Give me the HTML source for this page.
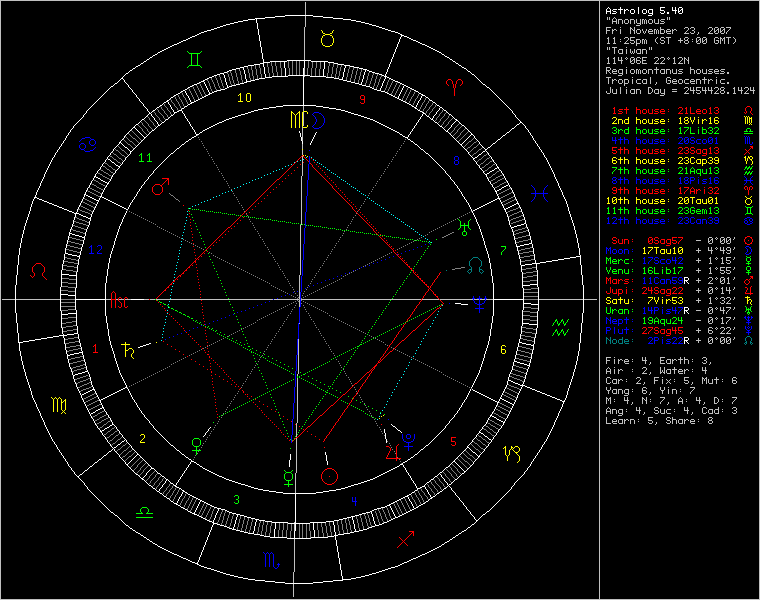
<!DOCTYPE html>
<html lang="en"><head><meta charset="utf-8"><title>Astrolog 5.40 wheel chart</title>
<style>html,body{margin:0;padding:0;background:#000;overflow:hidden}body{width:760px;height:600px;font-family:"Liberation Sans",sans-serif}svg{display:block}</style></head>
<body>
<svg width="760" height="600" viewBox="0 0 760 600" shape-rendering="crispEdges" role="img">
<title>Astrolog 5.40 chart wheel</title>
<desc>Astrolog 5.40 | &quot;Anonymous&quot; | Fri November 23, 2007 | 11:25pm (ST +8:00 GMT) | &quot;Taiwan&quot; | 114&#176;06E 22&#176;12N | Regiomontanus houses. | Tropical, Geocentric. | Julian Day = 2454428.1424 | 1st house: 21Leo13 | 2nd house: 18Vir16 | 3rd house: 17Lib32 | 4th house: 20Sco01 | 5th house: 23Sag13 | 6th house: 23Cap39 | 7th house: 21Aqu13 | 8th house: 18Pis16 | 9th house: 17Ari32 | 10th house: 20Tau01 | 11th house: 23Gem13 | 12th house: 23Can39 | Sun: 0Sag57 - 0&#176;00' | Moon: 17Tau10 + 4&#176;49' | Merc: 17Sco42 + 1&#176;15' | Venu: 16Lib17 + 1&#176;55' | Mars: 11Can59R + 2&#176;01' | Jupi: 24Sag22 + 0&#176;14' | Satu: 7Vir53 + 1&#176;32' | Uran: 14Pis47R - 0&#176;47' | Nept: 19Aqu24 - 0&#176;17' | Plut: 27Sag45 + 6&#176;22' | Node: 2Pis22R + 0&#176;00' | Fire: 4, Earth: 3, | Air : 2, Water: 4 | Car: 2, Fix: 5, Mut: 6 | Yang: 6, Yin: 7 | M: 4, N: 7, A: 4, D: 7 | Ang: 4, Suc: 4, Cad: 3 | Learn: 5, Share: 8</desc>
<rect width="760" height="600" fill="#000"/>
<path fill="#008080" d="M0 0m469 261h1v5h-1zm2 6h1v2h-1zm0 3h1v2h-1zm8 -3h1v2h-1zm0 3h1v2h-1zm2 -9h1v5h-1zm125 78h1v5h-1zm4 -2h1v3h-1zm0 4h1v3h-1zm2 -1h1v3h-1zm4 0h1v3h-1zm2 0h1v3h-1zm4 -3h1v2h-1zm0 3h1v3h-1zm123 -2h1v3h-1zm6 0h1v3h-1zm-278 -81h5v1h-5zm-1 1h1v1h-1zm6 0h1v1h-1zm-7 1h1v1h-1zm8 0h1v1h-1zm-9 1h1v1h-1zm10 0h1v1h-1zm-10 6h1v1h-1zm10 0h1v1h-1zm-11 3h3v1h-3zm10 0h3v1h-3zm-33 1h1v1h-1zm22 0h1v1h-1zm14 0h1v1h-1zm-15 1h1v1h-1zm16 0h1v1h-1zm-15 1h1v1h-1zm2 0h1v1h-1zm10 0h1v1h-1zm2 0h1v1h-1zm-13 1h1v1h-1zm12 0h1v1h-1zm266 63h3v1h-3zm-141 1h1v1h-1zm140 0h1v1h-1zm4 0h1v1h-1zm-144 1h2v1h-2zm2 1h1v1h-1zm5 0h3v1h-3zm6 0h4v1h-4zm6 0h3v1h-3zm7 0h1v1h-1zm-23 1h2v1h-2zm15 0h1v1h-1zm4 0h1v1h-1zm-4 1h5v1h-5zm8 0h1v1h-1zm114 0h1v1h-1zm4 0h1v1h-1zm-126 1h1v1h-1zm121 0h2v1h-2zm5 0h2v1h-2zm-137 1h3v1h-3zm6 0h4v1h-4zm6 0h4v1h-4zm119 0h1v1h-1zm2 0h1v1h-1zm4 0h1v1h-1zm2 0h1v1h-1zm-7 1h1v1h-1zm6 0h1v1h-1z"/>
<path fill="#c0c0c0" d="M0 0m0 1h1v598h-1zm293 571h1v11h-1zm0 12h1v13h-1zm1 -60h1v7h-1zm0 15h1v33h-1zm1 -66h1v20h-1zm1 -50h1v14h-1zm0 15h1v35h-1zm1 -64h1v2h-1zm0 4h1v45h-1zm1 -39h1v35h-1zm1 -64h1v24h-1zm0 25h1v7h-1zm1 -75h1v50h-1zm1 -49h1v49h-1zm1 -49h1v14h-1zm0 17h1v5h-1zm0 6h1v5h-1zm0 6h1v20h-1zm1 -50h1v5h-1zm0 6h1v14h-1zm1 -85h1v33h-1zm0 41h1v7h-1zm1 -66h1v13h-1zm0 14h1v11h-1zm294 -15h1v598h-1zm7 27h1v2h-1zm0 3h1v3h-1zm0 37h1v2h-1zm0 3h1v3h-1zm0 20h1v2h-1zm0 267h1v2h-1zm0 3h1v3h-1zm0 8h1v2h-1zm0 3h1v2h-1zm0 6h1v5h-1zm0 9h1v3h-1zm0 12h1v5h-1zm0 10h1v2h-1zm0 3h1v2h-1zm0 5h1v6h-1zm1 -400h1v3h-1zm0 30h1v3h-1zm1 -8h1v4h-1zm0 20h1v4h-1zm0 19h1v6h-1zm0 313h1v3h-1zm0 8h1v2h-1zm1 -382h1v3h-1zm0 30h1v3h-1zm1 21h1v2h-1zm0 19h1v6h-1zm0 282h1v2h-1zm0 3h1v2h-1zm0 15h1v3h-1zm0 12h1v5h-1zm0 10h1v2h-1zm0 3h1v2h-1zm2 -393h1v2h-1zm0 3h1v2h-1zm0 9h1v3h-1zm0 50h1v3h-1zm0 8h1v4h-1zm0 291h1v3h-1zm0 10h1v3h-1zm0 20h1v4h-1zm2 -371h1v4h-1zm0 9h1v6h-1zm0 11h1v4h-1zm0 300h1v5h-1zm0 10h1v5h-1zm2 -350h1v2h-1zm0 3h1v2h-1zm0 67h1v4h-1zm0 291h1v3h-1zm0 10h1v3h-1zm0 20h1v4h-1zm2 -390h1v4h-1zm0 30h1v3h-1zm0 7h1v3h-1zm0 13h1v3h-1zm0 10h1v3h-1zm0 281h1v3h-1zm0 10h1v3h-1zm0 10h1v3h-1zm0 9h1v4h-1zm0 20h1v3h-1zm0 10h1v3h-1zm2 -391h1v5h-1zm0 58h1v7h-1zm1 -30h1v3h-1zm0 4h1v3h-1zm1 -41h1v4h-1zm0 30h1v3h-1zm0 20h1v3h-1zm0 10h1v3h-1zm0 310h1v4h-1zm0 20h1v3h-1zm0 10h1v3h-1zm2 -400h1v3h-1zm0 60h1v3h-1zm0 4h1v2h-1zm0 306h1v3h-1zm0 7h1v3h-1zm0 24h1v3h-1zm2 -372h1v5h-1zm0 20h1v5h-1zm0 20h1v5h-1zm1 308h1v3h-1zm0 4h1v3h-1zm1 -381h1v3h-1zm0 18h1v2h-1zm0 42h1v3h-1zm0 310h1v3h-1zm2 -370h1v4h-1zm0 9h1v5h-1zm0 9h1v2h-1zm0 11h1v4h-1zm0 9h1v3h-1zm0 12h1v3h-1zm0 20h1v3h-1zm0 330h1v4h-1zm2 -369h1v2h-1zm0 28h1v5h-1zm0 323h1v2h-1zm2 -382h1v4h-1zm0 7h1v3h-1zm0 4h1v3h-1zm0 10h1v2h-1zm0 8h1v4h-1zm0 11h1v3h-1zm0 10h1v3h-1zm0 20h1v3h-1zm0 330h1v4h-1zm2 -401h1v4h-1zm0 11h1v3h-1zm0 10h1v3h-1zm0 4h1v2h-1zm0 6h1v3h-1zm0 8h1v2h-1zm0 3h1v2h-1zm0 9h1v4h-1zm0 10h1v3h-1zm0 10h1v4h-1zm0 317h1v3h-1zm2 -337h1v4h-1zm1 337h1v3h-1zm0 4h1v3h-1zm1 -392h1v4h-1zm0 11h1v3h-1zm0 10h1v3h-1zm0 10h1v3h-1zm0 11h1v2h-1zm0 9h1v4h-1zm0 20h1v4h-1zm0 288h1v2h-1zm2 -358h1v4h-1zm0 9h1v2h-1zm0 11h1v4h-1zm0 10h1v4h-1zm0 8h1v2h-1zm0 3h1v2h-1zm0 9h1v3h-1zm0 10h1v3h-1zm0 277h1v3h-1zm0 31h1v2h-1zm0 3h1v2h-1zm0 8h1v5h-1zm1 -368h1v2h-1zm1 -11h1v4h-1zm0 20h1v4h-1zm0 342h1v2h-1zm0 30h1v2h-1zm1 -381h1v2h-1zm0 326h1v3h-1zm0 4h1v3h-1zm1 -341h1v4h-1zm0 9h1v2h-1zm0 11h1v4h-1zm0 10h1v4h-1zm0 20h1v3h-1zm0 10h1v3h-1zm0 288h1v2h-1zm0 23h1v2h-1zm0 6h1v3h-1zm0 4h1v3h-1zm2 -381h1v3h-1zm0 50h1v4h-1zm0 18h1v5h-1zm0 330h1v2h-1zm1 -371h1v3h-1zm1 30h1v7h-1zm0 285h1v2h-1zm0 10h1v2h-1zm0 20h1v2h-1zm1 -345h1v3h-1zm1 -27h1v3h-1zm0 50h1v4h-1zm0 19h1v3h-1zm0 332h1v2h-1zm2 -402h1v4h-1zm0 11h1v4h-1zm0 60h1v3h-1zm0 288h1v2h-1zm0 3h1v3h-1zm0 27h1v2h-1zm1 -369h1v3h-1zm1 -9h1v4h-1zm0 37h1v2h-1zm0 3h1v4h-1zm0 12h1v2h-1zm0 340h1v2h-1zm2 -403h1v4h-1zm0 11h1v4h-1zm0 28h1v2h-1zm0 32h1v3h-1zm0 321h1v2h-1zm2 -384h1v2h-1zm0 3h1v3h-1zm0 8h1v2h-1zm0 32h1v3h-1zm0 19h1v4h-1zm0 269h1v2h-1zm0 3h1v2h-1zm0 6h1v5h-1zm0 20h1v3h-1zm0 15h1v2h-1zm0 7h1v4h-1zm2 -39h1v2h-1zm0 9h1v5h-1zm0 12h1v3h-1zm2 -361h1v3h-1zm0 11h1v2h-1zm0 17h1v2h-1zm0 12h1v3h-1zm0 19h1v4h-1zm0 278h1v5h-1zm0 20h1v3h-1zm0 22h1v4h-1zm2 -339h1v4h-1zm0 8h1v5h-1zm0 282h1v3h-1zm0 10h1v3h-1zm0 40h1v3h-1zm0 8h1v2h-1zm1 -401h1v3h-1zm1 21h1v6h-1zm0 351h1v5h-1zm0 13h1v2h-1zm1 -385h1v3h-1zm1 53h1v4h-1zm0 11h1v2h-1zm0 279h1v3h-1zm0 10h1v3h-1zm0 51h1v2h-1zm2 -390h1v3h-1zm0 38h1v4h-1zm0 292h1v3h-1zm0 29h1v4h-1zm0 27h1v2h-1zm0 3h1v4h-1zm2 -361h1v4h-1zm0 308h1v2h-1zm0 3h1v4h-1zm2 -301h1v4h-1zm0 321h1v4h-1zm0 30h1v4h-1zm2 -340h1v3h-1zm0 319h1v2h-1zm0 3h1v2h-1zm0 18h1v3h-1zm2 -382h1v2h-1zm0 3h1v2h-1zm0 316h1v2h-1zm0 3h1v4h-1zm2 -302h1v2h-1zm0 22h1v3h-1zm0 319h1v2h-1zm0 3h1v2h-1zm0 18h1v3h-1zm2 -382h1v2h-1zm0 3h1v2h-1zm0 18h1v5h-1zm0 21h1v3h-1zm0 277h1v2h-1zm0 3h1v4h-1zm0 11h1v3h-1zm0 7h1v2h-1zm0 29h1v3h-1zm0 14h1v3h-1zm3 -14h1v3h-1zm0 4h1v3h-1zm1 -383h1v2h-1zm0 13h1v2h-1zm0 16h1v3h-1zm0 4h1v3h-1zm0 27h1v2h-1zm0 272h1v4h-1zm0 21h1v2h-1zm2 -314h1v2h-1zm0 3h1v4h-1zm0 17h1v3h-1zm0 305h1v2h-1zm2 -10h1v2h-1zm0 30h1v2h-1zm1 -325h1v3h-1zm0 4h1v3h-1zm1 -63h1v2h-1zm0 3h1v2h-1zm0 39h1v4h-1zm2 -32h1v3h-1zm0 32h1v3h-1zm0 10h1v4h-1zm0 8h1v2h-1zm0 309h1v3h-1zm2 -365h1v2h-1zm0 216h1v2h-1zm0 3h1v2h-1zm0 7h1v2h-1zm0 3h1v2h-1zm0 7h1v2h-1zm0 3h1v2h-1zm0 7h1v2h-1zm0 3h1v2h-1zm0 7h1v2h-1zm0 3h1v2h-1zm0 7h1v2h-1zm0 3h1v2h-1zm0 27h1v2h-1zm0 3h1v2h-1zm0 7h1v2h-1zm0 3h1v2h-1zm1 56h1v3h-1zm0 4h1v3h-1zm1 -361h1v3h-1zm0 30h1v3h-1zm0 10h1v4h-1zm0 11h1v2h-1zm2 -53h1v3h-1zm0 31h1v4h-1zm0 18h1v3h-1zm0 280h1v3h-1zm0 12h1v5h-1zm0 29h1v5h-1zm2 -331h1v2h-1zm0 3h1v4h-1zm0 299h1v2h-1zm0 23h1v2h-1zm1 -315h1v3h-1zm0 4h1v3h-1zm0 276h1v3h-1zm0 4h1v3h-1zm1 -331h1v3h-1zm0 29h1v4h-1zm0 289h1v2h-1zm0 3h1v2h-1zm0 18h1v5h-1zm2 -298h1v3h-1zm0 6h1v3h-1zm0 151h1v3h-1zm0 9h1v3h-1zm0 41h1v3h-1zm0 20h1v3h-1zm0 10h1v3h-1zm0 10h1v2h-1zm0 3h1v2h-1zm0 7h1v3h-1zm0 41h1v4h-1zm0 31h1v3h-1zm0 8h1v2h-1zm0 3h1v2h-1zm2 -162h1v4h-1zm0 10h1v4h-1zm0 30h1v4h-1zm0 63h1v2h-1zm1 -275h1v3h-1zm0 4h1v3h-1zm0 156h1v3h-1zm0 4h1v3h-1zm1 -223h1v2h-1zm0 212h1v3h-1zm0 38h1v2h-1zm0 12h1v3h-1zm0 20h1v3h-1zm0 10h1v3h-1zm0 11h1v2h-1zm0 9h1v3h-1zm0 39h1v4h-1zm0 31h1v3h-1zm0 11h1v2h-1zm2 -393h1v3h-1zm0 10h1v5h-1zm0 360h1v5h-1zm0 12h1v3h-1zm2 -331h1v5h-1zm0 298h1v2h-1zm0 3h1v4h-1zm2 -350h1v3h-1zm0 11h1v2h-1zm0 47h1v2h-1zm0 311h1v3h-1zm0 8h1v2h-1zm0 3h1v3h-1zm2 -382h1v3h-1zm0 11h1v5h-1zm0 41h1v3h-1zm0 8h1v2h-1zm0 3h1v2h-1zm0 147h1v3h-1zm0 9h1v3h-1zm0 21h1v2h-1zm0 10h1v3h-1zm0 29h1v3h-1zm0 31h1v3h-1zm2 -299h1v2h-1zm0 220h1v4h-1zm0 30h1v4h-1zm0 30h1v4h-1zm1 -72h1v3h-1zm0 4h1v3h-1zm0 56h1v3h-1zm0 4h1v3h-1zm1 -281h1v3h-1zm0 9h1v5h-1zm0 52h1v2h-1zm0 149h1v3h-1zm0 31h1v2h-1zm0 9h1v3h-1zm0 18h1v2h-1zm0 3h1v2h-1zm0 27h1v2h-1zm0 12h1v3h-1zm2 -308h1v2h-1zm0 206h1v3h-1zm0 10h1v2h-1zm0 10h1v2h-1zm0 10h1v2h-1zm0 19h1v3h-1zm0 25h1v2h-1zm0 10h1v2h-1zm0 16h1v3h-1zm2 -300h1v6h-1zm0 241h1v4h-1zm1 8h1v3h-1zm0 4h1v3h-1zm1 -51h1v3h-1zm0 8h1v2h-1zm0 3h1v2h-1zm0 10h1v2h-1zm0 10h1v2h-1zm0 27h1v2h-1zm0 30h1v2h-1zm0 12h1v3h-1zm2 38h1v2h-1zm0 3h1v2h-1zm0 21h1v2h-1zm2 -313h1v4h-1zm0 148h1v2h-1zm0 10h1v2h-1zm0 10h1v2h-1zm0 10h1v2h-1zm0 10h1v2h-1zm0 10h1v2h-1zm0 10h1v2h-1zm0 10h1v2h-1zm0 10h1v2h-1zm0 10h1v2h-1zm0 10h1v2h-1zm1 -298h1v3h-1zm1 342h1v2h-1zm0 27h1v2h-1zm0 3h1v2h-1zm2 -324h1v3h-1zm3 0h1v3h-1zm0 4h1v3h-1zm7 -3h1v2h-1zm2 -1h1v3h-1zm3 0h1v3h-1zm0 4h1v3h-1zm6 -90h1v598h-1zm-759 -1h760v1h-760zm614 17h1v1h-1zm-1 1h1v1h-1zm2 0h1v1h-1zm3 1h4v1h-4zm7 0h3v1h-3zm5 0h4v1h-4zm12 0h2v1h-2zm3 0h1v1h-1zm4 0h3v1h-3zm12 0h4v1h-4zm-1 1h1v1h-1zm-48 1h5v1h-5zm49 0h3v1h-3zm3 1h1v1h-1zm-39 1h3v1h-3zm12 0h4v1h-4zm12 0h3v1h-3zm6 0h4v1h-4zm5 0h4v1h-4zm-20 1h1v1h-1zm-4 1h4v1h-4zm-30 2h5v1h-5zm14 0h1v1h-1zm10 0h1v1h-1zm55 0h3v1h-3zm6 0h3v1h-3zm18 0h3v1h-3zm6 0h3v1h-3zm6 0h3v1h-3zm5 0h5v1h-5zm-96 1h2v1h-2zm54 0h1v1h-1zm6 0h1v1h-1zm18 0h1v1h-1zm10 0h1v1h-1zm6 0h1v1h-1zm6 0h1v1h-1zm-118 1h1v1h-1zm2 0h2v1h-2zm18 0h1v1h-1zm5 0h3v1h-3zm12 0h3v1h-3zm5 0h2v1h-2zm3 0h1v1h-1zm3 0h4v1h-4zm7 0h3v1h-3zm5 0h1v1h-1zm2 0h2v1h-2zm43 0h2v1h-2zm6 0h2v1h-2zm6 0h1v1h-1zm-123 1h4v1h-4zm6 0h2v1h-2zm4 0h1v1h-1zm17 0h2v1h-2zm15 0h1v1h-1zm4 0h1v1h-1zm14 0h1v1h-1zm4 0h1v1h-1zm2 0h2v1h-2zm4 0h1v1h-1zm11 0h1v1h-1zm5 0h2v1h-2zm19 0h1v1h-1zm5 0h1v1h-1zm6 0h1v1h-1zm6 0h1v1h-1zm-80 1h5v1h-5zm18 0h5v1h-5zm20 0h1v1h-1zm24 0h1v1h-1zm4 0h2v1h-2zm6 0h2v1h-2zm7 0h1v1h-1zm-79 1h1v1h-1zm18 0h1v1h-1zm19 0h1v1h-1zm5 0h1v1h-1zm19 0h1v1h-1zm5 0h1v1h-1zm6 0h1v1h-1zm-83 1h3v1h-3zm7 0h1v1h-1zm5 0h4v1h-4zm11 0h4v1h-4zm7 0h4v1h-4zm17 0h5v1h-5zm7 0h3v1h-3zm17 0h5v1h-5zm7 0h3v1h-3zm6 0h3v1h-3zm-24 1h1v1h-1zm-89 3h1v1h-1zm6 0h1v1h-1zm11 0h3v1h-3zm5 0h5v1h-5zm27 0h1v1h-1zm4 0h3v1h-3zm5 0h5v1h-5zm19 0h3v1h-3zm12 0h3v1h-3zm6 0h3v1h-3zm12 0h3v1h-3zm5 0h1v1h-1zm4 0h1v1h-1zm2 0h5v1h-5zm7 0h1v1h-1zm-126 1h2v1h-2zm6 0h2v1h-2zm11 0h1v1h-1zm32 0h1v1h-1zm8 0h1v1h-1zm24 0h1v1h-1zm12 0h1v1h-1zm6 0h1v1h-1zm12 0h1v1h-1zm2 0h2v1h-2zm3 0h2v1h-2zm11 0h1v1h-1zm-114 1h1v1h-1zm16 0h4v1h-4zm6 0h2v1h-2zm3 0h1v1h-1zm42 0h1v1h-1zm5 0h1v1h-1zm7 0h2v1h-2zm6 0h2v1h-2zm-78 1h1v1h-1zm3 0h4v1h-4zm31 0h3v1h-3zm17 0h5v1h-5zm7 0h3v1h-3zm13 0h1v1h-1zm6 0h1v1h-1zm12 0h3v1h-3zm-96 1h1v1h-1zm6 0h1v1h-1zm66 0h1v1h-1zm4 0h2v1h-2zm6 0h2v1h-2zm-77 1h1v1h-1zm5 0h1v1h-1zm26 0h1v1h-1zm4 0h1v1h-1zm36 0h1v1h-1zm6 0h1v1h-1zm32 0h1v1h-1zm-127 1h3v1h-3zm6 0h3v1h-3zm11 0h5v1h-5zm7 0h3v1h-3zm5 0h4v1h-4zm21 0h1v1h-1zm4 0h3v1h-3zm24 0h3v1h-3zm12 0h3v1h-3zm6 0h3v1h-3zm12 0h3v1h-3zm18 0h1v1h-1zm-121 4h5v1h-5zm14 0h1v1h-1zm-7 2h4v1h-4zm18 0h4v1h-4zm5 0h4v1h-4zm-23 4h4v1h-4zm12 0h1v1h-1zm2 0h1v1h-1zm4 0h4v1h-4zm-29 4h1v1h-1zm6 0h1v1h-1zm12 0h1v1h-1zm5 0h3v1h-3zm6 0h3v1h-3zm5 0h5v1h-5zm13 0h3v1h-3zm6 0h3v1h-3zm7 0h1v1h-1zm6 0h1v1h-1zm5 0h3v1h-3zm5 0h1v1h-1zm-77 1h2v1h-2zm6 0h2v1h-2zm12 0h1v1h-1zm2 0h1v1h-1zm7 0h1v1h-1zm6 0h1v1h-1zm14 0h1v1h-1zm6 0h1v1h-1zm7 0h1v1h-1zm2 0h1v1h-1zm4 0h2v1h-2zm5 0h1v1h-1zm6 0h2v1h-2zm-58 1h1v1h-1zm7 0h2v1h-2zm35 0h1v1h-1zm18 0h1v1h-1zm-68 1h5v1h-5zm14 0h1v1h-1zm4 0h4v1h-4zm6 0h4v1h-4zm15 0h1v1h-1zm6 0h1v1h-1zm18 0h1v1h-1zm6 0h2v1h-2zm-57 1h2v1h-2zm26 0h1v1h-1zm6 0h1v1h-1zm18 0h1v1h-1zm-50 1h1v1h-1zm25 0h1v1h-1zm6 0h1v1h-1zm18 0h1v1h-1zm-72 1h3v1h-3zm6 0h3v1h-3zm18 0h3v1h-3zm6 0h3v1h-3zm5 0h5v1h-5zm12 0h5v1h-5zm6 0h5v1h-5zm13 0h3v1h-3zm5 0h5v1h-5zm-72 4h4v1h-4zm20 0h1v1h-1zm-13 2h3v1h-3zm6 0h4v1h-4zm12 0h3v1h-3zm5 0h2v1h-2zm3 0h1v1h-1zm4 0h3v1h-3zm5 0h4v1h-4zm6 0h5v1h-5zm7 0h4v1h-4zm5 0h4v1h-4zm13 0h4v1h-4zm11 0h4v1h-4zm7 0h3v1h-3zm12 0h4v1h-4zm6 0h3v1h-3zm6 0h4v1h-4zm-115 1h4v1h-4zm6 0h1v1h-1zm4 0h1v1h-1zm62 0h1v1h-1zm30 0h1v1h-1zm6 0h1v1h-1zm4 0h1v1h-1zm2 0h1v1h-1zm-112 1h1v1h-1zm4 0h5v1h-5zm67 0h3v1h-3zm30 0h3v1h-3zm5 0h5v1h-5zm7 0h3v1h-3zm-112 1h1v1h-1zm3 0h1v1h-1zm70 0h1v1h-1zm30 0h1v1h-1zm2 0h1v1h-1zm10 0h1v1h-1zm3 0h2v1h-2zm-117 1h1v1h-1zm3 0h4v1h-4zm6 0h4v1h-4zm12 0h3v1h-3zm12 0h3v1h-3zm18 0h4v1h-4zm12 0h4v1h-4zm5 0h4v1h-4zm19 0h3v1h-3zm6 0h4v1h-4zm5 0h4v1h-4zm7 0h4v1h-4zm5 0h4v1h-4zm7 0h2v1h-2zm-105 1h1v1h-1zm-4 1h4v1h-4zm-314 1h1v1h-1zm302 1h5v1h-5zm26 0h1v1h-1zm35 0h3v1h-3zm49 0h1v1h-1zm-46 1h1v1h-1zm-58 1h1v1h-1zm2 0h2v1h-2zm5 0h3v1h-3zm5 0h4v1h-4zm13 0h4v1h-4zm6 0h4v1h-4zm30 0h3v1h-3zm6 0h3v1h-3zm6 0h4v1h-4zm6 0h3v1h-3zm5 0h4v1h-4zm6 0h5v1h-5zm6 0h1v1h-1zm2 0h2v1h-2zm11 0h4v1h-4zm-109 1h2v1h-2zm4 0h1v1h-1zm52 0h3v1h-3zm4 0h1v1h-1zm4 0h1v1h-1zm14 0h1v1h-1zm4 0h1v1h-1zm14 0h2v1h-2zm4 0h1v1h-1zm-40 1h5v1h-5zm18 0h5v1h-5zm-18 1h1v1h-1zm18 0h1v1h-1zm37 0h2v1h-2zm-108 1h3v1h-3zm5 0h4v1h-4zm13 0h4v1h-4zm6 0h4v1h-4zm24 0h3v1h-3zm6 0h4v1h-4zm6 0h3v1h-3zm6 0h4v1h-4zm6 0h4v1h-4zm30 0h4v1h-4zm6 0h2v1h-2zm-72 1h1v1h-1zm-29 3h1v1h-1zm22 0h3v1h-3zm37 0h3v1h-3zm11 0h5v1h-5zm19 0h3v1h-3zm6 0h3v1h-3zm13 0h1v1h-1zm11 0h3v1h-3zm-94 1h1v1h-1zm33 0h1v1h-1zm30 0h1v1h-1zm10 0h1v1h-1zm9 0h2v1h-2zm11 0h1v1h-1zm-113 1h4v1h-4zm5 0h4v1h-4zm19 0h4v1h-4zm17 0h5v1h-5zm51 0h1v1h-1zm-36 1h1v1h-1zm3 0h5v1h-5zm6 0h4v1h-4zm6 0h5v1h-5zm6 0h5v1h-5zm9 0h1v1h-1zm4 0h3v1h-3zm17 0h5v1h-5zm9 0h1v1h-1zm3 0h5v1h-5zm-78 1h5v1h-5zm14 0h1v1h-1zm30 0h1v1h-1zm30 0h1v1h-1zm-95 1h1v1h-1zm34 0h1v1h-1zm11 0h1v1h-1zm19 0h1v1h-1zm12 0h2v1h-2zm18 0h1v1h-1zm-138 1h3v1h-3zm6 0h4v1h-4zm18 0h4v1h-4zm17 0h3v1h-3zm7 0h4v1h-4zm6 0h4v1h-4zm23 0h5v1h-5zm13 0h3v1h-3zm17 0h5v1h-5zm7 0h3v1h-3zm6 0h2v1h-2zm6 0h3v1h-3zm11 0h5v1h-5zm-80 1h1v1h-1zm-4 1h4v1h-4zm49 142h3v1h-3zm7 0h1v1h-1zm5 0h3v1h-3zm6 0h3v1h-3zm-15 1h1v1h-1zm3 0h1v1h-1zm2 0h1v1h-1zm7 0h1v1h-1zm6 0h1v1h-1zm-19 1h2v1h-2zm5 0h1v1h-1zm7 0h2v1h-2zm6 0h2v1h-2zm4 0h1v1h-1zm-37 1h5v1h-5zm14 0h1v1h-1zm12 0h1v1h-1zm6 0h1v1h-1zm-20 1h2v1h-2zm12 0h2v1h-2zm6 0h2v1h-2zm-18 1h1v1h-1zm12 0h1v1h-1zm6 0h1v1h-1zm-17 1h3v1h-3zm12 0h3v1h-3zm6 0h3v1h-3zm-11 4h1v1h-1zm11 0h3v1h-3zm-12 1h1v1h-1zm2 0h1v1h-1zm-1 1h1v1h-1zm17 0h1v1h-1zm-37 1h5v1h-5zm12 0h5v1h-5zm12 0h5v1h-5zm7 0h4v1h-4zm-1 2h1v1h-1zm1 1h3v1h-3zm-17 4h1v1h-1zm6 0h1v1h-1zm6 0h1v1h-1zm4 0h5v1h-5zm-17 1h2v1h-2zm6 0h1v1h-1zm2 0h1v1h-1zm4 0h2v1h-2zm-5 1h1v1h-1zm17 0h1v1h-1zm-37 1h5v1h-5zm30 0h4v1h-4zm0 2h1v1h-1zm-17 1h3v1h-3zm12 0h3v1h-3zm6 0h3v1h-3zm-17 4h1v1h-1zm6 0h1v1h-1zm4 0h5v1h-5zm6 0h5v1h-5zm-17 1h2v1h-2zm6 0h1v1h-1zm2 0h1v1h-1zm-1 1h1v1h-1zm17 0h1v1h-1zm-37 1h5v1h-5zm24 0h4v1h-4zm6 0h4v1h-4zm-6 2h1v1h-1zm6 0h1v1h-1zm-17 1h3v1h-3zm12 0h3v1h-3zm6 0h3v1h-3zm-18 4h3v1h-3zm7 0h1v1h-1zm5 0h3v1h-3zm7 0h1v1h-1zm-20 1h1v1h-1zm7 0h1v1h-1zm2 0h1v1h-1zm7 0h1v1h-1zm3 0h2v1h-2zm-11 1h1v1h-1zm7 0h2v1h-2zm10 0h1v1h-1zm-37 1h5v1h-5zm15 0h1v1h-1zm11 0h1v1h-1zm-12 1h1v1h-1zm10 0h2v1h-2zm-11 1h1v1h-1zm11 0h1v1h-1zm-12 1h5v1h-5zm13 0h3v1h-3zm6 0h3v1h-3zm-18 4h3v1h-3zm7 0h1v1h-1zm6 0h1v1h-1zm-10 1h1v1h-1zm3 0h1v1h-1zm2 0h1v1h-1zm4 0h2v1h-2zm-10 1h2v1h-2zm5 0h1v1h-1zm17 0h1v1h-1zm-37 1h5v1h-5zm14 0h1v1h-1zm16 0h5v1h-5zm-18 1h2v1h-2zm0 1h1v1h-1zm1 1h3v1h-3zm12 0h3v1h-3zm-11 4h1v1h-1zm6 0h1v1h-1zm5 0h3v1h-3zm6 0h3v1h-3zm-18 1h2v1h-2zm6 0h1v1h-1zm2 0h1v1h-1zm3 0h1v1h-1zm6 0h1v1h-1zm-724 1h13v1h-13zm14 0h44v1h-44zm90 0h5v1h-5zm10 0h2v1h-2zm3 0h5v1h-5zm6 0h6v1h-6zm19 0h5v1h-5zm6 0h5v1h-5zm6 0h117v1h-117zm118 0h25v1h-25zm27 0h120v1h-120zm121 0h17v1h-17zm18 0h33v1h-33zm34 0h5v1h-5zm6 0h5v1h-5zm6 0h7v1h-7zm53 0h44v1h-44zm45 0h13v1h-13zm132 0h1v1h-1zm17 0h1v1h-1zm-37 1h5v1h-5zm26 0h2v1h-2zm7 0h1v1h-1zm-1 1h1v1h-1zm-8 1h1v1h-1zm7 0h1v1h-1zm-18 1h3v1h-3zm12 0h3v1h-3zm5 0h5v1h-5zm-17 4h3v1h-3zm7 0h1v1h-1zm10 0h5v1h-5zm-14 1h1v1h-1zm3 0h1v1h-1zm2 0h1v1h-1zm13 0h1v1h-1zm-19 1h2v1h-2zm5 0h1v1h-1zm13 0h1v1h-1zm4 0h1v1h-1zm-37 1h5v1h-5zm14 0h1v1h-1zm10 0h5v1h-5zm8 0h1v1h-1zm-20 1h2v1h-2zm19 0h1v1h-1zm-19 1h1v1h-1zm1 1h3v1h-3zm0 4h3v1h-3zm7 0h1v1h-1zm6 0h1v1h-1zm4 0h5v1h-5zm-14 1h1v1h-1zm3 0h1v1h-1zm2 0h1v1h-1zm4 0h2v1h-2zm9 0h1v1h-1zm-19 1h2v1h-2zm5 0h1v1h-1zm13 0h1v1h-1zm4 0h1v1h-1zm-37 1h5v1h-5zm14 0h1v1h-1zm18 0h1v1h-1zm-20 1h2v1h-2zm19 0h1v1h-1zm-19 1h1v1h-1zm-409 1h1v1h-1zm410 0h3v1h-3zm12 0h3v1h-3zm-12 4h3v1h-3zm7 0h1v1h-1zm5 0h3v1h-3zm6 0h3v1h-3zm-15 1h1v1h-1zm3 0h1v1h-1zm2 0h1v1h-1zm3 0h1v1h-1zm6 0h1v1h-1zm-10 1h1v1h-1zm17 0h1v1h-1zm-37 1h5v1h-5zm12 0h4v1h-4zm15 0h1v1h-1zm6 0h1v1h-1zm-7 1h1v1h-1zm6 0h1v1h-1zm-7 1h1v1h-1zm6 0h1v1h-1zm-18 1h3v1h-3zm11 0h5v1h-5zm6 0h5v1h-5zm-17 4h3v1h-3zm7 0h1v1h-1zm5 0h3v1h-3zm6 0h3v1h-3zm-15 1h1v1h-1zm3 0h1v1h-1zm2 0h1v1h-1zm7 0h1v1h-1zm6 0h1v1h-1zm-19 1h2v1h-2zm5 0h1v1h-1zm7 0h2v1h-2zm6 0h2v1h-2zm4 0h1v1h-1zm-37 1h5v1h-5zm14 0h1v1h-1zm12 0h1v1h-1zm6 0h1v1h-1zm-20 1h2v1h-2zm12 0h2v1h-2zm6 0h2v1h-2zm-18 1h1v1h-1zm12 0h1v1h-1zm6 0h1v1h-1zm-17 1h3v1h-3zm12 0h3v1h-3zm6 0h3v1h-3zm-121 14h5v1h-5zm8 0h1v1h-1zm46 0h5v1h-5zm43 0h3v1h-3zm-1 1h1v1h-1zm-84 1h1v1h-1zm2 0h2v1h-2zm5 0h3v1h-3zm7 0h1v1h-1zm35 0h4v1h-4zm5 0h1v1h-1zm2 0h2v1h-2zm4 0h5v1h-5zm6 0h4v1h-4zm8 0h1v1h-1zm-86 1h4v1h-4zm12 0h2v1h-2zm4 0h1v1h-1zm2 0h1v1h-1zm4 0h1v1h-1zm14 0h5v1h-5zm18 0h4v1h-4zm12 0h2v1h-2zm4 0h1v1h-1zm28 0h2v1h-2zm-80 1h5v1h-5zm8 0h1v1h-1zm60 0h1v1h-1zm-68 1h1v1h-1zm78 0h1v1h-1zm-77 1h4v1h-4zm35 0h5v1h-5zm7 0h4v1h-4zm36 0h3v1h-3zm-54 1h1v1h-1zm60 0h1v1h-1zm-101 3h1v1h-1zm6 0h1v1h-1zm29 0h3v1h-3zm-36 1h1v1h-1zm2 0h1v1h-1zm33 0h1v1h-1zm-24 1h1v1h-1zm2 0h2v1h-2zm12 0h1v1h-1zm35 0h4v1h-4zm5 0h5v1h-5zm7 0h3v1h-3zm5 0h1v1h-1zm2 0h2v1h-2zm6 0h1v1h-1zm-74 1h2v1h-2zm4 0h1v1h-1zm23 0h1v1h-1zm33 0h1v1h-1zm4 0h1v1h-1zm2 0h2v1h-2zm4 0h1v1h-1zm14 0h5v1h-5zm-96 1h5v1h-5zm26 0h1v1h-1zm12 0h1v1h-1zm34 0h5v1h-5zm14 0h1v1h-1zm-49 1h1v1h-1zm17 0h2v1h-2zm3 0h2v1h-2zm15 0h1v1h-1zm-36 1h5v1h-5zm18 0h1v1h-1zm4 0h1v1h-1zm3 0h4v1h-4zm12 0h4v1h-4zm-30 1h1v1h-1zm-42 3h3v1h-3zm30 0h3v1h-3zm17 0h5v1h-5zm8 0h1v1h-1zm22 0h5v1h-5zm18 0h1v1h-1zm4 0h1v1h-1zm27 0h3v1h-3zm-123 1h1v1h-1zm26 0h1v1h-1zm66 0h2v1h-2zm3 0h2v1h-2zm31 0h1v1h-1zm-123 1h4v1h-4zm5 0h1v1h-1zm2 0h2v1h-2zm6 0h1v1h-1zm40 0h1v1h-1zm4 0h1v1h-1zm4 0h1v1h-1zm40 0h5v1h-5zm8 0h1v1h-1zm-104 1h2v1h-2zm4 0h1v1h-1zm17 0h1v1h-1zm15 0h4v1h-4zm13 0h1v1h-1zm2 0h1v1h-1zm15 0h4v1h-4zm48 0h4v1h-4zm-106 1h1v1h-1zm12 0h1v1h-1zm30 0h1v1h-1zm6 0h1v1h-1zm48 0h1v1h-1zm-112 1h1v1h-1zm27 0h1v1h-1zm30 0h1v1h-1zm2 0h1v1h-1zm15 0h1v1h-1zm-77 1h3v1h-3zm6 0h4v1h-4zm23 0h5v1h-5zm30 0h1v1h-1zm4 0h1v1h-1zm15 0h3v1h-3zm24 0h4v1h-4zm24 0h3v1h-3zm-90 1h1v1h-1zm48 0h1v1h-1zm-48 3h3v1h-3zm25 0h1v1h-1zm22 0h5v1h-5zm-44 1h1v1h-1zm48 0h1v1h-1zm-81 1h4v1h-4zm5 0h4v1h-4zm7 0h4v1h-4zm7 0h1v1h-1zm40 0h4v1h-4zm8 0h1v1h-1zm13 0h1v1h-1zm-86 1h3v1h-3zm35 0h4v1h-4zm19 0h3v1h-3zm31 0h1v1h-1zm-60 1h1v1h-1zm48 0h1v1h-1zm11 0h1v1h-1zm-78 2h4v1h-4zm12 0h4v1h-4zm18 0h3v1h-3zm-15 1h1v1h-1zm21 0h1v1h-1zm-25 1h4v1h-4zm-18 2h1v1h-1zm4 0h1v1h-1zm32 0h1v1h-1zm18 0h5v1h-5zm20 0h1v1h-1zm34 0h3v1h-3zm18 0h5v1h-5zm-126 1h2v1h-2zm3 0h2v1h-2zm33 0h2v1h-2zm22 0h1v1h-1zm15 0h1v1h-1zm2 0h1v1h-1zm36 0h1v1h-1zm19 0h1v1h-1zm-122 1h1v1h-1zm30 0h1v1h-1zm6 0h1v1h-1zm13 0h1v1h-1zm23 0h1v1h-1zm36 0h1v1h-1zm13 0h1v1h-1zm-111 1h5v1h-5zm21 0h2v1h-2zm17 0h1v1h-1zm34 0h5v1h-5zm38 0h1v1h-1zm-120 1h1v1h-1zm36 0h1v1h-1zm11 0h1v1h-1zm17 0h5v1h-5zm8 0h1v1h-1zm36 0h1v1h-1zm11 0h1v1h-1zm-16 1h1v1h-1zm-3 1h3v1h-3zm-83 1h1v1h-1zm36 0h1v1h-1zm36 0h1v1h-1zm-95 3h1v1h-1zm47 0h3v1h-3zm48 0h3v1h-3zm30 0h3v1h-3zm-126 1h1v1h-1zm2 0h1v1h-1zm49 0h1v1h-1zm48 0h1v1h-1zm26 0h1v1h-1zm-120 1h4v1h-4zm7 0h4v1h-4zm7 0h1v1h-1zm41 0h4v1h-4zm7 0h1v1h-1zm35 0h4v1h-4zm6 0h4v1h-4zm7 0h1v1h-1zm-86 1h5v1h-5zm19 0h3v1h-3zm29 0h5v1h-5zm50 0h2v1h-2zm-128 1h5v1h-5zm20 0h1v1h-1zm48 0h1v1h-1zm48 0h1v1h-1zm-68 1h1v1h-1zm52 0h1v1h-1zm26 0h1v1h-1zm-113 1h4v1h-4zm36 0h3v1h-3zm6 0h4v1h-4zm6 0h4v1h-4zm36 0h3v1h-3zm6 0h4v1h-4zm6 0h4v1h-4zm18 0h3v1h-3zm-111 1h1v1h-1zm21 0h1v1h-1zm48 0h1v1h-1zm-73 1h4v1h-4zm30 2h5v1h-5zm19 0h3v1h-3zm42 0h3v1h-3zm-39 1h1v1h-1zm42 0h1v1h-1zm-99 1h3v1h-3zm6 0h4v1h-4zm5 0h1v1h-1zm2 0h2v1h-2zm4 0h4v1h-4zm8 0h1v1h-1zm34 0h4v1h-4zm7 0h4v1h-4zm5 0h1v1h-1zm2 0h2v1h-2zm5 0h3v1h-3zm7 0h1v1h-1zm13 0h1v1h-1zm-99 1h1v1h-1zm4 0h1v1h-1zm8 0h2v1h-2zm4 0h1v1h-1zm20 0h4v1h-4zm19 0h3v1h-3zm17 0h2v1h-2zm4 0h1v1h-1zm2 0h1v1h-1zm4 0h1v1h-1zm15 0h3v1h-3zm-97 1h5v1h-5zm26 0h1v1h-1zm52 0h5v1h-5zm8 0h1v1h-1zm-86 1h1v1h-1zm36 0h1v1h-1zm18 0h1v1h-1zm24 0h1v1h-1zm-84 1h5v1h-5zm7 0h4v1h-4zm6 0h4v1h-4zm30 0h3v1h-3zm18 0h3v1h-3zm12 0h4v1h-4zm12 0h4v1h-4zm18 0h3v1h-3zm-54 1h1v1h-1zm-361 98h1v1h-1zm-294 77h760v1h-760z"/>
<path fill="#808080" d="M0 0m137 465h1v2h-1zm3 3h1v2h-1zm2 -345h1v2h-1zm0 6h1v2h-1zm1 341h1v2h-1zm4 -341h1v2h-1zm1 -5h1v2h-1zm1 -6h1v2h-1zm0 358h1v2h-1zm1 5h1v2h-1zm3 -358h1v2h-1zm1 360h1v2h-1zm1 -370h1v2h-1zm0 362h1v2h-1zm1 12h1v2h-1zm2 -377h1v2h-1zm0 368h1v2h-1zm1 -360h1v2h-1zm0 365h1v2h-1zm2 -376h1v2h-1zm1 372h1v2h-1zm1 -363h1v2h-1zm0 376h1v2h-1zm1 -388h1v2h-1zm0 7h1v2h-1zm2 377h1v2h-1zm0 6h1v2h-1zm1 -386h1v2h-1zm0 7h1v2h-1zm2 369h1v2h-1zm0 6h1v2h-1zm1 -378h1v2h-1zm0 384h1v2h-1zm1 -396h1v2h-1zm1 386h1v2h-1zm0 7h1v2h-1zm1 -2h1v2h-1zm0 8h1v2h-1zm1 -395h1v2h-1zm0 393h1v2h-1zm1 -400h1v2h-1zm0 391h1v2h-1zm0 7h1v2h-1zm1 -396h1v2h-1zm1 9h1v2h-1zm0 384h1v2h-1zm1 -397h1v2h-1zm0 7h1v2h-1zm0 388h1v2h-1zm1 -393h1v2h-1zm0 7h1v2h-1zm1 2h1v2h-1zm0 397h1v2h-1zm1 -403h1v2h-1zm0 401h1v2h-1zm1 -408h1v2h-1zm0 9h1v2h-1zm0 397h1v2h-1zm1 -404h1v2h-1zm0 9h1v2h-1zm1 392h1v2h-1zm0 9h1v2h-1zm1 -407h1v2h-1zm0 396h1v2h-1zm0 9h1v2h-1zm1 -403h1v2h-1zm0 401h1v2h-1zm1 -399h1v2h-1zm0 406h1v2h-1zm1 -10h1v2h-1zm0 8h1v2h-1zm1 -417h1v2h-1zm0 407h1v2h-1zm0 8h1v2h-1zm1 -413h1v2h-1zm0 411h1v2h-1zm0 8h1v2h-1zm1 -417h1v2h-1zm0 407h1v2h-1zm0 8h1v2h-1zm1 -413h1v2h-1zm0 403h1v2h-1zm0 8h1v2h-1zm1 -419h1v2h-1zm0 10h1v2h-1zm0 407h1v2h-1zm1 -415h1v2h-1zm0 10h1v2h-1zm0 403h1v2h-1zm1 -411h1v2h-1zm0 409h1v2h-1zm1 -407h1v2h-1zm1 -7h1v2h-1zm0 9h1v2h-1zm1 -7h1v2h-1zm0 9h1v2h-1zm1 -7h1v2h-1zm0 422h1v2h-1zm1 -428h1v2h-1zm0 8h1v2h-1zm0 418h1v2h-1zm1 -424h1v2h-1zm0 8h1v2h-1zm0 414h1v2h-1zm0 7h1v2h-1zm1 -427h1v2h-1zm0 418h1v2h-1zm0 7h1v2h-1zm1 -423h1v2h-1zm0 414h1v2h-1zm0 7h1v2h-1zm1 -419h1v2h-1zm0 417h1v2h-1zm1 -415h1v2h-1zm0 413h1v2h-1zm0 10h1v2h-1zm1 -12h1v2h-1zm0 10h1v2h-1zm1 -436h1v2h-1zm0 434h1v2h-1zm1 -432h1v2h-1zm0 430h1v2h-1zm1 -428h1v3h-1zm0 426h1v2h-1zm0 10h1v2h-1zm1 -433h1v3h-1zm0 421h1v2h-1zm0 10h1v2h-1zm1 -439h1v2h-1zm0 11h1v2h-1zm0 425h1v3h-1zm1 -434h1v2h-1zm0 431h1v3h-1zm1 -429h1v2h-1zm0 427h1v2h-1zm1 -425h1v3h-1zm1 -8h1v2h-1zm0 11h1v2h-1zm1 -9h1v2h-1zm0 11h1v2h-1zm1 -9h1v3h-1zm0 442h1v2h-1zm1 -439h1v3h-1zm0 437h1v2h-1zm1 -445h1v2h-1zm0 11h1v2h-1zm0 431h1v3h-1zm1 -440h1v3h-1zm0 11h1v2h-1zm0 426h1v3h-1zm1 -434h1v3h-1zm0 432h1v2h-1zm0 11h1v2h-1zm1 -440h1v3h-1zm0 427h1v2h-1zm0 10h1v3h-1zm1 -434h1v2h-1zm0 430h1v4h-1zm1 -3h1v3h-1zm1 -2h1v2h-1zm0 13h1v2h-1zm1 -3h1v3h-1zm1 -449h1v2h-1zm0 446h1v3h-1zm1 -444h1v3h-1zm0 441h1v3h-1zm1 -438h1v4h-1zm0 436h1v2h-1zm0 13h1v2h-1zm1 -455h1v2h-1zm0 10h1v3h-1zm0 442h1v3h-1zm1 -450h1v3h-1zm0 11h1v2h-1zm0 435h1v4h-1zm1 -443h1v4h-1zm0 440h1v3h-1zm1 -436h1v3h-1zm0 434h1v2h-1zm1 -431h1v2h-1zm1 -13h1v3h-1zm1 3h1v4h-1zm1 4h1v4h-1zm0 450h1v3h-1zm1 -446h1v3h-1zm0 442h1v4h-1zm1 -454h1v2h-1zm0 450h1v4h-1zm1 -448h1v4h-1zm0 445h1v3h-1zm1 -441h1v5h-1zm0 453h1v3h-1zm1 -448h1v3h-1zm0 444h1v4h-1zm1 -4h1v4h-1zm1 -3h1v3h-1zm1 12h1v3h-1zm1 -4h1v4h-1zm1 -458h1v2h-1zm0 454h1v4h-1zm1 -452h1v4h-1zm0 449h1v3h-1zm1 -445h1v5h-1zm0 457h1v3h-1zm1 -452h1v3h-1zm0 448h1v4h-1zm1 -460h1v4h-1zm0 456h1v4h-1zm1 -452h1v6h-1zm0 449h1v3h-1zm1 -443h1v4h-1zm2 -11h1v4h-1zm1 4h1v6h-1zm1 6h1v4h-1zm0 457h1v2h-1zm1 -5h1v5h-1zm1 -462h1v3h-1zm0 458h1v4h-1zm1 -455h1v6h-1zm0 453h1v2h-1zm1 -447h1v4h-1zm0 457h1v4h-1zm1 -6h1v6h-1zm1 -4h1v4h-1zm2 11h1v4h-1zm1 -7h1v7h-1zm1 -462h1v4h-1zm0 459h1v3h-1zm1 -455h1v6h-1zm1 6h1v4h-1zm0 460h1v3h-1zm1 -7h1v7h-1zm1 -464h1v4h-1zm0 460h1v4h-1zm1 -456h1v7h-1zm1 7h1v3h-1zm2 -11h1v4h-1zm1 4h1v6h-1zm1 6h1v4h-1zm1 458h1v7h-1zm1 -7h1v7h-1zm1 -461h1v6h-1zm1 6h1v8h-1zm1 462h1v7h-1zm1 -7h1v7h-1zm3 7h1v7h-1zm1 -7h1v7h-1zm1 -462h1v7h-1zm1 7h1v7h-1zm1 463h1v7h-1zm1 -7h1v7h-1zm1 -463h1v14h-1zm4 0h1v14h-1zm3 0h1v14h-1zm0 463h1v14h-1zm3 0h1v14h-1zm4 0h1v14h-1zm1 -456h1v7h-1zm1 -7h1v7h-1zm1 463h1v7h-1zm1 7h1v7h-1zm1 -463h1v8h-1zm1 -6h1v6h-1zm3 6h1v8h-1zm1 -6h1v6h-1zm1 461h1v7h-1zm1 7h1v7h-1zm1 -461h1v7h-1zm1 -7h1v7h-1zm1 461h1v4h-1zm1 4h1v6h-1zm1 6h1v4h-1zm2 -10h1v3h-1zm1 3h1v7h-1zm1 -453h1v4h-1zm0 460h1v4h-1zm1 -467h1v7h-1zm1 -3h1v3h-1zm0 459h1v4h-1zm1 4h1v6h-1zm1 -452h1v3h-1zm0 458h1v4h-1zm1 -465h1v7h-1zm1 -4h1v4h-1zm2 11h1v4h-1zm1 -6h1v6h-1zm1 -4h1v4h-1zm0 457h1v4h-1zm1 -445h1v2h-1zm0 449h1v6h-1zm1 -454h1v5h-1zm0 460h1v3h-1zm1 -464h1v4h-1zm1 -2h1v2h-1zm0 455h1v4h-1zm1 4h1v6h-1zm1 6h1v4h-1zm2 -11h1v4h-1zm1 -442h1v3h-1zm0 446h1v6h-1zm1 -450h1v4h-1zm0 456h1v4h-1zm1 -460h1v4h-1zm0 449h1v3h-1zm1 -452h1v3h-1zm0 455h1v4h-1zm1 -443h1v3h-1zm0 447h1v5h-1zm1 -451h1v4h-1zm0 456h1v2h-1zm1 -460h1v4h-1zm1 -3h1v3h-1zm1 12h1v3h-1zm1 -4h1v4h-1zm1 -4h1v4h-1zm0 445h1v3h-1zm1 -448h1v3h-1zm0 451h1v4h-1zm1 -439h1v3h-1zm0 443h1v5h-1zm1 -447h1v4h-1zm0 452h1v2h-1zm1 -456h1v4h-1zm0 443h1v3h-1zm1 -446h1v3h-1zm0 449h1v4h-1zm1 4h1v4h-1zm1 4h1v3h-1zm1 -12h1v2h-1zm1 -431h1v2h-1zm0 433h1v3h-1zm1 -436h1v3h-1zm0 439h1v4h-1zm1 -443h1v4h-1zm0 437h1v2h-1zm0 10h1v3h-1zm1 -450h1v3h-1zm0 442h1v3h-1zm0 11h1v2h-1zm1 -442h1v2h-1zm0 434h1v4h-1zm1 -437h1v3h-1zm0 441h1v3h-1zm1 -444h1v3h-1zm0 447h1v2h-1zm1 -450h1v3h-1zm1 -2h1v2h-1zm0 13h1v2h-1zm1 -3h1v3h-1zm1 -4h1v4h-1zm0 432h1v2h-1zm1 -435h1v3h-1zm0 11h1v2h-1zm0 426h1v3h-1zm1 -439h1v2h-1zm0 11h1v2h-1zm0 431h1v3h-1zm1 -434h1v3h-1zm0 427h1v2h-1zm0 10h1v3h-1zm1 -440h1v3h-1zm0 432h1v2h-1zm0 11h1v2h-1zm1 -445h1v2h-1zm0 436h1v3h-1zm1 -438h1v2h-1zm0 441h1v3h-1zm1 -8h1v2h-1zm0 11h1v2h-1zm1 -9h1v2h-1zm0 11h1v2h-1zm1 -9h1v2h-1zm1 -424h1v2h-1zm0 426h1v3h-1zm1 -429h1v3h-1zm0 432h1v2h-1zm1 -435h1v3h-1zm0 9h1v2h-1zm0 417h1v2h-1zm0 11h1v2h-1zm1 -439h1v2h-1zm0 9h1v2h-1zm0 421h1v3h-1zm1 -423h1v2h-1zm0 426h1v3h-1zm1 -428h1v2h-1zm0 431h1v2h-1zm1 -433h1v2h-1zm0 10h1v2h-1zm1 -12h1v2h-1zm0 10h1v2h-1zm1 -2h1v2h-1zm1 -2h1v2h-1zm0 417h1v2h-1zm1 -419h1v2h-1zm0 8h1v2h-1zm0 413h1v2h-1zm1 -423h1v2h-1zm0 8h1v2h-1zm0 417h1v2h-1zm1 -419h1v2h-1zm0 414h1v2h-1zm0 7h1v2h-1zm1 -423h1v2h-1zm0 418h1v2h-1zm0 7h1v2h-1zm1 -427h1v2h-1zm0 422h1v2h-1zm0 7h1v2h-1zm1 -5h1v2h-1zm1 -8h1v2h-1zm0 10h1v2h-1zm1 -413h1v2h-1zm0 405h1v2h-1zm1 -407h1v2h-1zm0 409h1v2h-1zm1 -411h1v2h-1zm0 413h1v2h-1zm1 -415h1v2h-1zm0 8h1v2h-1zm0 399h1v2h-1zm0 10h1v2h-1zm1 -419h1v2h-1zm0 8h1v2h-1zm0 403h1v2h-1zm1 -413h1v2h-1zm0 8h1v2h-1zm0 407h1v2h-1zm1 -409h1v2h-1zm0 411h1v2h-1zm1 -413h1v2h-1zm0 9h1v2h-1zm0 406h1v2h-1zm1 -417h1v2h-1zm0 9h1v2h-1zm1 -2h1v2h-1zm0 398h1v2h-1zm1 2h1v2h-1zm1 -403h1v2h-1zm0 9h1v2h-1zm1 -11h1v2h-1zm0 9h1v2h-1zm0 399h1v2h-1zm1 -401h1v2h-1zm0 394h1v2h-1zm0 9h1v2h-1zm1 -7h1v2h-1zm0 9h1v2h-1zm1 -408h1v2h-1zm1 -2h1v2h-1zm0 397h1v2h-1zm0 7h1v2h-1zm1 -5h1v2h-1zm0 7h1v2h-1zm1 -393h1v2h-1zm0 395h1v2h-1zm1 -397h1v2h-1zm0 384h1v2h-1zm0 7h1v2h-1zm1 -393h1v2h-1zm0 395h1v2h-1zm1 -389h1v2h-1zm0 391h1v2h-1zm1 -400h1v2h-1zm0 393h1v2h-1zm1 -395h1v2h-1zm0 8h1v2h-1zm1 -2h1v2h-1zm0 7h1v2h-1zm1 386h1v2h-1zm1 -396h1v2h-1zm0 384h1v2h-1zm1 -378h1v2h-1zm0 6h1v2h-1zm2 369h1v2h-1zm0 7h1v2h-1zm1 -386h1v2h-1zm0 6h1v2h-1zm2 377h1v2h-1zm0 7h1v2h-1zm1 -388h1v2h-1zm0 376h1v2h-1zm1 -363h1v2h-1zm1 372h1v2h-1zm2 -376h1v2h-1zm0 365h1v2h-1zm1 -360h1v2h-1zm0 368h1v2h-1zm2 -377h1v2h-1zm1 12h1v2h-1zm0 362h1v2h-1zm1 -370h1v2h-1zm1 360h1v2h-1zm3 -358h1v2h-1zm0 6h1v2h-1zm1 357h1v2h-1zm2 -11h1v2h-1zm0 6h1v2h-1zm3 -346h1v2h-1zm2 346h1v2h-1zm1 -344h1v2h-1zm0 339h1v2h-1zm3 -336h1v2h-1zm-91 -61h1v1h-1zm20 7h1v1h-1zm8 3h1v1h-1zm-198 1h1v1h-1zm201 1h1v1h-1zm-204 1h1v1h-1zm-4 1h1v1h-1zm-4 2h1v1h-1zm223 1h1v1h-1zm-27 1h1v1h-1zm-172 1h1v1h-1zm203 0h1v1h-1zm-234 1h1v1h-1zm213 3h1v1h-1zm-220 1h1v1h-1zm28 0h1v1h-1zm210 0h1v1h-1zm-228 1h1v1h-1zm232 1h1v1h-1zm-246 1h1v1h-1zm10 0h1v1h-1zm249 1h1v1h-1zm-252 1h1v1h-1zm-5 1h1v1h-1zm251 0h1v1h-1zm-250 1h1v1h-1zm254 0h1v1h-1zm-15 2h1v1h-1zm19 0h1v1h-1zm-271 1h1v1h-1zm5 0h1v1h-1zm10 0h1v1h-1zm9 0h1v1h-1zm246 0h1v1h-1zm-264 1h1v1h-1zm10 0h1v1h-1zm258 0h1v1h-1zm-253 1h1v1h-1zm243 0h1v1h-1zm9 0h1v1h-1zm-276 1h1v1h-1zm5 0h1v1h-1zm257 0h1v1h-1zm9 0h1v1h-1zm-265 1h1v1h-1zm5 0h1v1h-1zm10 0h1v1h-1zm249 0h1v1h-1zm-274 1h1v1h-1zm16 0h1v1h-1zm253 0h1v1h-1zm9 0h1v1h-1zm-277 1h1v1h-1zm5 0h1v1h-1zm271 0h1v1h-1zm11 0h1v1h-1zm5 0h1v1h-1zm-286 1h1v1h-1zm5 0h1v1h-1zm260 0h1v1h-1zm15 0h1v1h-1zm5 0h1v1h-1zm-284 1h1v1h-1zm5 0h1v1h-1zm5 0h1v1h-1zm-15 1h1v1h-1zm6 0h1v1h-1zm266 0h1v1h-1zm21 0h1v1h-1zm-302 1h1v1h-1zm10 0h1v1h-1zm281 0h1v1h-1zm5 0h1v1h-1zm-295 1h1v1h-1zm10 0h1v1h-1zm10 0h1v1h-1zm269 0h1v1h-1zm5 0h1v1h-1zm-278 1h1v1h-1zm277 0h1v1h-1zm6 0h1v1h-1zm5 0h1v1h-1zm-287 1h1v1h-1zm281 0h1v1h-1zm5 0h1v1h-1zm-307 1h1v1h-1zm6 0h1v1h-1zm10 0h1v1h-1zm275 0h1v1h-1zm10 0h1v1h-1zm5 0h1v1h-1zm-305 1h1v1h-1zm6 0h1v1h-1zm10 0h1v1h-1zm278 0h1v1h-1zm5 0h1v1h-1zm5 0h1v1h-1zm-308 1h1v1h-1zm5 0h1v1h-1zm6 0h1v1h-1zm286 0h1v1h-1zm-291 1h1v1h-1zm312 0h1v1h-1zm-17 1h1v1h-1zm5 0h1v1h-1zm11 0h1v1h-1zm-320 1h1v1h-1zm5 0h1v1h-1zm11 0h1v1h-1zm287 0h1v1h-1zm5 0h1v1h-1zm11 0h1v1h-1zm-318 1h1v1h-1zm5 0h1v1h-1zm5 0h1v1h-1zm6 0h1v1h-1zm290 0h1v1h-1zm11 0h1v1h-1zm5 0h1v1h-1zm-321 1h1v1h-1zm5 0h1v1h-1zm5 0h1v1h-1zm294 0h1v1h-1zm11 0h1v1h-1zm5 0h1v1h-1zm-319 1h1v1h-1zm5 0h1v1h-1zm5 0h1v1h-1zm308 0h1v1h-1zm6 0h1v1h-1zm-313 1h1v1h-1zm306 0h1v1h-1zm6 0h1v1h-1zm-333 1h1v1h-1zm322 0h1v1h-1zm10 0h1v1h-1zm-331 1h1v1h-1zm11 0h1v1h-1zm5 0h1v1h-1zm304 0h1v1h-1zm10 0h1v1h-1zm6 0h1v1h-1zm-335 1h1v1h-1zm11 0h1v1h-1zm5 0h1v1h-1zm302 0h1v1h-1zm5 0h1v1h-1zm5 0h1v1h-1zm6 0h1v1h-1zm-339 1h1v1h-1zm6 0h1v1h-1zm11 0h1v1h-1zm305 0h1v1h-1zm5 0h1v1h-1zm11 0h1v1h-1zm-337 1h1v1h-1zm6 0h1v1h-1zm11 0h1v1h-1zm308 0h1v1h-1zm11 0h1v1h-1zm-335 1h1v1h-1zm6 0h1v1h-1zm61 0h1v1h-1zm256 0h1v1h-1zm6 0h1v1h-1zm5 0h1v1h-1zm-339 1h1v1h-1zm6 0h1v1h-1zm6 0h1v1h-1zm321 0h1v1h-1zm5 0h1v1h-1zm-337 1h1v1h-1zm6 0h1v1h-1zm6 0h1v1h-1zm60 0h1v1h-1zm259 0h1v1h-1zm5 0h1v1h-1zm-335 1h1v1h-1zm6 0h2v1h-2zm6 0h1v1h-1zm317 0h1v1h-1zm5 0h1v1h-1zm12 0h1v1h-1zm-350 1h1v1h-1zm5 0h1v1h-1zm7 0h1v1h-1zm5 0h1v1h-1zm59 0h1v1h-1zm206 0h1v1h-1zm55 0h1v1h-1zm12 0h1v1h-1zm-348 1h1v1h-1zm5 0h1v1h-1zm7 0h1v1h-1zm5 0h1v1h-1zm318 0h1v1h-1zm12 0h1v1h-1zm-346 1h1v1h-1zm5 0h2v1h-2zm7 0h1v1h-1zm64 0h1v1h-1zm203 0h1v1h-1zm54 0h1v1h-1zm11 0h2v1h-2zm7 0h1v1h-1zm-350 1h1v1h-1zm6 0h1v1h-1zm6 0h1v1h-1zm330 0h1v1h-1zm6 0h2v1h-2zm-347 1h1v1h-1zm6 0h1v1h-1zm69 0h1v1h-1zm201 0h1v1h-1zm64 0h1v1h-1zm6 0h1v1h-1zm-345 1h2v1h-2zm6 0h1v1h-1zm332 0h1v1h-1zm6 0h1v1h-1zm6 0h1v1h-1zm-348 1h1v1h-1zm5 0h1v1h-1zm68 0h1v1h-1zm198 0h1v1h-1zm64 0h1v1h-1zm6 0h1v1h-1zm6 0h1v1h-1zm-359 1h1v1h-1zm13 0h1v1h-1zm333 0h1v1h-1zm6 0h1v1h-1zm6 0h1v1h-1zm-357 1h1v1h-1zm13 0h1v1h-1zm72 0h1v1h-1zm196 0h1v1h-1zm68 0h2v1h-2zm6 0h2v1h-2zm8 0h1v1h-1zm-362 1h1v1h-1zm13 0h1v1h-1zm334 0h1v1h-1zm6 0h1v1h-1zm8 0h1v1h-1zm-366 1h1v1h-1zm6 0h1v1h-1zm85 0h1v1h-1zm193 0h1v1h-1zm67 0h1v1h-1zm6 0h1v1h-1zm7 0h2v1h-2zm-363 1h2v1h-2zm6 0h2v1h-2zm349 0h1v1h-1zm7 0h1v1h-1zm-360 1h1v1h-1zm6 0h1v1h-1zm83 0h1v1h-1zm190 0h1v1h-1zm73 0h1v1h-1zm7 0h1v1h-1zm-365 1h1v1h-1zm7 0h1v1h-1zm6 0h1v1h-1zm344 0h1v1h-1zm7 0h1v1h-1zm-363 1h1v1h-1zm7 0h1v1h-1zm6 0h1v1h-1zm82 0h1v1h-1zm188 0h1v1h-1zm78 0h2v1h-2zm13 0h1v1h-1zm-373 1h2v1h-2zm7 0h1v1h-1zm6 0h1v1h-1zm346 0h1v1h-1zm13 0h1v1h-1zm-370 1h1v1h-1zm6 0h2v1h-2zm87 0h1v1h-1zm186 0h1v1h-1zm77 0h1v1h-1zm12 0h2v1h-2zm-374 1h2v1h-2zm7 0h1v1h-1zm7 0h1v1h-1zm359 0h1v1h-1zm-371 1h1v1h-1zm6 0h1v1h-1zm7 0h1v1h-1zm86 0h1v1h-1zm182 0h1v1h-1zm89 0h1v1h-1zm7 0h1v1h-1zm-376 1h1v1h-1zm6 0h2v1h-2zm362 0h1v1h-1zm6 0h2v1h-2zm-373 1h2v1h-2zm7 0h1v1h-1zm91 0h1v1h-1zm180 0h1v1h-1zm87 0h2v1h-2zm7 0h1v1h-1zm-370 1h1v1h-1zm6 0h1v1h-1zm356 0h1v1h-1zm7 0h1v1h-1zm7 0h1v1h-1zm-375 1h1v1h-1zm96 0h1v1h-1zm178 0h1v1h-1zm86 0h1v1h-1zm7 0h1v1h-1zm6 0h2v1h-2zm-372 1h2v1h-2zm365 0h1v1h-1zm6 0h1v1h-1zm-384 1h2v1h-2zm15 0h1v1h-1zm94 0h1v1h-1zm175 0h1v1h-1zm92 0h2v1h-2zm7 0h1v1h-1zm-381 1h1v1h-1zm373 0h1v1h-1zm6 0h2v1h-2zm7 0h2v1h-2zm-385 1h1v1h-1zm108 0h1v1h-1zm172 0h1v1h-1zm91 0h1v1h-1zm6 0h1v1h-1zm7 0h1v1h-1zm-389 1h2v1h-2zm6 0h2v1h-2zm375 0h1v1h-1zm7 0h1v1h-1zm-386 1h1v1h-1zm6 0h1v1h-1zm106 0h1v1h-1zm170 0h1v1h-1zm95 0h2v1h-2zm7 0h2v1h-2zm-383 1h1v1h-1zm6 0h1v1h-1zm369 0h1v1h-1zm7 0h1v1h-1zm-388 1h1v1h-1zm7 0h2v1h-2zm6 0h2v1h-2zm105 0h1v1h-1zm167 0h1v1h-1zm102 0h1v1h-1zm-386 1h2v1h-2zm8 0h1v1h-1zm6 0h1v1h-1zm370 0h2v1h-2zm14 0h1v1h-1zm-396 1h1v1h-1zm7 0h1v1h-1zm109 0h1v1h-1zm165 0h1v1h-1zm100 0h1v1h-1zm13 0h2v1h-2zm-393 1h2v1h-2zm7 0h2v1h-2zm385 0h1v1h-1zm-398 1h2v1h-2zm8 0h2v1h-2zm7 0h1v1h-1zm108 0h1v1h-1zm162 0h1v1h-1zm112 0h1v1h-1zm-395 1h2v1h-2zm8 0h1v1h-1zm385 0h2v1h-2zm9 0h1v1h-1zm-400 1h1v1h-1zm7 0h2v1h-2zm113 0h1v1h-1zm159 0h1v1h-1zm111 0h1v1h-1zm8 0h2v1h-2zm-397 1h2v1h-2zm8 0h1v1h-1zm380 0h1v1h-1zm7 0h2v1h-2zm-393 1h2v1h-2zm118 0h1v1h-1zm157 0h1v1h-1zm109 0h2v1h-2zm7 0h2v1h-2zm-389 1h2v1h-2zm381 0h1v1h-1zm7 0h1v1h-1zm7 0h2v1h-2zm-393 1h1v1h-1zm115 0h1v1h-1zm155 0h1v1h-1zm114 0h2v1h-2zm7 0h2v1h-2zm-406 1h2v1h-2zm397 0h2v1h-2zm7 0h2v1h-2zm-402 1h2v1h-2zm130 0h1v1h-1zm151 0h1v1h-1zm113 0h1v1h-1zm7 0h1v1h-1zm9 0h1v1h-1zm-408 1h1v1h-1zm397 0h2v1h-2zm9 0h2v1h-2zm-413 1h1v1h-1zm8 0h2v1h-2zm128 0h1v1h-1zm149 0h1v1h-1zm117 0h2v1h-2zm9 0h2v1h-2zm-410 1h2v1h-2zm9 0h2v1h-2zm391 0h1v1h-1zm8 0h2v1h-2zm-406 1h2v1h-2zm9 0h2v1h-2zm125 0h1v1h-1zm147 0h1v1h-1zm124 0h1v1h-1zm-403 1h1v1h-1zm9 0h1v1h-1zm392 0h2v1h-2zm-408 1h1v1h-1zm8 0h2v1h-2zm132 0h1v1h-1zm144 0h1v1h-1zm122 0h2v1h-2zm-405 1h2v1h-2zm9 0h2v1h-2zm410 0h2v1h-2zm-417 1h2v1h-2zm9 0h2v1h-2zm130 0h1v1h-1zm141 0h1v1h-1zm135 0h2v1h-2zm-420 1h1v1h-1zm7 0h2v1h-2zm411 0h2v1h-2zm-417 1h2v1h-2zm8 0h2v1h-2zm136 0h1v1h-1zm139 0h1v1h-1zm132 0h2v1h-2zm-413 1h2v1h-2zm8 0h2v1h-2zm403 0h2v1h-2zm10 0h2v1h-2zm-419 1h2v1h-2zm8 0h2v1h-2zm69 0h1v1h-1zm64 0h1v1h-1zm136 0h1v1h-1zm130 0h2v1h-2zm10 0h2v1h-2zm-415 1h2v1h-2zm76 0h1v1h-1zm328 0h1v1h-1zm9 0h2v1h-2zm-411 1h2v1h-2zm75 0h2v1h-2zm63 0h1v1h-1zm134 0h1v1h-1zm137 0h2v1h-2zm-407 1h2v1h-2zm75 0h1v1h-1zm330 0h2v1h-2zm10 0h1v1h-1zm-339 1h1v1h-1zm62 0h1v1h-1zm265 0h2v1h-2zm10 0h2v1h-2zm-427 1h1v1h-1zm91 0h1v1h-1zm325 0h1v1h-1zm9 0h2v1h-2zm-424 1h2v1h-2zm91 0h2v1h-2zm61 0h1v1h-1zm128 0h1v1h-1zm142 0h2v1h-2zm7 0h2v1h-2zm-427 1h2v1h-2zm91 0h1v1h-1zm327 0h2v1h-2zm7 0h2v1h-2zm-430 1h1v1h-1zm7 0h2v1h-2zm90 0h1v1h-1zm59 0h1v1h-1zm126 0h1v1h-1zm139 0h2v1h-2zm7 0h2v1h-2zm-427 1h2v1h-2zm8 0h2v1h-2zm411 0h1v1h-1zm6 0h2v1h-2zm-423 1h2v1h-2zm8 0h2v1h-2zm146 0h1v1h-1zm124 0h1v1h-1zm143 0h2v1h-2zm-419 1h2v1h-2zm8 0h1v1h-1zm409 0h2v1h-2zm-424 1h1v1h-1zm9 0h2v1h-2zm152 0h1v1h-1zm120 0h1v1h-1zm142 0h1v1h-1zm-422 1h2v1h-2zm10 0h2v1h-2zm-8 1h2v1h-2zm10 0h2v1h-2zm149 0h1v1h-1zm118 0h1v1h-1zm158 0h2v1h-2zm-433 1h2v1h-2zm431 0h2v1h-2zm-438 1h2v1h-2zm9 0h2v1h-2zm156 0h1v1h-1zm116 0h1v1h-1zm154 0h3v1h-3zm-433 1h2v1h-2zm9 0h2v1h-2zm38 0h1v1h-1zm383 0h3v1h-3zm-428 1h3v1h-3zm9 0h2v1h-2zm38 0h1v1h-1zm115 0h1v1h-1zm113 0h1v1h-1zm114 0h1v1h-1zm37 0h2v1h-2zm11 0h2v1h-2zm-434 1h3v1h-3zm46 0h1v1h-1zm338 0h1v1h-1zm38 0h1v1h-1zm10 0h2v1h-2zm-429 1h2v1h-2zm45 0h1v1h-1zm113 0h1v1h-1zm110 0h1v1h-1zm111 0h1v1h-1zm47 0h3v1h-3zm-424 1h1v1h-1zm45 0h1v1h-1zm330 0h1v1h-1zm47 0h2v1h-2zm-375 1h1v1h-1zm110 0h1v1h-1zm108 0h1v1h-1zm108 0h1v1h-1zm47 0h2v1h-2zm11 0h2v1h-2zm-382 1h1v1h-1zm322 0h1v1h-1zm47 0h2v1h-2zm11 0h2v1h-2zm-444 1h2v1h-2zm66 0h1v1h-1zm107 0h1v1h-1zm105 0h1v1h-1zm106 0h1v1h-1zm57 0h3v1h-3zm-439 1h2v1h-2zm66 0h1v1h-1zm314 0h1v1h-1zm56 0h3v1h-3zm-434 1h3v1h-3zm66 0h1v1h-1zm104 0h1v1h-1zm103 0h1v1h-1zm103 0h1v1h-1zm56 0h2v1h-2zm11 0h2v1h-2zm-440 1h3v1h-3zm65 0h1v1h-1zm306 0h1v1h-1zm56 0h2v1h-2zm10 0h3v1h-3zm-445 1h2v1h-2zm11 0h2v1h-2zm64 0h1v1h-1zm101 0h1v1h-1zm101 0h1v1h-1zm100 0h1v1h-1zm65 0h3v1h-3zm-440 1h3v1h-3zm11 0h2v1h-2zm64 0h1v1h-1zm298 0h1v1h-1zm64 0h3v1h-3zm-434 1h4v1h-4zm74 0h1v1h-1zm99 0h1v1h-1zm98 0h1v1h-1zm97 0h1v1h-1zm64 0h2v1h-2zm-428 1h3v1h-3zm72 0h1v1h-1zm290 0h1v1h-1zm-372 1h2v1h-2zm13 0h2v1h-2zm167 0h1v1h-1zm95 0h1v1h-1zm95 0h1v1h-1zm-368 1h3v1h-3zm82 0h1v1h-1zm284 0h1v1h-1zm-363 1h3v1h-3zm81 0h1v1h-1zm95 0h1v1h-1zm93 0h1v1h-1zm92 0h1v1h-1zm86 0h2v1h-2zm-444 1h3v1h-3zm80 0h1v1h-1zm276 0h1v1h-1zm85 0h3v1h-3zm-451 1h2v1h-2zm13 0h2v1h-2zm79 0h1v1h-1zm92 0h1v1h-1zm91 0h1v1h-1zm89 0h1v1h-1zm83 0h4v1h-4zm-445 1h3v1h-3zm92 0h1v1h-1zm268 0h1v1h-1zm82 0h3v1h-3zm11 0h2v1h-2zm-450 1h4v1h-4zm91 0h1v1h-1zm90 0h1v1h-1zm87 0h1v1h-1zm87 0h1v1h-1zm82 0h2v1h-2zm10 0h3v1h-3zm-443 1h3v1h-3zm89 0h1v1h-1zm260 0h1v1h-1zm23 0h2v1h-2zm67 0h4v1h-4zm-436 1h2v1h-2zm88 0h1v1h-1zm87 0h1v1h-1zm85 0h1v1h-1zm107 0h2v1h-2zm66 0h3v1h-3zm-343 1h1v1h-1zm254 0h1v1h-1zm21 0h2v1h-2zm66 0h2v1h-2zm-339 1h1v1h-1zm84 0h1v1h-1zm83 0h1v1h-1zm83 0h1v1h-1zm21 0h2v1h-2zm80 0h3v1h-3zm-349 1h1v1h-1zm267 0h2v1h-2zm78 0h4v1h-4zm-453 1h3v1h-3zm110 0h1v1h-1zm81 0h1v1h-1zm80 0h1v1h-1zm81 0h1v1h-1zm21 0h2v1h-2zm76 0h4v1h-4zm-446 1h4v1h-4zm109 0h1v1h-1zm238 0h1v1h-1zm96 0h3v1h-3zm-439 1h4v1h-4zm107 0h1v1h-1zm79 0h1v1h-1zm77 0h1v1h-1zm78 0h1v1h-1zm111 0h2v1h-2zm-448 1h3v1h-3zm105 0h1v1h-1zm230 0h1v1h-1zm108 0h5v1h-5zm-455 1h3v1h-3zm119 0h1v1h-1zm76 0h1v1h-1zm75 0h1v1h-1zm75 0h1v1h-1zm106 0h4v1h-4zm-448 1h4v1h-4zm118 0h1v1h-1zm222 0h1v1h-1zm105 0h3v1h-3zm-441 1h4v1h-4zm116 0h1v1h-1zm73 0h1v1h-1zm72 0h1v1h-1zm73 0h1v1h-1zm-330 1h3v1h-3zm114 0h1v1h-1zm214 0h1v1h-1zm-340 1h3v1h-3zm128 0h1v1h-1zm70 0h1v1h-1zm70 0h1v1h-1zm70 0h1v1h-1zm-335 1h4v1h-4zm127 0h1v1h-1zm206 0h1v1h-1zm-329 1h4v1h-4zm125 0h1v1h-1zm68 0h1v1h-1zm67 0h1v1h-1zm67 0h1v1h-1zm129 0h2v1h-2zm-452 1h3v1h-3zm123 0h1v1h-1zm198 0h1v1h-1zm126 0h5v1h-5zm-459 1h3v1h-3zm137 0h1v1h-1zm65 0h1v1h-1zm64 0h1v1h-1zm65 0h1v1h-1zm124 0h4v1h-4zm-452 1h4v1h-4zm449 0h3v1h-3zm-445 1h4v1h-4zm196 0h1v1h-1zm62 0h1v1h-1zm198 0h4v1h-4zm-452 1h3v1h-3zm132 0h1v1h-1zm182 0h1v1h-1zm132 0h6v1h-6zm-312 1h1v1h-1zm59 0h1v1h-1zm60 0h1v1h-1zm59 0h1v1h-1zm130 0h4v1h-4zm-132 1h1v1h-1zm-174 1h1v1h-1zm59 0h1v1h-1zm56 0h1v1h-1zm57 0h1v1h-1zm145 0h4v1h-4zm-315 1h1v1h-1zm168 0h1v1h-1zm141 0h6v1h-6zm-459 1h2v1h-2zm152 0h1v1h-1zm56 0h1v1h-1zm54 0h1v1h-1zm54 0h1v1h-1zm139 0h4v1h-4zm-453 1h4v1h-4zm152 0h1v1h-1zm160 0h1v1h-1zm-308 1h5v1h-5zm150 0h1v1h-1zm53 0h1v1h-1zm52 0h1v1h-1zm51 0h1v1h-1zm154 0h3v1h-3zm-455 1h2v1h-2zm147 0h1v1h-1zm152 0h1v1h-1zm150 0h6v1h-6zm-461 1h4v1h-4zm161 0h1v1h-1zm50 0h1v1h-1zm49 0h1v1h-1zm49 0h1v1h-1zm148 0h4v1h-4zm-453 1h6v1h-6zm159 0h1v1h-1zm144 0h1v1h-1zm-297 1h4v1h-4zm155 0h1v1h-1zm48 0h1v1h-1zm46 0h1v1h-1zm46 0h1v1h-1zm-138 1h1v1h-1zm136 0h1v1h-1zm-304 1h4v1h-4zm170 0h1v1h-1zm45 0h1v1h-1zm44 0h1v1h-1zm43 0h1v1h-1zm-298 1h7v1h-7zm168 0h1v1h-1zm128 0h1v1h-1zm-289 1h3v1h-3zm163 0h1v1h-1zm42 0h1v1h-1zm41 0h1v1h-1zm141 0h4v1h-4zm71 0h4v1h-4zm-293 1h1v1h-1zm120 0h1v1h-1zm96 0h6v1h-6zm71 0h6v1h-6zm-463 1h3v1h-3zm178 0h1v1h-1zm39 0h1v1h-1zm39 0h1v1h-1zm133 0h3v1h-3zm70 0h4v1h-4zm-456 1h7v1h-7zm177 0h1v1h-1zm112 0h1v1h-1zm-282 1h4v1h-4zm172 0h1v1h-1zm37 0h1v1h-1zm36 0h1v1h-1zm35 0h1v1h-1zm180 0h4v1h-4zm-286 1h1v1h-1zm104 0h1v1h-1zm175 0h7v1h-7zm-277 1h1v1h-1zm34 0h1v1h-1zm33 0h1v1h-1zm33 0h1v1h-1zm174 0h3v1h-3zm-272 1h1v1h-1zm96 0h1v1h-1zm-94 1h1v1h-1zm31 0h1v1h-1zm31 0h1v1h-1zm30 0h1v1h-1zm188 0h4v1h-4zm-278 1h1v1h-1zm88 0h1v1h-1zm184 0h6v1h-6zm-270 1h1v1h-1zm28 0h1v1h-1zm29 0h1v1h-1zm209 0h4v1h-4zm-461 1h7v1h-7zm197 0h1v1h-1zm82 0h1v1h-1zm-272 1h7v1h-7zm192 0h1v1h-1zm26 0h1v1h-1zm25 0h1v1h-1zm27 0h1v1h-1zm-76 1h1v1h-1zm74 0h1v1h-1zm193 0h7v1h-7zm-265 1h1v1h-1zm23 0h1v1h-1zm23 0h1v1h-1zm24 0h1v1h-1zm188 0h7v1h-7zm-461 1h6v1h-6zm205 0h1v1h-1zm66 0h1v1h-1zm-265 1h8v1h-8zm201 0h1v1h-1zm20 0h1v1h-1zm21 0h1v1h-1zm21 0h1v1h-1zm-2 1h1v1h-1zm-58 1h1v1h-1zm19 0h1v1h-1zm18 0h1v1h-1zm19 0h1v1h-1zm-265 1h6v1h-6zm211 0h1v1h-1zm52 0h1v1h-1zm-257 1h8v1h-8zm207 0h1v1h-1zm17 0h1v1h-1zm15 0h1v1h-1zm16 0h1v1h-1zm-46 1h1v1h-1zm44 0h1v1h-1zm210 0h7v1h-7zm-252 1h1v1h-1zm14 0h1v1h-1zm13 0h1v1h-1zm13 0h1v1h-1zm205 0h7v1h-7zm-463 1h7v1h-7zm220 0h1v1h-1zm36 0h1v1h-1zm-249 1h7v1h-7zm215 0h1v1h-1zm11 0h1v1h-1zm10 0h1v1h-1zm11 0h1v1h-1zm-30 1h1v1h-1zm28 0h1v1h-1zm211 0h14v1h-14zm-237 1h1v1h-1zm8 0h1v1h-1zm8 0h1v1h-1zm8 0h1v1h-1zm-2 1h1v1h-1zm-18 1h1v1h-1zm6 0h1v1h-1zm5 0h1v1h-1zm5 0h1v1h-1zm-14 1h1v1h-1zm12 0h1v1h-1zm219 0h14v1h-14zm-229 1h1v1h-1zm3 0h1v1h-1zm5 0h1v1h-1zm-6 1h1v1h-1zm4 0h1v1h-1zm-240 1h14v1h-14zm238 0h1v1h-1zm225 0h14v1h-14zm-227 1h1v1h-1zm4 0h1v1h-1zm-6 1h1v1h-1zm3 0h1v1h-1zm5 0h1v1h-1zm-242 1h14v1h-14zm232 0h1v1h-1zm12 0h1v1h-1zm-14 1h1v1h-1zm5 0h1v1h-1zm5 0h1v1h-1zm6 0h1v1h-1zm-18 1h1v1h-1zm20 0h1v1h-1zm-22 1h1v1h-1zm8 0h1v1h-1zm8 0h1v1h-1zm8 0h1v1h-1zm-250 1h14v1h-14zm224 0h1v1h-1zm28 0h1v1h-1zm-30 1h1v1h-1zm11 0h1v1h-1zm10 0h1v1h-1zm11 0h1v1h-1zm209 0h7v1h-7zm-243 1h1v1h-1zm36 0h1v1h-1zm214 0h7v1h-7zm-463 1h7v1h-7zm211 0h1v1h-1zm13 0h1v1h-1zm13 0h1v1h-1zm14 0h1v1h-1zm-258 1h7v1h-7zm216 0h1v1h-1zm44 0h1v1h-1zm-46 1h1v1h-1zm16 0h1v1h-1zm15 0h1v1h-1zm17 0h1v1h-1zm200 0h7v1h-7zm-250 1h1v1h-1zm52 0h1v1h-1zm205 0h7v1h-7zm-259 1h1v1h-1zm19 0h1v1h-1zm18 0h1v1h-1zm19 0h1v1h-1zm-58 1h1v1h-1zm-2 1h1v1h-1zm21 0h1v1h-1zm21 0h1v1h-1zm20 0h1v1h-1zm194 0h7v1h-7zm-258 1h1v1h-1zm66 0h1v1h-1zm199 0h7v1h-7zm-462 1h8v1h-8zm195 0h1v1h-1zm24 0h1v1h-1zm23 0h1v1h-1zm23 0h1v1h-1zm-271 1h6v1h-6zm199 0h1v1h-1zm74 0h1v1h-1zm-76 1h1v1h-1zm27 0h1v1h-1zm25 0h1v1h-1zm26 0h1v1h-1zm186 0h7v1h-7zm-266 1h1v1h-1zm82 0h1v1h-1zm191 0h7v1h-7zm-458 1h4v1h-4zm212 0h1v1h-1zm29 0h1v1h-1zm28 0h1v1h-1zm-275 1h6v1h-6zm189 0h1v1h-1zm88 0h1v1h-1zm-281 1h4v1h-4zm191 0h1v1h-1zm30 0h1v1h-1zm31 0h1v1h-1zm31 0h1v1h-1zm-94 1h1v1h-1zm96 0h1v1h-1zm-274 1h3v1h-3zm176 0h1v1h-1zm33 0h1v1h-1zm33 0h1v1h-1zm34 0h1v1h-1zm-283 1h7v1h-7zm181 0h1v1h-1zm104 0h1v1h-1zm-289 1h4v1h-4zm183 0h1v1h-1zm35 0h1v1h-1zm36 0h1v1h-1zm37 0h1v1h-1zm169 0h4v1h-4zm-279 1h1v1h-1zm112 0h1v1h-1zm171 0h7v1h-7zm-453 1h4v1h-4zm168 0h1v1h-1zm38 0h1v1h-1zm39 0h1v1h-1zm39 0h1v1h-1zm176 0h3v1h-3zm-466 1h6v1h-6zm172 0h1v1h-1zm120 0h1v1h-1zm-296 1h4v1h-4zm174 0h1v1h-1zm41 0h1v1h-1zm41 0h1v1h-1zm42 0h1v1h-1zm161 0h3v1h-3zm-287 1h1v1h-1zm128 0h1v1h-1zm162 0h7v1h-7zm-292 1h1v1h-1zm43 0h1v1h-1zm44 0h1v1h-1zm45 0h1v1h-1zm167 0h4v1h-4zm-301 1h1v1h-1zm-2 1h1v1h-1zm46 0h1v1h-1zm46 0h1v1h-1zm48 0h1v1h-1zm152 0h4v1h-4zm-294 1h1v1h-1zm144 0h1v1h-1zm154 0h6v1h-6zm-451 1h4v1h-4zm200 0h1v1h-1zm49 0h1v1h-1zm50 0h1v1h-1zm158 0h4v1h-4zm-463 1h6v1h-6zm155 0h1v1h-1zm152 0h1v1h-1zm146 0h2v1h-2zm-456 1h3v1h-3zm156 0h1v1h-1zm51 0h1v1h-1zm52 0h1v1h-1zm53 0h1v1h-1zm146 0h4v1h-4zm-304 1h1v1h-1zm160 0h1v1h-1zm148 0h5v1h-5zm-452 1h4v1h-4zm142 0h1v1h-1zm54 0h1v1h-1zm54 0h1v1h-1zm56 0h1v1h-1zm151 0h2v1h-2zm-463 1h6v1h-6zm146 0h1v1h-1zm168 0h1v1h-1zm-318 1h4v1h-4zm148 0h1v1h-1zm57 0h1v1h-1zm56 0h1v1h-1zm-115 1h1v1h-1zm174 0h1v1h-1zm-309 1h4v1h-4zm133 0h1v1h-1zm59 0h1v1h-1zm60 0h1v1h-1zm59 0h1v1h-1zm-317 1h6v1h-6zm137 0h1v1h-1zm312 0h3v1h-3zm-453 1h4v1h-4zm139 0h1v1h-1zm62 0h1v1h-1zm62 0h1v1h-1zm62 0h1v1h-1zm131 0h4v1h-4zm-444 1h3v1h-3zm125 0h1v1h-1zm190 0h1v1h-1zm133 0h4v1h-4zm-453 1h5v1h-5zm128 0h1v1h-1zm65 0h1v1h-1zm64 0h1v1h-1zm65 0h1v1h-1zm135 0h3v1h-3zm-461 1h4v1h-4zm130 0h1v1h-1zm198 0h1v1h-1zm121 0h3v1h-3zm-451 1h2v1h-2zm130 0h1v1h-1zm67 0h1v1h-1zm67 0h1v1h-1zm68 0h1v1h-1zm122 0h4v1h-4zm-326 1h1v1h-1zm206 0h1v1h-1zm124 0h4v1h-4zm-332 1h1v1h-1zm70 0h1v1h-1zm70 0h1v1h-1zm70 0h1v1h-1zm126 0h3v1h-3zm-338 1h1v1h-1zm214 0h1v1h-1zm112 0h3v1h-3zm-328 1h1v1h-1zm73 0h1v1h-1zm72 0h1v1h-1zm73 0h1v1h-1zm113 0h4v1h-4zm-440 1h3v1h-3zm329 0h1v1h-1zm115 0h4v1h-4zm-449 1h5v1h-5zm110 0h1v1h-1zm75 0h1v1h-1zm151 0h1v1h-1zm117 0h3v1h-3zm-457 1h4v1h-4zm112 0h1v1h-1zm230 0h1v1h-1zm103 0h3v1h-3zm-447 1h2v1h-2zm112 0h1v1h-1zm78 0h1v1h-1zm77 0h1v1h-1zm79 0h1v1h-1zm104 0h4v1h-4zm-438 1h3v1h-3zm98 0h1v1h-1zm238 0h1v1h-1zm106 0h4v1h-4zm-446 1h4v1h-4zm100 0h1v1h-1zm81 0h1v1h-1zm80 0h1v1h-1zm81 0h1v1h-1zm108 0h3v1h-3zm-454 1h4v1h-4zm102 0h1v1h-1zm246 0h1v1h-1zm-351 1h3v1h-3zm103 0h1v1h-1zm83 0h1v1h-1zm83 0h1v1h-1zm84 0h1v1h-1zm-340 1h2v1h-2zm88 0h1v1h-1zm254 0h1v1h-1zm-345 1h3v1h-3zm175 0h1v1h-1zm85 0h1v1h-1zm87 0h1v1h-1zm87 0h2v1h-2zm-438 1h4v1h-4zm93 0h1v1h-1zm260 0h1v1h-1zm87 0h3v1h-3zm-443 1h3v1h-3zm11 0h2v1h-2zm83 0h1v1h-1zm87 0h1v1h-1zm87 0h1v1h-1zm90 0h1v1h-1zm88 0h4v1h-4zm-448 1h2v1h-2zm10 0h3v1h-3zm84 0h1v1h-1zm268 0h1v1h-1zm90 0h3v1h-3zm-446 1h4v1h-4zm86 0h1v1h-1zm89 0h1v1h-1zm91 0h1v1h-1zm92 0h1v1h-1zm78 0h2v1h-2zm13 0h1v1h-1zm-452 1h3v1h-3zm87 0h1v1h-1zm276 0h1v1h-1zm78 0h3v1h-3zm-443 1h2v1h-2zm87 0h1v1h-1zm92 0h1v1h-1zm93 0h1v1h-1zm95 0h1v1h-1zm79 0h3v1h-3zm-361 1h1v1h-1zm284 0h1v1h-1zm80 0h3v1h-3zm-366 1h1v1h-1zm95 0h1v1h-1zm95 0h1v1h-1zm166 0h2v1h-2zm13 0h2v1h-2zm-371 1h1v1h-1zm290 0h1v1h-1zm70 0h3v1h-3zm-427 1h2v1h-2zm65 0h1v1h-1zm97 0h1v1h-1zm98 0h1v1h-1zm99 0h1v1h-1zm71 0h4v1h-4zm-433 1h3v1h-3zm66 0h1v1h-1zm298 0h1v1h-1zm63 0h2v1h-2zm10 0h3v1h-3zm-440 1h3v1h-3zm67 0h1v1h-1zm100 0h1v1h-1zm101 0h1v1h-1zm101 0h1v1h-1zm63 0h2v1h-2zm11 0h2v1h-2zm-446 1h3v1h-3zm11 0h2v1h-2zm57 0h1v1h-1zm306 0h1v1h-1zm63 0h3v1h-3zm-439 1h2v1h-2zm11 0h2v1h-2zm57 0h1v1h-1zm103 0h1v1h-1zm103 0h1v1h-1zm104 0h1v1h-1zm64 0h3v1h-3zm-434 1h3v1h-3zm58 0h1v1h-1zm314 0h1v1h-1zm65 0h2v1h-2zm-440 1h3v1h-3zm59 0h1v1h-1zm106 0h1v1h-1zm105 0h1v1h-1zm107 0h1v1h-1zm65 0h2v1h-2zm-444 1h2v1h-2zm11 0h2v1h-2zm48 0h1v1h-1zm322 0h1v1h-1zm-383 1h2v1h-2zm11 0h2v1h-2zm48 0h1v1h-1zm108 0h1v1h-1zm108 0h1v1h-1zm110 0h1v1h-1zm-377 1h3v1h-3zm49 0h1v1h-1zm330 0h1v1h-1zm45 0h1v1h-1zm-426 1h2v1h-2zm49 0h1v1h-1zm111 0h1v1h-1zm110 0h1v1h-1zm113 0h1v1h-1zm44 0h2v1h-2zm-429 1h2v1h-2zm11 0h1v1h-1zm38 0h1v1h-1zm338 0h1v1h-1zm44 0h3v1h-3zm-433 1h2v1h-2zm11 0h2v1h-2zm38 0h1v1h-1zm114 0h1v1h-1zm113 0h1v1h-1zm115 0h1v1h-1zm37 0h1v1h-1zm8 0h3v1h-3zm-428 1h3v1h-3zm385 0h1v1h-1zm36 0h2v1h-2zm10 0h2v1h-2zm-434 1h3v1h-3zm272 0h1v1h-1zm154 0h2v1h-2zm10 0h1v1h-1zm-438 1h2v1h-2zm430 0h2v1h-2zm-431 1h1v1h-1zm158 0h1v1h-1zm118 0h1v1h-1zm148 0h1v1h-1zm9 0h2v1h-2zm-8 1h2v1h-2zm10 0h2v1h-2zm-421 1h2v1h-2zm143 0h1v1h-1zm120 0h1v1h-1zm150 0h2v1h-2zm10 0h1v1h-1zm-425 1h2v1h-2zm411 0h1v1h-1zm6 0h2v1h-2zm-419 1h2v1h-2zm145 0h1v1h-1zm124 0h1v1h-1zm145 0h2v1h-2zm7 0h2v1h-2zm-423 1h2v1h-2zm8 0h1v1h-1zm410 0h2v1h-2zm7 0h2v1h-2zm-427 1h2v1h-2zm8 0h2v1h-2zm140 0h1v1h-1zm126 0h1v1h-1zm148 0h2v1h-2zm7 0h2v1h-2zm-431 1h2v1h-2zm8 0h2v1h-2zm418 0h2v1h-2zm-427 1h1v1h-1zm7 0h2v1h-2zm143 0h1v1h-1zm128 0h1v1h-1zm151 0h2v1h-2zm-424 1h2v1h-2zm9 0h2v1h-2zm417 0h1v1h-1zm-428 1h2v1h-2zm9 0h2v1h-2zm136 0h1v1h-1zm131 0h1v1h-1zm-277 1h1v1h-1zm8 0h2v1h-2zm406 0h1v1h-1zm-408 1h2v1h-2zm139 0h1v1h-1zm134 0h1v1h-1zm136 0h2v1h-2zm-411 1h2v1h-2zm10 0h2v1h-2zm403 0h2v1h-2zm-415 1h2v1h-2zm10 0h2v1h-2zm132 0h1v1h-1zm136 0h1v1h-1zm132 0h1v1h-1zm7 0h2v1h-2zm-409 1h2v1h-2zm403 0h2v1h-2zm8 0h2v1h-2zm-413 1h2v1h-2zm134 0h1v1h-1zm139 0h1v1h-1zm134 0h2v1h-2zm8 0h2v1h-2zm-417 1h2v1h-2zm411 0h2v1h-2zm8 0h1v1h-1zm-421 1h2v1h-2zm137 0h1v1h-1zm141 0h1v1h-1zm129 0h2v1h-2zm8 0h2v1h-2zm-6 1h2v1h-2zm8 0h2v1h-2zm-404 1h2v1h-2zm123 0h1v1h-1zm144 0h1v1h-1zm131 0h1v1h-1zm8 0h2v1h-2zm-408 1h2v1h-2zm393 0h1v1h-1zm8 0h2v1h-2zm-403 1h2v1h-2zm125 0h1v1h-1zm147 0h1v1h-1zm124 0h2v1h-2zm9 0h2v1h-2zm-406 1h1v1h-1zm9 0h1v1h-1zm390 0h2v1h-2zm9 0h2v1h-2zm-410 1h2v1h-2zm9 0h2v1h-2zm118 0h1v1h-1zm149 0h1v1h-1zm127 0h1v1h-1zm9 0h1v1h-1zm-414 1h2v1h-2zm9 0h2v1h-2zm397 0h2v1h-2zm-407 1h1v1h-1zm8 0h2v1h-2zm8 0h1v1h-1zm113 0h1v1h-1zm151 0h1v1h-1zm129 0h2v1h-2zm-402 1h1v1h-1zm7 0h2v1h-2zm397 0h2v1h-2zm-406 1h2v1h-2zm7 0h2v1h-2zm115 0h1v1h-1zm155 0h1v1h-1zm115 0h1v1h-1zm-394 1h2v1h-2zm7 0h2v1h-2zm8 0h1v1h-1zm380 0h2v1h-2zm-389 1h1v1h-1zm7 0h2v1h-2zm110 0h1v1h-1zm157 0h1v1h-1zm117 0h2v1h-2zm-393 1h2v1h-2zm8 0h1v1h-1zm380 0h1v1h-1zm7 0h1v1h-1zm-397 1h2v1h-2zm9 0h1v1h-1zm111 0h1v1h-1zm159 0h1v1h-1zm112 0h2v1h-2zm7 0h2v1h-2zm-399 1h1v1h-1zm8 0h2v1h-2zm386 0h1v1h-1zm7 0h2v1h-2zm-394 1h1v1h-1zm112 0h1v1h-1zm162 0h1v1h-1zm108 0h1v1h-1zm6 0h2v1h-2zm8 0h2v1h-2zm-397 1h1v1h-1zm384 0h2v1h-2zm7 0h2v1h-2zm-393 1h2v1h-2zm14 0h1v1h-1zm100 0h1v1h-1zm165 0h1v1h-1zm109 0h1v1h-1zm7 0h1v1h-1zm-396 1h1v1h-1zm13 0h2v1h-2zm371 0h1v1h-1zm6 0h1v1h-1zm7 0h2v1h-2zm-385 1h1v1h-1zm102 0h1v1h-1zm167 0h1v1h-1zm104 0h2v1h-2zm6 0h2v1h-2zm8 0h1v1h-1zm-388 1h1v1h-1zm7 0h1v1h-1zm369 0h1v1h-1zm6 0h1v1h-1zm-384 1h2v1h-2zm7 0h2v1h-2zm96 0h1v1h-1zm170 0h1v1h-1zm106 0h1v1h-1zm6 0h1v1h-1zm-386 1h1v1h-1zm7 0h1v1h-1zm374 0h2v1h-2zm6 0h2v1h-2zm-388 1h1v1h-1zm7 0h1v1h-1zm6 0h1v1h-1zm91 0h1v1h-1zm172 0h1v1h-1zm108 0h1v1h-1zm-386 1h2v1h-2zm7 0h2v1h-2zm7 0h1v1h-1zm373 0h1v1h-1zm-381 1h1v1h-1zm6 0h2v1h-2zm93 0h1v1h-1zm175 0h1v1h-1zm94 0h1v1h-1zm14 0h2v1h-2zm-383 1h1v1h-1zm6 0h1v1h-1zm364 0h2v1h-2zm-372 1h2v1h-2zm7 0h1v1h-1zm7 0h1v1h-1zm86 0h1v1h-1zm274 0h1v1h-1zm-375 1h1v1h-1zm7 0h1v1h-1zm7 0h1v1h-1zm356 0h1v1h-1zm6 0h1v1h-1zm-370 1h1v1h-1zm6 0h2v1h-2zm88 0h1v1h-1zm271 0h1v1h-1zm6 0h2v1h-2zm-373 1h2v1h-2zm7 0h1v1h-1zm361 0h2v1h-2zm7 0h1v1h-1zm-376 1h1v1h-1zm7 0h1v1h-1zm89 0h1v1h-1zm182 0h1v1h-1zm86 0h1v1h-1zm7 0h1v1h-1zm6 0h1v1h-1zm-371 1h1v1h-1zm359 0h1v1h-1zm7 0h1v1h-1zm6 0h2v1h-2zm-374 1h2v1h-2zm13 0h1v1h-1zm77 0h1v1h-1zm186 0h1v1h-1zm86 0h2v1h-2zm7 0h1v1h-1zm-370 1h1v1h-1zm13 0h1v1h-1zm346 0h1v1h-1zm6 0h1v1h-1zm6 0h2v1h-2zm-372 1h1v1h-1zm12 0h2v1h-2zm79 0h1v1h-1zm188 0h1v1h-1zm82 0h1v1h-1zm6 0h1v1h-1zm7 0h1v1h-1zm-363 1h1v1h-1zm7 0h1v1h-1zm344 0h1v1h-1zm6 0h1v1h-1zm7 0h1v1h-1zm-365 1h1v1h-1zm7 0h1v1h-1zm73 0h1v1h-1zm190 0h1v1h-1zm83 0h1v1h-1zm6 0h1v1h-1zm-360 1h1v1h-1zm7 0h1v1h-1zm348 0h1v1h-1zm6 0h2v1h-2zm-363 1h2v1h-2zm8 0h1v1h-1zm6 0h1v1h-1zm67 0h1v1h-1zm193 0h1v1h-1zm84 0h2v1h-2zm7 0h1v1h-1zm-366 1h1v1h-1zm7 0h2v1h-2zm7 0h1v1h-1zm334 0h1v1h-1zm13 0h1v1h-1zm-362 1h1v1h-1zm7 0h1v1h-1zm6 0h2v1h-2zm69 0h1v1h-1zm196 0h1v1h-1zm72 0h1v1h-1zm13 0h1v1h-1zm-357 1h1v1h-1zm6 0h1v1h-1zm6 0h1v1h-1zm333 0h1v1h-1zm13 0h1v1h-1zm-359 1h1v1h-1zm6 0h1v1h-1zm6 0h1v1h-1zm64 0h1v1h-1zm198 0h1v1h-1zm68 0h1v1h-1zm5 0h1v1h-1zm-348 1h1v1h-1zm6 0h1v1h-1zm6 0h1v1h-1zm332 0h1v1h-1zm5 0h1v1h-1zm-344 1h1v1h-1zm6 0h1v1h-1zm64 0h1v1h-1zm270 0h1v1h-1zm5 0h2v1h-2zm-347 1h2v1h-2zm6 0h2v1h-2zm331 0h1v1h-1zm6 0h1v1h-1zm6 0h1v1h-1zm-350 1h1v1h-1zm6 0h1v1h-1zm12 0h1v1h-1zm54 0h1v1h-1zm203 0h1v1h-1zm64 0h1v1h-1zm6 0h1v1h-1zm6 0h1v1h-1zm-346 1h1v1h-1zm12 0h1v1h-1zm318 0h1v1h-1zm5 0h1v1h-1zm6 0h2v1h-2zm6 0h1v1h-1zm-348 1h1v1h-1zm12 0h1v1h-1zm55 0h1v1h-1zm206 0h1v1h-1zm59 0h1v1h-1zm5 0h1v1h-1zm7 0h1v1h-1zm5 0h1v1h-1zm-350 1h1v1h-1zm12 0h1v1h-1zm5 0h1v1h-1zm317 0h1v1h-1zm5 0h1v1h-1zm7 0h1v1h-1zm-335 1h1v1h-1zm5 0h1v1h-1zm259 0h1v1h-1zm60 0h1v1h-1zm5 0h2v1h-2zm7 0h1v1h-1zm-337 1h1v1h-1zm5 0h1v1h-1zm321 0h1v1h-1zm6 0h1v1h-1zm-333 1h1v1h-1zm5 0h1v1h-1zm6 0h1v1h-1zm256 0h1v1h-1zm61 0h1v1h-1zm6 0h1v1h-1zm-335 1h1v1h-1zm5 0h1v1h-1zm6 0h1v1h-1zm308 0h1v1h-1zm11 0h1v1h-1zm6 0h1v1h-1zm-337 1h1v1h-1zm11 0h1v1h-1zm5 0h1v1h-1zm305 0h1v1h-1zm11 0h1v1h-1zm6 0h1v1h-1zm-339 1h1v1h-1zm11 0h1v1h-1zm5 0h1v1h-1zm302 0h1v1h-1zm5 0h1v1h-1zm11 0h1v1h-1zm-335 1h1v1h-1zm6 0h1v1h-1zm5 0h1v1h-1zm5 0h1v1h-1zm304 0h1v1h-1zm5 0h1v1h-1zm11 0h1v1h-1zm-331 1h1v1h-1zm10 0h1v1h-1zm311 0h1v1h-1zm11 0h1v1h-1zm-333 1h1v1h-1zm10 0h1v1h-1zm302 0h1v1h-1zm-313 1h1v1h-1zm6 0h1v1h-1zm308 0h1v1h-1zm5 0h1v1h-1zm-314 1h1v1h-1zm16 0h1v1h-1zm294 0h1v1h-1zm5 0h1v1h-1zm5 0h1v1h-1zm-321 1h1v1h-1zm5 0h1v1h-1zm11 0h1v1h-1zm290 0h1v1h-1zm6 0h1v1h-1zm5 0h1v1h-1zm5 0h1v1h-1zm-323 1h1v1h-1zm5 0h1v1h-1zm11 0h1v1h-1zm5 0h1v1h-1zm287 0h1v1h-1zm6 0h1v1h-1zm5 0h1v1h-1zm5 0h1v1h-1zm-320 1h1v1h-1zm11 0h1v1h-1zm5 0h1v1h-1zm-17 1h1v1h-1zm11 0h1v1h-1zm10 1h1v1h-1zm286 0h1v1h-1zm6 0h1v1h-1zm5 0h1v1h-1zm-303 1h1v1h-1zm5 0h1v1h-1zm278 0h1v1h-1zm10 0h1v1h-1zm6 0h1v1h-1zm-305 1h1v1h-1zm5 0h1v1h-1zm10 0h1v1h-1zm275 0h1v1h-1zm10 0h1v1h-1zm6 0h1v1h-1zm-307 1h1v1h-1zm5 0h1v1h-1zm281 0h1v1h-1zm-287 1h1v1h-1zm5 0h1v1h-1zm6 0h1v1h-1zm277 0h1v1h-1zm-278 1h1v1h-1zm5 0h1v1h-1zm269 0h1v1h-1zm10 0h1v1h-1zm10 0h1v1h-1zm-295 1h1v1h-1zm5 0h1v1h-1zm281 0h1v1h-1zm10 0h1v1h-1zm-302 1h1v1h-1zm21 0h1v1h-1zm266 0h1v1h-1zm6 0h1v1h-1zm-15 1h1v1h-1zm5 0h1v1h-1zm5 0h1v1h-1zm-284 1h1v1h-1zm5 0h1v1h-1zm15 0h1v1h-1zm260 0h1v1h-1zm5 0h1v1h-1zm-286 1h1v1h-1zm5 0h1v1h-1zm11 0h1v1h-1zm271 0h1v1h-1zm5 0h1v1h-1zm-277 1h1v1h-1zm9 0h1v1h-1zm253 0h1v1h-1zm16 0h1v1h-1zm-274 1h1v1h-1zm249 0h1v1h-1zm10 0h1v1h-1zm5 0h1v1h-1zm-265 1h1v1h-1zm9 0h1v1h-1zm257 0h1v1h-1zm5 0h1v1h-1zm-276 1h1v1h-1zm9 0h1v1h-1zm243 0h1v1h-1zm-253 1h1v1h-1zm258 0h1v1h-1zm10 0h1v1h-1zm-264 1h1v1h-1zm246 0h1v1h-1zm9 0h1v1h-1zm10 0h1v1h-1zm5 0h1v1h-1zm-271 1h1v1h-1zm19 0h1v1h-1zm-10 1h1v1h-1zm-5 1h1v1h-1zm249 0h1v1h-1zm5 0h1v1h-1zm1 1h1v1h-1zm-233 1h1v1h-1zm224 0h1v1h-1zm-248 1h1v1h-1zm14 0h1v1h-1zm221 0h1v1h-1zm-208 1h1v1h-1zm217 0h1v1h-1zm15 0h1v1h-1zm-241 1h1v1h-1zm213 0h1v1h-1zm-4 2h1v1h-1zm28 0h1v1h-1zm-220 1h1v1h-1zm189 0h1v1h-1zm-186 1h1v1h-1zm4 2h1v1h-1zm206 0h1v1h-1zm-234 1h1v1h-1zm203 0h1v1h-1zm-172 1h1v1h-1zm196 1h1v1h-1zm-4 2h1v1h-1zm-4 2h1v1h-1zm-204 1h1v1h-1zm193 4h1v1h-1z"/>
<path fill="#ff0000" d="M0 0m32 267h1v5h-1zm2 6h1v3h-1zm8 0h1v3h-1zm2 -6h1v5h-1zm51 79h1v6h-1zm16 -53h1v6h-1zm0 7h1v8h-1zm4 -7h1v6h-1zm0 7h1v8h-1zm3 -2h1v3h-1zm3 5h1v4h-1zm3 -5h1v9h-1zm28 -111h1v5h-1zm10 0h1v5h-1zm6 -7h1v5h-1zm41 176h1v2h-1zm2 15h1v2h-1zm32 20h1v2h-1zm69 -226h1v2h-1zm9 309h1v5h-1zm1 -2h1v2h-1zm0 7h1v2h-1zm2 -40h1v2h-1zm2 -3h1v2h-1zm3 -4h1v2h-1zm2 -3h1v2h-1zm1 -243h1v2h-1zm1 240h1v2h-1zm2 -3h1v2h-1zm1 49h1v2h-1zm0 7h1v2h-1zm1 -5h1v5h-1zm1 -55h1v2h-1zm2 -3h1v2h-1zm2 -3h1v2h-1zm2 -3h1v2h-1zm3 -4h1v2h-1zm2 -3h1v2h-1zm2 -3h1v2h-1zm1 -193h1v2h-1zm1 190h1v2h-1zm3 -4h1v2h-1zm2 -3h1v2h-1zm2 -294h1v3h-1zm0 291h1v2h-1zm2 -3h1v2h-1zm2 -288h1v3h-1zm0 4h1v3h-1zm1 280h1v2h-1zm2 -3h1v2h-1zm2 -3h1v2h-1zm2 -3h1v2h-1zm2 -142h1v2h-1zm7 129h1v2h-1zm3 -4h1v2h-1zm2 -3h1v2h-1zm2 -3h1v2h-1zm0 107h1v2h-1zm1 -2h1v2h-1zm1 -108h1v2h-1zm0 106h1v2h-1zm1 -3h1v3h-1zm2 -107h1v2h-1zm1 -91h1v2h-1zm1 88h1v2h-1zm2 -3h1v2h-1zm0 111h1v12h-1zm0 13h1v2h-1zm2 -127h1v2h-1zm3 -4h1v2h-1zm2 -3h1v2h-1zm4 -6h1v2h-1zm3 -4h1v2h-1zm2 -3h1v2h-1zm1 -41h1v2h-1zm0 262h1v3h-1zm1 -224h1v2h-1zm2 -3h1v2h-1zm3 -4h1v2h-1zm2 -3h1v2h-1zm2 -3h1v2h-1zm2 -3h1v2h-1zm3 -4h1v2h-1zm2 -3h1v2h-1zm2 -3h1v2h-1zm1 9h1v2h-1zm1 -12h1v2h-1zm3 -4h1v2h-1zm2 -3h1v2h-1zm7 -192h1v3h-1zm5 357h1v3h-1zm1 -357h1v3h-1zm1 3h1v4h-1zm1 4h1v8h-1zm1 -4h1v4h-1zm0 358h1v3h-1zm1 -361h1v3h-1zm6 0h1v3h-1zm144 198h1v5h-1zm0 12h1v2h-1zm2 -12h1v2h-1zm2 0h1v5h-1zm0 8h1v6h-1zm2 -139h1v2h-1zm0 40h1v2h-1zm0 50h1v2h-1zm0 42h1v3h-1zm0 9h1v4h-1zm2 -180h1v4h-1zm2 42h1v2h-1zm0 37h1v2h-1zm0 3h1v2h-1zm0 50h1v2h-1zm0 39h1v3h-1zm0 9h1v4h-1zm2 -50h1v4h-1zm0 42h1v3h-1zm0 9h1v3h-1zm0 4h1v2h-1zm2 -147h1v2h-1zm0 3h1v4h-1zm0 37h1v2h-1zm0 3h1v4h-1zm2 49h1v4h-1zm0 51h1v3h-1zm2 -143h1v2h-1zm0 3h1v4h-1zm0 37h1v2h-1zm0 3h1v4h-1zm0 50h1v4h-1zm2 -133h1v2h-1zm0 3h1v4h-1zm0 179h1v5h-1zm2 -139h1v4h-1zm0 40h1v4h-1zm0 50h1v4h-1zm8 -133h1v2h-1zm0 3h1v4h-1zm0 37h1v2h-1zm0 3h1v4h-1zm0 37h1v2h-1zm0 3h1v4h-1zm4 -80h1v4h-1zm0 40h1v4h-1zm0 40h1v4h-1zm2 -80h1v3h-1zm0 40h1v3h-1zm0 40h1v3h-1zm4 -80h1v3h-1zm0 40h1v3h-1zm0 40h1v3h-1zm0 98h1v2h-1zm0 40h1v2h-1zm2 -219h1v4h-1zm0 40h1v4h-1zm0 40h1v4h-1zm0 49h1v3h-1zm0 49h1v3h-1zm0 45h1v2h-1zm3 -45h1v3h-1zm0 4h1v3h-1zm1 -182h1v4h-1zm0 40h1v4h-1zm0 40h1v4h-1zm0 51h1v3h-1zm2 -2h1v2h-1zm0 50h1v2h-1zm0 40h1v2h-1zm4 -87h1v2h-1zm0 50h1v2h-1zm0 40h1v2h-1zm2 -91h1v3h-1zm0 50h1v3h-1zm0 40h1v3h-1zm4 -90h1v3h-1zm0 50h1v3h-1zm0 40h1v3h-1zm2 -90h1v3h-1zm0 50h1v3h-1zm0 40h1v3h-1zm4 -90h1v3h-1zm0 50h1v3h-1zm0 40h1v3h-1zm2 -92h1v2h-1zm0 89h1v3h-1zm3 0h1v3h-1zm0 4h1v3h-1zm1 -90h1v2h-1zm0 47h1v2h-1zm2 -46h1v2h-1zm0 86h1v2h-1zm2 -139h1v4h-1zm2 -81h1v2h-1zm0 40h1v2h-1zm0 140h1v2h-1zm0 43h1v2h-1zm2 -139h1v2h-1zm2 -83h1v4h-1zm2 39h1v2h-1zm0 3h1v2h-1zm2 -44h1v6h-1zm0 41h1v2h-1zm0 41h1v2h-1zm0 3h1v2h-1zm4 -41h1v2h-1zm0 38h1v2h-1zm0 3h1v2h-1zm2 -42h1v3h-1zm0 41h1v3h-1zm4 -41h1v3h-1zm2 -40h1v3h-1zm0 40h1v3h-1zm2 39h1v5h-1zm2 -79h1v3h-1zm0 40h1v3h-1zm4 -41h1v4h-1zm0 40h1v4h-1zm2 39h1v2h-1zm0 3h1v2h-1zm6 -83h1v2h-1zm0 3h1v2h-1zm0 37h1v2h-1zm0 3h1v2h-1zm0 37h1v2h-1zm26 -1h1v2h-1zm0 52h1v3h-1zm0 42h1v2h-1zm1 -173h1v3h-1zm1 3h1v2h-1zm0 179h1v2h-1zm1 -103h1v3h-1zm0 101h1v2h-1zm1 -98h1v5h-1zm1 -3h1v3h-1zm0 94h1v2h-1zm1 -170h1v2h-1zm0 176h1v6h-1zm1 -179h1v3h-1zm1 79h1v2h-1zm0 52h1v3h-1zm-304 -160h3v1h-3zm10 0h3v1h-3zm-11 1h1v1h-1zm4 0h1v1h-1zm6 0h1v1h-1zm4 0h1v1h-1zm-14 4h1v1h-1zm14 0h1v1h-1zm-13 1h1v1h-1zm12 0h1v1h-1zm-99 10h3v1h-3zm0 4h4v1h-4zm-1 3h1v1h-1zm1 1h3v1h-3zm386 3h3v1h-3zm-133 1h1v1h-1zm65 0h3v1h-3zm7 0h1v1h-1zm24 0h1v1h-1zm5 0h3v1h-3zm31 0h1v1h-1zm4 0h1v1h-1zm-137 1h2v1h-2zm65 0h1v1h-1zm7 0h2v1h-2zm24 0h2v1h-2zm5 0h1v1h-1zm-95 1h4v1h-4zm5 0h5v1h-5zm12 0h4v1h-4zm7 0h3v1h-3zm12 0h4v1h-4zm6 0h3v1h-3zm7 0h1v1h-1zm29 0h3v1h-3zm6 0h3v1h-3zm-85 1h1v1h-1zm36 0h1v1h-1zm6 0h1v1h-1zm4 0h1v1h-1zm17 0h1v1h-1zm15 0h1v1h-1zm4 0h1v1h-1zm16 0h2v1h-2zm-97 1h3v1h-3zm36 0h3v1h-3zm5 0h5v1h-5zm8 0h1v1h-1zm12 0h1v1h-1zm16 0h5v1h-5zm-74 1h1v1h-1zm36 0h1v1h-1zm2 0h1v1h-1zm19 0h1v1h-1zm17 0h1v1h-1zm18 0h1v1h-1zm30 0h1v1h-1zm-131 1h3v1h-3zm5 0h4v1h-4zm25 0h3v1h-3zm6 0h4v1h-4zm5 0h4v1h-4zm7 0h4v1h-4zm17 0h5v1h-5zm7 0h3v1h-3zm5 0h5v1h-5zm7 0h4v1h-4zm6 0h3v1h-3zm6 0h3v1h-3zm6 0h3v1h-3zm30 0h1v1h-1zm6 0h1v1h-1zm1 1h1v1h-1zm-2 32h3v1h-3zm-138 1h5v1h-5zm67 0h3v1h-3zm6 0h3v1h-3zm6 0h3v1h-3zm19 0h1v1h-1zm5 0h3v1h-3zm36 0h2v1h-2zm-73 1h1v1h-1zm6 0h1v1h-1zm10 0h1v1h-1zm15 0h2v1h-2zm5 0h1v1h-1zm36 0h1v1h-1zm2 0h1v1h-1zm-134 1h5v1h-5zm6 0h4v1h-4zm12 0h4v1h-4zm7 0h3v1h-3zm12 0h4v1h-4zm6 0h3v1h-3zm7 0h1v1h-1zm29 0h4v1h-4zm6 0h4v1h-4zm42 0h1v1h-1zm4 0h1v1h-1zm-137 1h4v1h-4zm42 0h1v1h-1zm6 0h1v1h-1zm4 0h1v1h-1zm17 0h1v1h-1zm5 0h2v1h-2zm5 0h3v1h-3zm25 0h2v1h-2zm30 0h1v1h-1zm2 0h1v1h-1zm-93 1h3v1h-3zm5 0h5v1h-5zm8 0h1v1h-1zm12 0h1v1h-1zm67 0h1v1h-1zm-135 1h1v1h-1zm46 0h1v1h-1zm2 0h1v1h-1zm19 0h1v1h-1zm5 0h1v1h-1zm6 0h1v1h-1zm24 0h1v1h-1zm32 0h1v1h-1zm2 0h1v1h-1zm-135 1h3v1h-3zm30 0h3v1h-3zm6 0h4v1h-4zm5 0h4v1h-4zm7 0h4v1h-4zm17 0h5v1h-5zm7 0h3v1h-3zm6 0h3v1h-3zm6 0h4v1h-4zm6 0h4v1h-4zm6 0h3v1h-3zm6 0h3v1h-3zm30 0h1v1h-1zm4 0h1v1h-1zm-43 1h1v1h-1zm38 0h1v1h-1zm-442 1h1v1h-1zm400 0h4v1h-4zm-401 1h1v1h-1zm2 0h1v1h-1zm-3 1h1v1h-1zm4 0h1v1h-1zm-5 1h1v1h-1zm6 0h1v1h-1zm6 0h1v1h-1zm-13 1h1v1h-1zm8 0h1v1h-1zm-9 1h1v1h-1zm10 0h1v1h-1zm6 0h1v1h-1zm-17 1h1v1h-1zm12 0h1v1h-1zm-13 1h1v1h-1zm8 0h1v1h-1zm11 0h1v1h-1zm-20 1h1v1h-1zm16 0h1v1h-1zm-17 1h1v1h-1zm7 0h1v1h-1zm11 0h1v1h-1zm5 0h1v1h-1zm-24 1h1v1h-1zm-1 1h1v1h-1zm27 0h1v1h-1zm-28 1h1v1h-1zm7 0h1v1h-1zm16 0h1v1h-1zm-24 1h1v1h-1zm25 0h1v1h-1zm6 0h1v1h-1zm-32 1h1v1h-1zm27 0h1v1h-1zm-28 1h1v1h-1zm7 0h1v1h-1zm22 0h1v1h-1zm6 0h1v1h-1zm-36 1h1v1h-1zm31 0h1v1h-1zm-32 1h1v1h-1zm33 0h1v1h-1zm6 0h1v1h-1zm-40 1h1v1h-1zm7 0h1v1h-1zm28 0h1v1h-1zm-36 1h1v1h-1zm37 0h1v1h-1zm5 0h1v1h-1zm-43 1h1v1h-1zm6 0h1v1h-1zm33 0h1v1h-1zm-40 1h1v1h-1zm41 0h1v1h-1zm5 0h1v1h-1zm-47 1h1v1h-1zm43 0h1v1h-1zm-161 1h7v1h-7zm117 0h1v1h-1zm6 0h1v1h-1zm39 0h1v1h-1zm5 0h1v1h-1zm-162 1h2v1h-2zm110 0h2v1h-2zm48 0h1v1h-1zm-159 1h1v1h-1zm110 0h1v1h-1zm50 0h1v1h-1zm5 0h1v1h-1zm-166 1h1v1h-1zm110 0h1v1h-1zm7 0h1v1h-1zm45 0h1v1h-1zm-163 1h1v1h-1zm110 0h1v1h-1zm54 0h1v1h-1zm5 0h1v1h-1zm-170 1h1v1h-1zm110 0h1v1h-1zm56 0h1v1h-1zm-174 1h5v1h-5zm7 0h1v1h-1zm110 0h1v1h-1zm7 0h1v1h-1zm51 0h1v1h-1zm5 0h1v1h-1zm-181 1h1v1h-1zm6 0h2v1h-2zm111 0h1v1h-1zm60 0h1v1h-1zm-178 1h1v1h-1zm8 0h1v1h-1zm109 0h1v1h-1zm66 0h1v1h-1zm409 0h2v1h-2zm5 0h2v1h-2zm-481 1h1v1h-1zm7 0h1v1h-1zm337 0h3v1h-3zm67 0h1v1h-1zm4 0h5v1h-5zm8 0h1v1h-1zm12 0h1v1h-1zm5 0h3v1h-3zm6 0h3v1h-3zm-447 1h1v1h-1zm65 0h1v1h-1zm5 0h1v1h-1zm341 0h2v1h-2zm9 0h1v1h-1zm3 0h1v1h-1zm2 0h1v1h-1zm15 0h1v1h-1zm6 0h1v1h-1zm-447 1h1v1h-1zm6 0h1v1h-1zm61 0h1v1h-1zm284 0h5v1h-5zm6 0h4v1h-4zm12 0h4v1h-4zm7 0h3v1h-3zm12 0h4v1h-4zm6 0h3v1h-3zm7 0h1v1h-1zm19 0h1v1h-1zm9 0h1v1h-1zm2 0h2v1h-2zm47 0h1v1h-1zm6 0h1v1h-1zm-485 1h1v1h-1zm69 0h1v1h-1zm5 0h1v1h-1zm273 0h4v1h-4zm41 0h1v1h-1zm6 0h1v1h-1zm4 0h1v1h-1zm22 0h1v1h-1zm10 0h2v1h-2zm4 0h1v1h-1zm10 0h2v1h-2zm7 0h1v1h-1zm-452 1h1v1h-1zm71 0h1v1h-1zm319 0h3v1h-3zm5 0h5v1h-5zm8 0h1v1h-1zm17 0h1v1h-1zm5 0h5v1h-5zm26 0h1v1h-1zm-563 1h1v1h-1zm8 0h1v1h-1zm103 0h1v1h-1zm6 0h1v1h-1zm67 0h1v1h-1zm5 0h1v1h-1zm270 0h1v1h-1zm46 0h1v1h-1zm2 0h1v1h-1zm48 0h1v1h-1zm7 0h1v1h-1zm-561 1h1v1h-1zm6 0h1v1h-1zm103 0h1v1h-1zm75 0h1v1h-1zm275 0h3v1h-3zm30 0h3v1h-3zm6 0h4v1h-4zm5 0h4v1h-4zm7 0h4v1h-4zm18 0h3v1h-3zm30 0h3v1h-3zm5 0h5v1h-5zm-559 1h5v1h-5zm107 0h1v1h-1zm77 0h1v1h-1zm5 0h1v1h-1zm-83 1h1v1h-1zm6 0h1v1h-1zm73 0h1v1h-1zm-80 1h1v1h-1zm81 0h1v1h-1zm4 0h1v1h-1zm-86 1h1v1h-1zm83 0h1v1h-1zm-84 1h1v1h-1zm6 0h1v1h-1zm79 0h1v1h-1zm4 0h1v1h-1zm-90 1h1v1h-1zm87 0h1v1h-1zm-88 1h1v1h-1zm89 0h1v1h-1zm4 0h1v1h-1zm-94 1h1v1h-1zm6 0h1v1h-1zm85 0h1v1h-1zm-92 1h1v1h-1zm93 0h1v1h-1zm4 0h1v1h-1zm-98 1h1v1h-1zm5 0h1v1h-1zm90 0h1v1h-1zm-96 1h1v1h-1zm97 0h1v1h-1zm4 0h1v1h-1zm-170 1h1v1h-1zm68 0h1v1h-1zm99 0h1v1h-1zm-100 1h1v1h-1zm5 0h1v1h-1zm96 0h1v1h-1zm4 0h1v1h-1zm-106 1h1v1h-1zm-1 1h1v1h-1zm108 0h1v1h-1zm-109 1h1v1h-1zm5 0h1v1h-1zm101 0h1v1h-1zm-165 1h1v1h-1zm58 0h1v1h-1zm108 0h1v1h-1zm4 0h1v1h-1zm-113 1h1v1h-1zm110 0h1v1h-1zm-111 1h1v1h-1zm5 0h1v1h-1zm107 0h1v1h-1zm4 0h1v1h-1zm-171 1h1v1h-1zm54 0h1v1h-1zm114 0h1v1h-1zm-115 1h1v1h-1zm4 0h1v1h-1zm112 0h1v1h-1zm4 0h1v1h-1zm-121 1h1v1h-1zm118 0h1v1h-1zm-170 1h1v1h-1zm51 0h1v1h-1zm120 0h1v1h-1zm4 0h1v1h-1zm-125 1h1v1h-1zm4 0h1v1h-1zm118 0h1v1h-1zm-123 1h1v1h-1zm124 0h1v1h-1zm4 0h1v1h-1zm-176 1h1v1h-1zm47 0h1v1h-1zm126 0h1v1h-1zm-127 1h1v1h-1zm4 0h1v1h-1zm124 0h1v1h-1zm3 0h1v1h-1zm-132 1h1v1h-1zm130 0h1v1h-1zm-175 1h1v1h-1zm44 0h1v1h-1zm132 0h1v1h-1zm3 0h1v1h-1zm-136 1h1v1h-1zm4 0h1v1h-1zm130 0h1v1h-1zm-135 1h1v1h-1zm136 0h1v1h-1zm3 0h1v1h-1zm-181 1h1v1h-1zm41 0h1v1h-1zm138 0h1v1h-1zm-139 1h1v1h-1zm4 0h1v1h-1zm136 0h1v1h-1zm3 0h1v1h-1zm-145 1h2v1h-2zm143 0h1v1h-1zm-180 1h1v1h-1zm36 0h1v1h-1zm4 0h1v1h-1zm141 0h1v1h-1zm3 0h1v1h-1zm-149 1h1v1h-1zm-1 1h1v1h-1zm151 0h1v1h-1zm-185 1h1v1h-1zm33 0h1v1h-1zm4 0h1v1h-1zm146 0h1v1h-1zm-151 1h1v1h-1zm152 0h1v1h-1zm3 0h1v1h-1zm-156 1h1v1h-1zm154 0h1v1h-1zm-184 1h1v1h-1zm29 0h1v1h-1zm4 0h1v1h-1zm152 0h1v1h-1zm3 0h1v1h-1zm-160 1h1v1h-1zm-1 1h1v1h-1zm160 0h1v1h-1zm3 0h1v1h-1zm365 0h3v1h-3zm-555 1h1v1h-1zm26 0h1v1h-1zm4 0h1v1h-1zm158 0h1v1h-1zm233 0h3v1h-3zm36 0h3v1h-3zm6 0h3v1h-3zm17 0h5v1h-5zm6 0h5v1h-5zm67 0h2v1h-2zm5 0h2v1h-2zm-533 1h1v1h-1zm164 0h1v1h-1zm3 0h1v1h-1zm232 0h1v1h-1zm36 0h1v1h-1zm6 0h1v1h-1zm24 0h1v1h-1zm63 0h1v1h-1zm6 0h1v1h-1zm-535 1h1v1h-1zm166 0h1v1h-1zm242 0h4v1h-4zm8 0h1v1h-1zm19 0h2v1h-2zm10 0h4v1h-4zm6 0h4v1h-4zm14 0h1v1h-1zm-489 1h1v1h-1zm23 0h1v1h-1zm4 0h1v1h-1zm164 0h1v1h-1zm3 0h1v1h-1zm227 0h3v1h-3zm37 0h1v1h-1zm5 0h3v1h-3zm17 0h4v1h-4zm8 0h1v1h-1zm68 0h1v1h-1zm-534 1h1v1h-1zm170 0h1v1h-1zm248 0h1v1h-1zm16 0h2v1h-2zm31 0h1v1h-1zm-466 1h1v1h-1zm3 0h1v1h-1zm169 0h1v1h-1zm2 0h1v1h-1zm225 0h1v1h-1zm36 0h1v1h-1zm6 0h1v1h-1zm18 0h1v1h-1zm73 0h1v1h-1zm6 0h1v1h-1zm-558 1h1v1h-1zm19 0h1v1h-1zm174 0h1v1h-1zm227 0h3v1h-3zm6 0h4v1h-4zm30 0h3v1h-3zm6 0h3v1h-3zm6 0h4v1h-4zm6 0h4v1h-4zm6 0h3v1h-3zm72 0h2v1h-2zm5 0h2v1h-2zm-539 1h1v1h-1zm176 0h1v1h-1zm2 0h1v1h-1zm281 0h1v1h-1zm77 0h3v1h-3zm-537 1h1v1h-1zm3 0h1v1h-1zm175 0h1v1h-1zm278 0h4v1h-4zm-473 1h1v1h-1zm16 0h1v1h-1zm180 0h1v1h-1zm2 0h1v1h-1zm-183 1h1v1h-1zm182 0h1v1h-1zm-183 1h1v1h-1zm3 0h1v1h-1zm181 0h1v1h-1zm2 0h1v1h-1zm-199 1h1v1h-1zm12 0h1v1h-1zm186 0h1v1h-1zm-187 1h1v1h-1zm190 0h1v1h-1zm-191 1h1v1h-1zm3 0h1v1h-1zm-13 1h1v1h-1zm9 0h1v1h-1zm191 0h1v1h-1zm3 0h1v1h-1zm-195 1h1v1h-1zm2 0h1v1h-1zm191 0h1v1h-1zm-194 1h1v1h-1zm195 0h1v1h-1zm2 0h1v1h-1zm-203 1h1v1h-1zm5 0h1v1h-1zm197 0h1v1h-1zm-198 1h1v1h-1zm2 0h1v1h-1zm197 0h1v1h-1zm2 0h1v1h-1zm-202 1h1v1h-1zm201 0h1v1h-1zm-204 1h1v1h-1zm2 0h1v1h-1zm203 0h1v1h-1zm2 0h1v1h-1zm-206 1h1v1h-1zm2 0h1v1h-1zm203 0h1v1h-1zm-206 1h1v1h-1zm207 0h1v1h-1zm2 0h1v1h-1zm-210 1h2v1h-2zm209 0h1v1h-1zm-210 1h1v1h-1zm2 0h1v1h-1zm209 0h1v1h-1zm2 0h1v1h-1zm-370 1h5v1h-5zm156 0h1v1h-1zm213 0h1v1h-1zm-370 1h1v1h-1zm6 0h1v1h-1zm150 0h1v1h-1zm5 0h1v1h-1zm210 0h2v1h-2zm-372 1h1v1h-1zm8 0h1v1h-1zm148 0h1v1h-1zm2 0h1v1h-1zm215 0h1v1h-1zm-374 1h1v1h-1zm10 0h1v1h-1zm146 0h1v1h-1zm219 0h2v1h-2zm-220 1h2v1h-2zm8 0h1v1h-1zm213 0h1v1h-1zm-222 1h1v1h-1zm223 0h2v1h-2zm-224 1h1v1h-1zm225 0h1v1h-1zm-226 1h2v1h-2zm12 0h1v1h-1zm215 0h2v1h-2zm-228 1h1v1h-1zm-151 1h1v1h-1zm10 0h1v1h-1zm140 0h1v1h-1zm232 0h1v1h-1zm25 0h1v1h-1zm-258 1h2v1h-2zm15 0h1v1h-1zm217 0h1v1h-1zm-233 1h1v1h-1zm234 0h1v1h-1zm2 0h1v1h-1zm-387 1h1v1h-1zm149 0h2v1h-2zm237 0h1v1h-1zm22 0h1v1h-1zm-407 1h1v1h-1zm2 0h1v1h-1zm10 0h1v1h-1zm135 0h1v1h-1zm2 0h1v1h-1zm17 0h1v1h-1zm220 0h2v1h-2zm333 0h3v1h-3zm-718 1h1v1h-1zm12 0h1v1h-1zm133 0h1v1h-1zm241 0h1v1h-1zm188 0h1v1h-1zm4 0h1v1h-1zm141 0h2v1h-2zm-706 1h1v1h-1zm131 0h1v1h-1zm243 0h2v1h-2zm17 0h1v1h-1zm170 0h2v1h-2zm3 0h2v1h-2zm141 0h1v1h-1zm2 0h1v1h-1zm-706 1h1v1h-1zm129 0h1v1h-1zm2 0h1v1h-1zm21 0h1v1h-1zm222 0h1v1h-1zm15 0h1v1h-1zm178 0h4v1h-4zm5 0h1v1h-1zm2 0h2v1h-2zm5 0h4v1h-4zm7 0h1v1h-1zm114 0h2v1h-2zm3 0h1v1h-1zm-575 1h1v1h-1zm247 0h2v1h-2zm197 0h2v1h-2zm4 0h1v1h-1zm2 0h1v1h-1zm121 0h1v1h-1zm3 0h1v1h-1zm-575 1h2v1h-2zm249 0h1v1h-1zm203 0h3v1h-3zm7 0h1v1h-1zm-460 1h1v1h-1zm26 0h1v1h-1zm225 0h2v1h-2zm10 0h1v1h-1zm195 0h1v1h-1zm-457 1h1v1h-1zm253 0h1v1h-1zm189 0h4v1h-4zm11 0h4v1h-4zm121 0h1v1h-1zm3 0h1v1h-1zm-578 1h2v1h-2zm255 0h2v1h-2zm321 0h2v1h-2zm-577 1h1v1h-1zm30 0h1v1h-1zm227 0h1v1h-1zm5 0h1v1h-1zm-263 1h1v1h-1zm259 0h2v1h-2zm324 0h1v1h-1zm-584 1h2v1h-2zm261 0h1v1h-1zm198 0h1v1h-1zm17 0h3v1h-3zm12 0h3v1h-3zm18 0h3v1h-3zm6 0h3v1h-3zm66 0h2v1h-2zm-579 1h1v1h-1zm33 0h1v1h-1zm230 0h1v1h-1zm213 0h1v1h-1zm16 0h1v1h-1zm14 0h1v1h-1zm6 0h1v1h-1zm-513 1h1v1h-1zm265 0h1v1h-1zm188 0h4v1h-4zm14 0h1v1h-1zm29 0h4v1h-4zm6 0h4v1h-4zm-503 1h2v1h-2zm267 0h1v1h-1zm214 0h1v1h-1zm3 0h5v1h-5zm7 0h3v1h-3zm20 0h1v1h-1zm6 0h1v1h-1zm-568 1h1v1h-1zm50 0h1v1h-1zm37 0h1v1h-1zm227 0h1v1h-1zm5 0h1v1h-1zm200 0h1v1h-1zm12 0h1v1h-1zm30 0h1v1h-1zm6 0h1v1h-1zm-568 1h1v1h-1zm2 0h1v1h-1zm48 0h1v1h-1zm264 0h1v1h-1zm217 0h1v1h-1zm11 0h1v1h-1zm19 0h1v1h-1zm6 0h1v1h-1zm66 0h1v1h-1zm-584 1h1v1h-1zm446 0h3v1h-3zm6 0h4v1h-4zm5 0h4v1h-4zm24 0h5v1h-5zm13 0h3v1h-3zm6 0h4v1h-4zm6 0h4v1h-4zm5 0h5v1h-5zm6 0h5v1h-5zm67 0h8v1h-8zm-585 1h1v1h-1zm40 0h1v1h-1zm234 0h2v1h-2zm236 0h1v1h-1zm80 0h1v1h-1zm-591 1h1v1h-1zm265 0h1v1h-1zm11 0h1v1h-1zm231 0h4v1h-4zm-508 1h1v1h-1zm278 0h2v1h-2zm-317 1h2v1h-2zm6 0h2v1h-2zm32 0h1v1h-1zm43 0h1v1h-1zm237 0h1v1h-1zm-316 1h1v1h-1zm6 0h1v1h-1zm29 0h1v1h-1zm266 0h1v1h-1zm16 0h1v1h-1zm-327 1h5v1h-5zm38 0h1v1h-1zm290 0h1v1h-1zm-283 1h1v1h-1zm45 0h1v1h-1zm239 0h1v1h-1zm-321 1h1v1h-1zm301 0h1v1h-1zm21 0h1v1h-1zm-321 1h1v1h-1zm38 0h1v1h-1zm284 0h1v1h-1zm-241 1h1v1h-1zm242 0h1v1h-1zm-283 1h1v1h-1zm258 0h1v1h-1zm24 0h1v1h-1zm-25 1h1v1h-1zm24 0h1v1h-1zm-323 1h1v1h-1zm9 0h1v1h-1zm35 0h1v1h-1zm40 0h1v1h-1zm238 0h1v1h-1zm-321 1h2v1h-2zm6 0h2v1h-2zm314 0h1v1h-1zm-275 1h1v1h-1zm251 0h1v1h-1zm22 0h2v1h-2zm-235 1h1v1h-1zm234 0h1v1h-1zm-271 1h1v1h-1zm270 0h1v1h-1zm-22 1h1v1h-1zm21 0h1v1h-1zm-267 1h1v1h-1zm35 0h1v1h-1zm231 0h1v1h-1zm-1 1h1v1h-1zm-263 1h1v1h-1zm242 0h1v1h-1zm20 0h1v1h-1zm-228 1h1v1h-1zm227 0h1v1h-1zm-259 1h1v1h-1zm258 0h1v1h-1zm-20 1h1v1h-1zm19 0h1v1h-1zm-255 1h1v1h-1zm30 0h1v1h-1zm205 0h1v1h-1zm19 0h1v1h-1zm-2 1h2v1h-2zm-250 1h1v1h-1zm249 0h1v1h-1zm-220 1h1v1h-1zm202 0h1v1h-1zm17 0h1v1h-1zm-246 1h1v1h-1zm245 0h1v1h-1zm-17 1h1v1h-1zm16 0h1v1h-1zm-242 1h1v1h-1zm25 0h1v1h-1zm200 0h1v1h-1zm16 0h1v1h-1zm-1 1h1v1h-1zm-238 1h1v1h-1zm237 0h1v1h-1zm-213 1h1v1h-1zm197 0h1v1h-1zm15 0h1v1h-1zm226 0h3v1h-3zm5 0h5v1h-5zm7 0h3v1h-3zm23 0h5v1h-5zm-495 1h1v1h-1zm233 0h1v1h-1zm226 0h1v1h-1zm10 0h1v1h-1zm6 0h1v1h-1zm-243 1h1v1h-1zm236 0h1v1h-1zm10 0h4v1h-4zm6 0h4v1h-4zm-483 1h1v1h-1zm21 0h1v1h-1zm195 0h1v1h-1zm13 0h2v1h-2zm232 0h1v1h-1zm5 0h1v1h-1zm5 0h3v1h-3zm17 0h5v1h-5zm6 0h4v1h-4zm-279 1h1v1h-1zm13 0h1v1h-1zm232 0h1v1h-1zm5 0h1v1h-1zm-463 1h1v1h-1zm225 0h1v1h-1zm232 0h1v1h-1zm11 0h1v1h-1zm24 0h1v1h-1zm-473 1h1v1h-1zm205 0h1v1h-1zm232 0h5v1h-5zm13 0h3v1h-3zm6 0h4v1h-4zm6 0h4v1h-4zm12 0h3v1h-3zm-491 1h1v1h-1zm209 0h1v1h-1zm12 0h1v1h-1zm261 0h1v1h-1zm-262 1h1v1h-1zm258 0h4v1h-4zm-476 1h1v1h-1zm16 0h1v1h-1zm201 0h1v1h-1zm-12 1h1v1h-1zm11 0h1v1h-1zm-214 1h1v1h-1zm213 0h1v1h-1zm-199 1h1v1h-1zm198 0h1v1h-1zm-210 1h1v1h-1zm199 0h1v1h-1zm9 0h2v1h-2zm-239 1h1v1h-1zm238 0h1v1h-1zm-205 1h1v1h-1zm11 0h1v1h-1zm193 0h1v1h-1zm-9 1h1v1h-1zm8 0h1v1h-1zm-304 1h1v1h-1zm72 0h1v1h-1zm31 0h1v1h-1zm192 0h1v1h-1zm8 0h1v1h-1zm-304 1h2v1h-2zm113 0h1v1h-1zm190 0h1v1h-1zm-304 1h1v1h-1zm78 0h1v1h-1zm29 0h1v1h-1zm196 0h1v1h-1zm-8 1h1v1h-1zm7 0h1v1h-1zm-193 1h1v1h-1zm5 0h1v1h-1zm187 0h1v1h-1zm-219 1h1v1h-1zm218 0h1v1h-1zm-189 1h1v1h-1zm182 0h1v1h-1zm6 0h1v1h-1zm-213 1h1v1h-1zm29 0h1v1h-1zm182 0h2v1h-2zm-297 1h5v1h-5zm112 0h1v1h-1zm184 0h1v1h-1zm-5 1h1v1h-1zm4 0h1v1h-1zm-205 1h1v1h-1zm24 0h2v1h-2zm180 0h1v1h-1zm-1 1h1v1h-1zm-199 1h1v1h-1zm195 0h1v1h-1zm3 0h1v1h-1zm-4 1h1v1h-1zm3 0h1v1h-1zm-173 1h1v1h-1zm172 0h1v1h-1zm-192 1h1v1h-1zm191 0h1v1h-1zm-173 1h1v1h-1zm4 0h1v1h-1zm166 0h1v1h-1zm2 0h1v1h-1zm-186 1h1v1h-1zm183 0h1v1h-1zm2 0h1v1h-1zm-165 1h1v1h-1zm163 0h2v1h-2zm-168 1h1v1h-1zm167 0h1v1h-1zm-178 1h1v1h-1zm18 0h1v1h-1zm159 0h1v1h-1zm-1 1h2v1h-2zm-172 1h1v1h-1zm7 0h1v1h-1zm9 0h1v1h-1zm155 0h2v1h-2zm-1 1h2v1h-2zm-152 1h1v1h-1zm151 0h1v1h-1zm2 0h1v1h-1zm-167 1h1v1h-1zm3 0h1v1h-1zm161 0h1v1h-1zm2 0h1v1h-1zm-150 1h1v1h-1zm147 0h1v1h-1zm2 0h1v1h-1zm-3 1h1v1h-1zm-145 1h1v1h-1zm143 0h2v1h-2zm-1 1h1v1h-1zm4 0h1v1h-1zm-155 1h1v1h-1zm11 0h1v1h-1zm139 0h1v1h-1zm-154 1h1v1h-1zm153 0h1v1h-1zm-145 1h1v1h-1zm9 0h1v1h-1zm135 0h1v1h-1zm5 0h1v1h-1zm-6 1h1v1h-1zm-150 1h1v1h-1zm18 0h1v1h-1zm131 0h1v1h-1zm-138 1h1v1h-1zm137 0h1v1h-1zm6 0h1v1h-1zm-134 1h1v1h-1zm127 0h1v1h-1zm-147 1h1v1h-1zm15 0h1v1h-1zm131 0h1v1h-1zm-124 1h1v1h-1zm123 0h1v1h-1zm7 0h1v1h-1zm-9 1h2v1h-2zm8 0h1v1h-1zm-151 1h1v1h-1zm19 0h1v1h-1zm5 0h1v1h-1zm118 0h1v1h-1zm-1 1h1v1h-1zm-118 1h1v1h-1zm3 0h1v1h-1zm114 0h1v1h-1zm9 0h1v1h-1zm-148 1h1v1h-1zm138 0h1v1h-1zm-111 1h1v1h-1zm110 0h1v1h-1zm-111 1h1v1h-1zm110 0h1v1h-1zm10 0h1v1h-1zm-146 1h1v1h-1zm29 0h1v1h-1zm106 0h1v1h-1zm-1 1h1v1h-1zm-1 1h1v1h-1zm11 0h1v1h-1zm-143 1h1v1h-1zm131 0h1v1h-1zm-100 1h1v1h-1zm2 0h1v1h-1zm96 0h2v1h-2zm-1 1h1v1h-1zm13 0h1v1h-1zm-141 1h1v1h-1zm33 0h1v1h-1zm4 0h1v1h-1zm90 0h1v1h-1zm13 0h1v1h-1zm-14 1h1v1h-1zm-91 1h1v1h-1zm90 0h1v1h-1zm-124 1h1v1h-1zm40 0h1v1h-1zm83 0h1v1h-1zm14 0h1v1h-1zm-15 1h1v1h-1zm-78 1h1v1h-1zm77 0h1v1h-1zm-121 1h1v1h-1zm38 0h1v1h-1zm82 0h1v1h-1zm15 0h1v1h-1zm-16 1h1v1h-1zm-79 1h1v1h-1zm8 0h1v1h-1zm70 0h1v1h-1zm-118 1h1v1h-1zm116 0h2v1h-2zm17 0h1v1h-1zm-91 1h1v1h-1zm10 0h1v1h-1zm63 0h1v1h-1zm-1 1h1v1h-1zm-113 1h1v1h-1zm43 0h1v1h-1zm69 0h1v1h-1zm18 0h1v1h-1zm-75 1h1v1h-1zm56 0h1v1h-1zm18 0h1v1h-1zm-84 1h1v1h-1zm65 0h1v1h-1zm-110 1h1v1h-1zm59 0h1v1h-1zm50 0h1v1h-1zm-63 1h1v1h-1zm62 0h1v1h-1zm19 0h1v1h-1zm-20 1h1v1h-1zm-106 1h1v1h-1zm47 0h1v1h-1zm15 0h1v1h-1zm43 0h1v1h-1zm-2 1h2v1h-2zm21 0h1v1h-1zm-75 1h1v1h-1zm17 0h1v1h-1zm36 0h1v1h-1zm-102 1h1v1h-1zm101 0h1v1h-1zm-50 1h1v1h-1zm49 0h1v1h-1zm22 0h1v1h-1zm-52 1h1v1h-1zm29 0h1v1h-1zm-46 1h1v1h-1zm45 0h1v1h-1zm-24 1h1v1h-1zm23 0h1v1h-1zm23 0h1v1h-1zm-65 1h1v1h-1zm41 0h1v1h-1zm23 0h1v1h-1zm-24 1h1v1h-1zm-38 1h1v1h-1zm21 0h1v1h-1zm16 0h1v1h-1zm70 0h1v1h-1zm-71 1h1v1h-1zm24 0h1v1h-1zm-58 1h1v1h-1zm23 0h1v1h-1zm9 0h2v1h-2zm-1 1h1v1h-1zm-29 1h1v1h-1zm28 0h1v1h-1zm26 0h1v1h-1zm-29 1h1v1h-1zm2 0h1v1h-1zm-25 1h1v1h-1zm24 0h1v1h-1zm-1 1h1v1h-1zm4 0h1v1h-1zm23 0h1v1h-1zm-49 1h1v1h-1zm21 0h1v1h-1zm-1 1h1v1h-1zm-18 1h1v1h-1zm17 0h1v1h-1zm11 0h1v1h-1zm17 0h1v1h-1zm-29 1h1v1h-1zm28 0h1v1h-1zm-42 1h1v1h-1zm13 0h1v1h-1zm17 0h1v1h-1zm-19 1h2v1h-2zm155 0h5v1h-5zm-164 1h1v1h-1zm8 0h1v1h-1zm30 0h1v1h-1zm-31 1h1v1h-1zm25 0h1v1h-1zm-30 1h1v1h-1zm4 0h1v1h-1zm-1 1h1v1h-1zm31 0h1v1h-1zm128 0h4v1h-4zm-53 3h1v1h-1zm53 0h1v1h-1zm-54 1h1v1h-1zm55 0h3v1h-3zm-66 1h3v1h-3zm-62 1h1v1h-1zm65 0h1v1h-1zm-3 10h1v1h-1zm0 1h15v1h-15zm-59 10h5v1h-5zm-2 1h2v1h-2zm7 0h2v1h-2zm-8 1h1v1h-1zm10 0h1v1h-1zm-11 1h1v1h-1zm12 0h1v1h-1zm-6 5h1v1h-1zm-6 5h1v1h-1zm12 0h1v1h-1zm-11 1h1v1h-1zm10 0h1v1h-1zm-9 1h2v1h-2zm7 0h2v1h-2zm-5 1h5v1h-5zm82 47h5v1h-5zm3 1h2v1h-2zm-1 1h1v1h-1zm-1 1h1v1h-1zm-1 1h1v1h-1zm-1 1h1v1h-1zm-9 1h1v1h-1zm8 0h1v1h-1zm-7 1h1v1h-1zm6 0h1v1h-1zm-5 1h1v1h-1zm4 0h1v1h-1zm-3 1h1v1h-1zm2 0h1v1h-1zm-1 1h1v1h-1zm-1 1h1v1h-1zm2 0h1v1h-1zm-3 1h1v1h-1zm4 0h1v1h-1zm-5 1h1v1h-1zm6 0h1v1h-1zm-7 1h1v1h-1zm8 0h1v1h-1zm-9 1h1v1h-1zm-1 1h1v1h-1z"/>
<path fill="#00ff00" d="M0 0m140 509h1v3h-1zm1 -354h1v6h-1zm7 354h1v3h-1zm1 -354h1v6h-1zm42 -101h1v11h-1zm1 386h1v5h-1zm4 7h1v3h-1zm0 4h1v4h-1zm1 -397h1v11h-1zm3 386h1v5h-1zm38 56h1v3h-1zm0 4h1v3h-1zm13 -149h1v2h-1zm33 123h1v5h-1zm4 7h1v3h-1zm0 4h1v2h-1zm4 -11h1v5h-1zm5 -98h1v2h-1zm2 0h1v2h-1zm161 -155h1v4h-1zm0 5h1v2h-1zm2 6h1v3h-1zm2 -9h1v2h-1zm0 3h1v5h-1zm2 6h1v3h-1zm2 -11h1v4h-1zm0 5h1v2h-1zm33 26h1v3h-1zm4 -5h1v2h-1zm48 76h1v2h-1zm0 10h1v2h-1zm4 -12h1v3h-1zm0 10h1v3h-1zm6 -10h1v3h-1zm0 10h1v3h-1zm4 -11h1v2h-1zm0 10h1v2h-1zm39 -71h1v5h-1zm0 8h1v3h-1zm0 40h1v6h-1zm1 -37h1v2h-1zm1 -61h1v4h-1zm0 50h1v2h-1zm0 13h1v2h-1zm1 -2h1v2h-1zm1 -11h1v5h-1zm0 8h1v3h-1zm0 40h1v6h-1zm2 -135h1v2h-1zm0 139h1v3h-1zm2 -102h1v4h-1zm2 -81h1v2h-1zm0 3h1v2h-1zm2 0h1v3h-1zm0 130h1v3h-1zm0 9h1v4h-1zm0 40h1v3h-1zm2 -143h1v2h-1zm0 3h1v4h-1zm0 37h1v2h-1zm0 3h1v4h-1zm2 60h1v4h-1zm0 40h1v3h-1zm2 -180h1v3h-1zm0 37h1v2h-1zm0 3h1v4h-1zm0 37h1v2h-1zm0 3h1v4h-1zm0 50h1v3h-1zm0 9h1v4h-1zm0 41h1v4h-1zm4 -183h1v2h-1zm0 3h1v3h-1zm0 40h1v4h-1zm0 40h1v4h-1zm0 59h1v4h-1zm0 41h1v4h-1zm8 -183h1v2h-1zm0 3h1v4h-1zm0 37h1v2h-1zm0 3h1v4h-1zm0 37h1v2h-1zm0 3h1v4h-1zm4 -80h1v4h-1zm0 40h1v4h-1zm0 40h1v4h-1zm2 -80h1v3h-1zm0 40h1v3h-1zm0 40h1v3h-1zm2 59h1v4h-1zm0 50h1v4h-1zm2 -189h1v3h-1zm0 40h1v3h-1zm0 40h1v3h-1zm2 -81h1v4h-1zm0 40h1v4h-1zm0 40h1v4h-1zm0 59h1v2h-1zm0 3h1v2h-1zm0 47h1v2h-1zm4 -189h1v4h-1zm0 40h1v4h-1zm0 40h1v4h-1zm0 62h1v2h-1zm0 47h1v2h-1zm0 3h1v2h-1zm2 -54h1v6h-1zm0 52h1v2h-1zm0 3h1v2h-1zm4 -3h1v2h-1zm0 3h1v2h-1zm2 -2h1v3h-1zm2 -51h1v5h-1zm2 51h1v3h-1zm0 4h1v2h-1zm2 -57h1v2h-1zm0 3h1v3h-1zm0 49h1v4h-1zm4 -49h1v3h-1zm0 49h1v4h-1zm4 -50h1v4h-1zm2 49h1v2h-1zm2 -46h1v2h-1zm0 45h1v3h-1zm2 -188h1v4h-1zm1 188h1v3h-1zm0 4h1v3h-1zm1 -153h1v2h-1zm0 40h1v2h-1zm2 -76h1v2h-1zm2 37h1v4h-1zm2 39h1v2h-1zm0 3h1v2h-1zm2 -84h1v6h-1zm0 42h1v2h-1zm0 3h1v2h-1zm0 36h1v5h-1zm4 -39h1v2h-1zm0 3h1v2h-1zm0 39h1v2h-1zm2 -41h1v3h-1zm2 -41h1v5h-1zm2 41h1v3h-1zm0 4h1v2h-1zm2 -47h1v2h-1zm0 3h1v3h-1zm0 39h1v4h-1zm0 41h1v4h-1zm2 0h1v4h-1zm2 -80h1v3h-1zm0 39h1v4h-1zm0 41h1v4h-1zm4 -41h1v4h-1zm0 40h1v4h-1zm2 -81h1v2h-1zm0 3h1v2h-1zm6 -3h1v2h-1zm0 40h1v2h-1zm0 3h1v2h-1zm0 37h1v2h-1zm0 3h1v2h-1zm28 -82h1v2h-1zm0 129h1v3h-1zm0 9h1v3h-1zm0 40h1v2h-1zm1 -99h1v5h-1zm1 65h1v2h-1zm0 37h1v2h-1zm2 -181h1v2h-1zm0 79h1v5h-1zm0 50h1v3h-1zm0 9h1v3h-1zm0 40h1v2h-1zm-563 -256h1v1h-1zm14 0h1v1h-1zm-13 1h1v1h-1zm12 0h1v1h-1zm-11 1h11v1h-11zm0 12h11v1h-11zm-1 1h1v1h-1zm12 0h1v1h-1zm-13 1h1v1h-1zm14 0h1v1h-1zm412 60h3v1h-3zm67 0h1v1h-1zm4 0h5v1h-5zm14 0h1v1h-1zm11 0h3v1h-3zm6 0h3v1h-3zm-103 1h1v1h-1zm67 0h2v1h-2zm9 0h1v1h-1zm20 0h1v1h-1zm6 0h1v1h-1zm33 0h3v1h-3zm-129 1h1v1h-1zm2 0h2v1h-2zm5 0h4v1h-4zm11 0h4v1h-4zm7 0h3v1h-3zm12 0h4v1h-4zm6 0h3v1h-3zm7 0h1v1h-1zm19 0h1v1h-1zm15 0h4v1h-4zm-88 1h2v1h-2zm4 0h2v1h-2zm4 0h1v1h-1zm32 0h1v1h-1zm6 0h1v1h-1zm4 0h1v1h-1zm22 0h1v1h-1zm24 0h2v1h-2zm7 0h1v1h-1zm-62 1h3v1h-3zm5 0h5v1h-5zm8 0h1v1h-1zm17 0h1v1h-1zm31 0h1v1h-1zm28 0h4v1h-4zm5 0h4v1h-4zm-137 1h1v1h-1zm46 0h1v1h-1zm2 0h1v1h-1zm48 0h1v1h-1zm7 0h1v1h-1zm-102 1h3v1h-3zm12 0h4v1h-4zm18 0h3v1h-3zm6 0h4v1h-4zm5 0h4v1h-4zm7 0h4v1h-4zm18 0h3v1h-3zm11 0h5v1h-5zm12 0h4v1h-4zm7 0h3v1h-3zm5 0h5v1h-5zm30 0h9v1h-9zm-603 20h1v1h-1zm8 0h1v1h-1zm-9 1h2v1h-2zm8 0h2v1h-2zm-9 1h1v1h-1zm8 0h1v1h-1zm-8 6h5v1h-5zm8 0h5v1h-5zm599 5h1v1h-1zm3 0h1v1h-1zm3 0h1v1h-1zm-140 1h5v1h-5zm67 0h3v1h-3zm7 0h1v1h-1zm6 0h1v1h-1zm18 0h1v1h-1zm5 0h3v1h-3zm30 0h2v1h-2zm3 0h2v1h-2zm3 0h1v1h-1zm-135 1h1v1h-1zm62 0h1v1h-1zm7 0h2v1h-2zm6 0h1v1h-1zm2 0h1v1h-1zm16 0h2v1h-2zm5 0h1v1h-1zm31 0h1v1h-1zm2 0h2v1h-2zm3 0h2v1h-2zm-135 1h1v1h-1zm3 0h5v1h-5zm6 0h4v1h-4zm12 0h4v1h-4zm7 0h3v1h-3zm12 0h4v1h-4zm6 0h3v1h-3zm7 0h1v1h-1zm29 0h4v1h-4zm47 0h1v1h-1zm3 0h1v1h-1zm3 0h1v1h-1zm-136 1h1v1h-1zm40 0h1v1h-1zm6 0h1v1h-1zm4 0h1v1h-1zm17 0h1v1h-1zm35 0h2v1h-2zm-103 1h1v1h-1zm42 0h3v1h-3zm5 0h5v1h-5zm8 0h1v1h-1zm12 0h1v1h-1zm10 0h5v1h-5zm56 0h1v1h-1zm3 0h1v1h-1zm3 0h1v1h-1zm-94 1h1v1h-1zm2 0h1v1h-1zm19 0h1v1h-1zm35 0h1v1h-1zm31 0h2v1h-2zm3 0h2v1h-2zm3 0h1v1h-1zm-108 1h3v1h-3zm6 0h4v1h-4zm5 0h4v1h-4zm7 0h4v1h-4zm17 0h5v1h-5zm7 0h3v1h-3zm12 0h4v1h-4zm6 0h4v1h-4zm6 0h3v1h-3zm6 0h3v1h-3zm30 0h1v1h-1zm2 0h2v1h-2zm3 0h2v1h-2zm-6 1h1v1h-1zm3 0h1v1h-1zm3 0h1v1h-1zm-5 32h1v1h-1zm7 0h1v1h-1zm-144 1h1v1h-1zm6 0h1v1h-1zm65 0h3v1h-3zm6 0h3v1h-3zm6 0h3v1h-3zm19 0h1v1h-1zm5 0h3v1h-3zm31 0h6v1h-6zm-558 1h1v1h-1zm2 0h1v1h-1zm417 0h2v1h-2zm6 0h2v1h-2zm65 0h1v1h-1zm6 0h1v1h-1zm10 0h1v1h-1zm15 0h2v1h-2zm5 0h1v1h-1zm-522 1h1v1h-1zm2 0h1v1h-1zm2 0h1v1h-1zm2 0h1v1h-1zm420 0h5v1h-5zm6 0h4v1h-4zm12 0h4v1h-4zm7 0h3v1h-3zm12 0h4v1h-4zm6 0h3v1h-3zm7 0h1v1h-1zm29 0h3v1h-3zm5 0h2v1h-2zm3 0h1v1h-1zm-505 1h1v1h-1zm2 0h1v1h-1zm2 0h1v1h-1zm450 0h1v1h-1zm6 0h1v1h-1zm4 0h1v1h-1zm17 0h1v1h-1zm5 0h2v1h-2zm6 0h3v1h-3zm4 0h1v1h-1zm4 0h1v1h-1zm16 0h2v1h-2zm-527 1h1v1h-1zm17 0h1v1h-1zm2 0h1v1h-1zm2 0h1v1h-1zm2 0h1v1h-1zm443 0h3v1h-3zm5 0h5v1h-5zm8 0h1v1h-1zm12 0h1v1h-1zm16 0h5v1h-5zm-482 1h1v1h-1zm2 0h1v1h-1zm2 0h1v1h-1zm2 0h1v1h-1zm438 0h1v1h-1zm2 0h1v1h-1zm19 0h1v1h-1zm5 0h1v1h-1zm12 0h1v1h-1zm18 0h1v1h-1zm-492 1h1v1h-1zm2 0h1v1h-1zm2 0h1v1h-1zm381 0h3v1h-3zm6 0h3v1h-3zm30 0h3v1h-3zm6 0h4v1h-4zm5 0h4v1h-4zm7 0h4v1h-4zm17 0h5v1h-5zm7 0h3v1h-3zm6 0h3v1h-3zm6 0h4v1h-4zm12 0h3v1h-3zm6 0h3v1h-3zm31 0h6v1h-6zm-555 1h1v1h-1zm37 0h1v1h-1zm2 0h1v1h-1zm2 0h1v1h-1zm2 0h1v1h-1zm511 0h1v1h-1zm7 0h1v1h-1zm-516 1h1v1h-1zm2 0h1v1h-1zm2 0h1v1h-1zm2 1h1v1h-1zm2 0h1v1h-1zm2 0h1v1h-1zm2 0h1v1h-1zm-56 1h1v1h-1zm58 0h1v1h-1zm2 0h1v1h-1zm2 0h1v1h-1zm2 1h1v1h-1zm2 0h1v1h-1zm2 0h1v1h-1zm2 0h1v1h-1zm2 1h1v1h-1zm2 0h1v1h-1zm2 0h1v1h-1zm2 0h1v1h-1zm188 0h1v1h-1zm12 0h1v1h-1zm-277 1h1v1h-1zm79 0h1v1h-1zm2 0h1v1h-1zm2 0h1v1h-1zm183 0h1v1h-1zm10 0h1v1h-1zm-191 1h1v1h-1zm2 0h1v1h-1zm2 0h1v1h-1zm2 0h1v1h-1zm2 1h1v1h-1zm2 0h1v1h-1zm2 0h1v1h-1zm-95 1h1v1h-1zm97 0h1v1h-1zm2 0h1v1h-1zm2 0h1v1h-1zm2 0h1v1h-1zm2 1h1v1h-1zm2 0h1v1h-1zm2 0h1v1h-1zm2 1h1v1h-1zm2 0h1v1h-1zm2 0h1v1h-1zm2 0h1v1h-1zm148 0h9v1h-9zm-264 1h1v1h-1zm118 0h1v1h-1zm2 0h1v1h-1zm2 0h1v1h-1zm2 0h1v1h-1zm2 1h1v1h-1zm2 0h1v1h-1zm2 0h1v1h-1zm2 1h1v1h-1zm2 0h1v1h-1zm2 0h1v1h-1zm2 0h1v1h-1zm125 0h1v1h-1zm10 0h1v1h-1zm-272 1h1v1h-1zm139 0h1v1h-1zm2 0h1v1h-1zm2 0h1v1h-1zm118 0h1v1h-1zm12 0h1v1h-1zm-128 1h1v1h-1zm2 0h1v1h-1zm2 0h1v1h-1zm2 0h1v1h-1zm2 1h1v1h-1zm2 0h1v1h-1zm2 0h1v1h-1zm109 0h3v1h-3zm-264 1h1v1h-1zm157 0h1v1h-1zm2 0h1v1h-1zm2 0h1v1h-1zm2 0h1v1h-1zm2 1h1v1h-1zm2 0h1v1h-1zm2 0h1v1h-1zm2 0h1v1h-1zm2 1h1v1h-1zm2 0h1v1h-1zm2 0h1v1h-1zm-176 1h1v1h-1zm178 0h1v1h-1zm2 0h1v1h-1zm2 0h1v1h-1zm2 0h1v1h-1zm79 0h3v1h-3zm-77 1h1v1h-1zm2 0h1v1h-1zm2 0h1v1h-1zm2 1h1v1h-1zm2 0h1v1h-1zm2 0h1v1h-1zm2 0h1v1h-1zm-197 1h1v1h-1zm199 0h1v1h-1zm2 0h1v1h-1zm2 0h1v1h-1zm2 1h1v1h-1zm2 0h1v1h-1zm2 0h1v1h-1zm2 0h1v1h-1zm24 0h1v1h-1zm-22 1h1v1h-1zm2 0h1v1h-1zm2 0h1v1h-1zm2 0h1v1h-1zm-217 1h1v1h-1zm219 0h1v1h-1zm2 0h1v1h-1zm2 0h1v1h-1zm2 1h1v1h-1zm2 0h1v1h-1zm-226 2h1v1h-1zm226 0h1v1h-1zm-2 2h1v1h-1zm73 0h5v1h-5zm-296 1h1v1h-1zm222 1h1v1h-1zm77 1h1v1h-1zm-298 1h1v1h-1zm219 0h1v1h-1zm78 0h1v1h-1zm-1 1h1v1h-1zm-78 1h1v1h-1zm-216 1h1v1h-1zm215 1h1v1h-1zm-214 2h1v1h-1zm212 0h1v1h-1zm325 0h1v1h-1zm4 0h1v1h-1zm-144 1h1v1h-1zm4 0h1v1h-1zm137 0h3v1h-3zm-327 1h1v1h-1zm186 0h2v1h-2zm3 0h2v1h-2zm-399 1h1v1h-1zm403 0h3v1h-3zm5 0h1v1h-1zm2 0h2v1h-2zm5 0h4v1h-4zm7 0h1v1h-1zm-214 1h1v1h-1zm194 0h1v1h-1zm4 0h1v1h-1zm2 0h2v1h-2zm4 0h1v1h-1zm-10 1h5v1h-5zm20 0h1v1h-1zm115 0h3v1h-3zm-535 1h1v1h-1zm205 0h1v1h-1zm195 0h1v1h-1zm136 0h1v1h-1zm-135 1h4v1h-4zm12 0h4v1h-4zm121 0h5v1h-5zm-330 1h1v1h-1zm332 0h1v1h-1zm-535 1h1v1h-1zm201 1h1v1h-1zm333 0h3v1h-3zm-103 1h1v1h-1zm5 0h3v1h-3zm13 0h1v1h-1zm12 0h1v1h-1zm4 0h5v1h-5zm-464 1h1v1h-1zm199 0h1v1h-1zm230 0h2v1h-2zm9 0h1v1h-1zm21 0h2v1h-2zm9 0h1v1h-1zm-69 1h3v1h-3zm5 0h4v1h-4zm14 0h1v1h-1zm34 0h4v1h-4zm15 0h1v1h-1zm-270 1h1v1h-1zm201 0h1v1h-1zm4 0h1v1h-1zm32 0h4v1h-4zm32 0h1v1h-1zm67 0h3v1h-3zm-531 1h1v1h-1zm396 0h5v1h-5zm20 0h1v1h-1zm47 0h1v1h-1zm69 0h1v1h-1zm-338 1h1v1h-1zm202 0h1v1h-1zm134 0h5v1h-5zm-133 1h4v1h-4zm12 0h4v1h-4zm18 0h3v1h-3zm6 0h3v1h-3zm5 0h5v1h-5zm12 0h4v1h-4zm7 0h3v1h-3zm-456 1h1v1h-1zm192 0h1v1h-1zm-2 2h1v1h-1zm-189 1h1v1h-1zm188 1h1v1h-1zm-186 2h1v1h-1zm184 0h1v1h-1zm-1 2h1v1h-1zm-182 1h1v1h-1zm181 1h1v1h-1zm-180 2h1v1h-1zm178 0h1v1h-1zm-1 2h1v1h-1zm-175 1h1v1h-1zm173 1h1v1h-1zm-172 2h1v1h-1zm171 0h1v1h-1zm-1 2h1v1h-1zm-169 1h1v1h-1zm167 1h1v1h-1zm-165 2h1v1h-1zm164 0h1v1h-1zm-237 1h1v1h-1zm2 1h1v1h-1zm233 0h1v1h-1zm-231 1h1v1h-1zm70 0h1v1h-1zm-69 1h2v1h-2zm229 0h1v1h-1zm-226 1h1v1h-1zm1 1h2v1h-2zm66 0h1v1h-1zm158 0h1v1h-1zm53 0h1v1h-1zm-274 1h1v1h-1zm272 0h1v1h-1zm-271 1h1v1h-1zm218 0h1v1h-1zm51 0h1v1h-1zm308 0h1v1h-1zm6 0h1v1h-1zm-582 1h1v1h-1zm63 0h1v1h-1zm203 0h1v1h-1zm-264 1h2v1h-2zm214 0h1v1h-1zm48 0h1v1h-1zm315 0h1v1h-1zm-575 1h1v1h-1zm258 0h1v1h-1zm181 0h1v1h-1zm2 0h2v1h-2zm5 0h4v1h-4zm5 0h4v1h-4zm8 0h1v1h-1zm114 0h5v1h-5zm-571 1h2v1h-2zm58 0h1v1h-1zm150 0h1v1h-1zm46 0h1v1h-1zm183 0h2v1h-2zm4 0h1v1h-1zm130 0h1v1h-1zm4 0h1v1h-1zm-573 1h1v1h-1zm250 0h1v1h-1zm205 0h1v1h-1zm113 0h1v1h-1zm6 0h1v1h-1zm-572 1h2v1h-2zm203 0h1v1h-1zm43 0h1v1h-1zm322 0h3v1h-3zm-566 1h1v1h-1zm53 0h1v1h-1zm189 0h1v1h-1zm184 0h3v1h-3zm12 0h4v1h-4zm128 0h1v1h-1zm2 0h1v1h-1zm-566 1h2v1h-2zm198 0h1v1h-1zm40 0h1v1h-1zm327 0h1v1h-1zm-563 1h1v1h-1zm234 0h1v1h-1zm-232 1h2v1h-2zm49 0h1v1h-1zm143 0h1v1h-1zm38 0h1v1h-1zm-228 1h1v1h-1zm226 0h1v1h-1zm229 0h1v1h-1zm5 0h3v1h-3zm7 0h1v1h-1zm17 0h3v1h-3zm-482 1h2v1h-2zm187 0h1v1h-1zm35 0h1v1h-1zm230 0h2v1h-2zm12 0h1v1h-1zm2 0h1v1h-1zm15 0h1v1h-1zm-435 1h1v1h-1zm174 0h1v1h-1zm145 0h1v1h-1zm6 0h1v1h-1zm6 0h1v1h-1zm93 0h4v1h-4zm-468 1h1v1h-1zm3 0h1v1h-1zm180 0h1v1h-1zm33 0h1v1h-1zm146 0h2v1h-2zm6 0h2v1h-2zm88 0h4v1h-4zm26 0h1v1h-1zm3 0h5v1h-5zm-483 1h1v1h-1zm212 0h1v1h-1zm148 0h1v1h-1zm6 0h1v1h-1zm93 0h5v1h-5zm20 0h1v1h-1zm-477 1h1v1h-1zm3 0h1v1h-1zm38 0h1v1h-1zm137 0h1v1h-1zm30 0h1v1h-1zm149 0h1v1h-1zm6 0h1v1h-1zm6 0h1v1h-1zm82 0h1v1h-1zm25 0h1v1h-1zm-474 1h1v1h-1zm204 0h1v1h-1zm156 0h1v1h-1zm6 0h1v1h-1zm78 0h3v1h-3zm6 0h3v1h-3zm12 0h4v1h-4zm6 0h4v1h-4zm5 0h5v1h-5zm-471 1h1v1h-1zm173 0h1v1h-1zm27 0h1v1h-1zm157 0h2v1h-2zm6 0h2v1h-2zm-361 1h1v1h-1zm37 0h1v1h-1zm159 0h1v1h-1zm153 0h1v1h-1zm6 0h1v1h-1zm6 0h1v1h-1zm-359 1h1v1h-1zm3 0h1v1h-1zm164 0h1v1h-1zm25 0h1v1h-1zm-190 1h1v1h-1zm188 0h1v1h-1zm-186 1h1v1h-1zm3 0h1v1h-1zm29 0h1v1h-1zm130 0h1v1h-1zm22 0h1v1h-1zm-182 1h1v1h-1zm180 0h1v1h-1zm165 0h1v1h-1zm6 0h1v1h-1zm6 0h1v1h-1zm-355 1h1v1h-1zm3 0h1v1h-1zm153 0h1v1h-1zm20 0h1v1h-1zm166 0h2v1h-2zm6 0h2v1h-2zm-346 1h1v1h-1zm27 0h1v1h-1zm145 0h1v1h-1zm168 0h1v1h-1zm6 0h1v1h-1zm-341 1h1v1h-1zm148 0h1v1h-1zm17 0h1v1h-1zm169 0h1v1h-1zm6 0h1v1h-1zm6 0h1v1h-1zm-349 1h1v1h-1zm166 0h1v1h-1zm176 0h1v1h-1zm6 0h1v1h-1zm-346 1h1v1h-1zm5 0h1v1h-1zm19 0h1v1h-1zm124 0h1v1h-1zm14 0h1v1h-1zm177 0h2v1h-2zm6 0h2v1h-2zm-343 1h1v1h-1zm158 0h1v1h-1zm173 0h1v1h-1zm6 0h1v1h-1zm6 0h1v1h-1zm-341 1h1v1h-1zm5 0h1v1h-1zm137 0h1v1h-1zm12 0h1v1h-1zm-152 1h1v1h-1zm20 0h1v1h-1zm130 0h1v1h-1zm-148 1h1v1h-1zm5 0h1v1h-1zm132 0h1v1h-1zm9 0h1v1h-1zm-144 1h1v1h-1zm142 0h1v1h-1zm-140 1h1v1h-1zm5 0h1v1h-1zm10 0h1v1h-1zm116 0h1v1h-1zm7 0h1v1h-1zm-136 1h1v1h-1zm134 0h1v1h-1zm-132 1h1v1h-1zm5 0h1v1h-1zm121 0h1v1h-1zm4 0h1v1h-1zm-128 1h1v1h-1zm10 0h1v1h-1zm116 0h1v1h-1zm-124 1h1v1h-1zm5 0h1v1h-1zm116 0h2v1h-2zm-119 1h1v1h-1zm118 0h1v1h-1zm-111 1h2v1h-2zm109 0h2v1h-2zm-114 1h1v1h-1zm112 0h1v1h-1zm-110 1h1v1h-1zm7 0h1v1h-1zm101 0h1v1h-1zm4 0h1v1h-1zm-110 1h1v1h-1zm3 0h1v1h-1zm101 0h1v1h-1zm-102 1h1v1h-1zm7 0h1v1h-1zm93 0h1v1h-1zm6 0h1v1h-1zm-8 1h1v1h-1zm-94 1h1v1h-1zm7 0h1v1h-1zm85 0h1v1h-1zm9 0h1v1h-1zm-99 1h1v1h-1zm88 0h1v1h-1zm-86 1h1v1h-1zm7 0h1v1h-1zm77 0h1v1h-1zm12 0h1v1h-1zm-100 1h1v1h-1zm6 0h1v1h-1zm80 0h1v1h-1zm-78 1h1v1h-1zm7 0h1v1h-1zm69 0h1v1h-1zm14 0h1v1h-1zm-88 1h1v1h-1zm72 0h1v1h-1zm-81 1h1v1h-1zm11 0h1v1h-1zm7 0h1v1h-1zm61 0h1v1h-1zm17 0h1v1h-1zm-19 1h1v1h-1zm-64 1h1v1h-1zm9 0h1v1h-1zm72 0h1v1h-1zm-93 1h1v1h-1zm14 0h1v1h-1zm60 0h1v1h-1zm-58 1h1v1h-1zm9 0h1v1h-1zm47 0h1v1h-1zm20 0h1v1h-1zm-74 1h1v1h-1zm52 0h1v1h-1zm-68 1h1v1h-1zm18 0h1v1h-1zm9 0h1v1h-1zm39 0h1v1h-1zm23 0h1v1h-1zm-69 1h1v1h-1zm44 0h1v1h-1zm-42 1h1v1h-1zm9 0h1v1h-1zm31 0h1v1h-1zm25 0h1v1h-1zm-86 1h1v1h-1zm23 0h1v1h-1zm36 0h1v1h-1zm-34 1h1v1h-1zm9 0h1v1h-1zm23 0h1v1h-1zm28 0h1v1h-1zm-58 1h1v1h-1zm28 0h1v1h-1zm-54 1h1v1h-1zm28 0h1v1h-1zm24 0h1v1h-1zm30 0h1v1h-1zm-52 1h1v1h-1zm20 0h1v1h-1zm-9 1h1v1h-1zm7 0h1v1h-1zm33 0h1v1h-1zm-79 1h1v1h-1zm30 0h1v1h-1zm14 0h1v1h-1zm-12 1h1v1h-1zm10 0h2v1h-2zm36 0h1v1h-1zm-38 1h1v1h-1zm-39 1h1v1h-1zm46 0h1v1h-1zm29 0h1v1h-1zm-36 2h1v1h-1zm11 0h1v1h-1zm24 0h1v1h-1zm-73 1h1v1h-1zm30 0h1v1h-1zm10 0h1v1h-1zm-12 1h1v1h-1zm14 0h1v1h-1zm11 0h1v1h-1zm18 0h1v1h-1zm-45 1h1v1h-1zm18 0h1v1h-1zm-42 1h1v1h-1zm22 0h1v1h-1zm22 0h1v1h-1zm11 0h1v1h-1zm13 0h1v1h-1zm-48 1h1v1h-1zm26 0h1v1h-1zm-28 1h1v1h-1zm30 0h1v1h-1zm11 0h1v1h-1zm8 0h1v1h-1zm-66 1h1v1h-1zm15 0h1v1h-1zm34 0h1v1h-1zm-36 1h1v1h-1zm49 0h1v1h-1zm2 0h1v1h-1zm-53 1h1v1h-1zm40 0h1v1h-1zm-50 1h1v1h-1zm8 0h1v1h-1zm44 0h1v1h-1zm10 0h1v1h-1zm3 0h1v1h-1zm-59 1h1v1h-1zm48 0h1v1h-1zm-50 1h1v1h-1zm52 0h1v1h-1zm4 0h1v1h-1zm9 0h1v1h-1zm-67 1h1v1h-1zm56 0h1v1h-1zm-58 1h1v1h-1zm59 0h2v1h-2zm14 0h1v1h-1zm-75 1h1v1h-1zm64 0h1v1h-1zm-66 1h1v1h-1zm7 0h1v1h-1zm55 0h1v1h-1zm6 0h1v1h-1zm-70 1h1v1h-1zm72 0h1v1h-1zm-74 1h1v1h-1zm64 0h1v1h-1zm12 0h1v1h-1zm13 0h1v1h-1zm-91 1h1v1h-1zm14 0h1v1h-1zm66 0h1v1h-1zm-82 1h1v1h-1zm67 0h1v1h-1zm30 0h1v1h-1zm-99 1h1v1h-1zm-2 1h1v1h-1zm22 0h1v1h-1zm47 0h1v1h-1zm21 0h1v1h-1zm15 0h1v1h-1zm-107 1h1v1h-1zm94 0h1v1h-1zm-96 1h1v1h-1zm72 0h1v1h-1zm26 0h1v1h-1zm15 0h1v1h-1zm-115 1h1v1h-1zm29 0h1v1h-1zm73 0h1v1h-1zm-104 1h1v1h-1zm75 0h1v1h-1zm46 0h1v1h-1zm-123 1h1v1h-1zm110 0h1v1h-1zm-112 1h1v1h-1zm36 0h1v1h-1zm41 0h1v1h-1zm37 0h1v1h-1zm15 0h1v1h-1zm-131 1h1v1h-1zm118 0h1v1h-1zm-120 1h1v1h-1zm80 0h1v1h-1zm42 0h1v1h-1zm15 0h1v1h-1zm-139 1h1v1h-1zm43 0h1v1h-1zm83 0h1v1h-1zm-128 1h1v1h-1zm82 0h1v1h-1zm48 0h1v1h-1zm15 0h1v1h-1zm-147 1h1v1h-1zm134 0h1v1h-1zm-136 1h1v1h-1zm51 0h1v1h-1zm34 0h1v1h-1zm68 0h1v1h-1zm-155 1h1v1h-1zm140 0h1v1h-1zm-142 1h1v1h-1zm88 0h1v1h-1zm56 0h1v1h-1zm17 0h1v1h-1zm-163 1h1v1h-1zm58 0h1v1h-1zm90 0h1v1h-1zm-150 1h1v1h-1zm90 0h1v1h-1zm62 0h1v1h-1zm2 1h1v1h-1zm-93 1h1v1h-1zm28 0h1v1h-1zm67 0h1v1h-1zm-69 2h1v1h-1zm-24 1h1v1h-1zm-69 1h1v1h-1zm92 0h1v1h-1zm-22 2h1v1h-1zm21 0h1v1h-1zm-2 2h1v1h-1zm-18 1h1v1h-1zm17 1h1v1h-1zm-15 2h1v1h-1zm13 0h1v1h-1zm-1 2h1v1h-1zm-11 1h1v1h-1zm10 1h1v1h-1zm-9 2h1v1h-1zm7 0h1v1h-1zm-101 2h5v1h-5zm100 0h1v1h-1zm-101 1h1v1h-1zm6 0h1v1h-1zm91 0h1v1h-1zm2 1h1v1h-1zm-99 5h1v1h-1zm6 0h1v1h-1zm-5 1h5v1h-5zm96 2h1v1h-1zm-98 2h9v1h-9zm92 20h1v1h-1zm8 0h1v1h-1zm-7 1h1v1h-1zm6 0h1v1h-1zm-5 1h5v1h-5zm-1 1h1v1h-1zm6 0h1v1h-1zm-6 6h1v1h-1zm6 0h1v1h-1zm-5 1h5v1h-5zm-2 4h9v1h-9zm-49 11h3v1h-3zm-1 1h1v1h-1zm2 3h2v1h-2zm-2 3h1v1h-1zm1 1h3v1h-3zm-93 4h5v1h-5zm-1 1h1v1h-1zm6 0h1v1h-1zm-6 4h1v1h-1zm6 0h1v1h-1zm-11 1h7v1h-7zm10 0h7v1h-7zm-10 4h17v1h-17z"/>
<path fill="#ffff00" d="M0 0m53 399h1v13h-1zm4 0h1v13h-1zm4 0h1v3h-1zm0 4h1v7h-1zm4 -2h1v9h-1zm60 -59h1v2h-1zm0 3h1v5h-1zm0 6h1v6h-1zm6 3h1v3h-1zm2 -4h1v3h-1zm11 85h1v3h-1zm96 -340h1v6h-1zm6 -1h1v7h-1zm4 0h1v7h-1zm41 19h1v15h-1zm4 2h1v13h-1zm4 -2h1v15h-1zm3 -1h1v15h-1zm5 0h1v2h-1zm0 13h1v2h-1zm14 -87h1v5h-1zm1 -7h1v2h-1zm0 5h1v2h-1zm0 7h1v2h-1zm10 -12h1v2h-1zm0 5h1v2h-1zm0 7h1v2h-1zm1 -5h1v5h-1zm168 308h1v3h-1zm0 4h1v3h-1zm4 0h1v3h-1zm0 98h1v7h-1zm2 8h1v5h-1zm2 -6h1v5h-1zm10 -2h1v3h-1zm0 8h1v5h-1zm87 -158h1v2h-1zm2 -99h1v4h-1zm2 102h1v2h-1zm2 -143h1v2h-1zm0 3h1v2h-1zm0 37h1v3h-1zm0 102h1v3h-1zm4 -182h1v2h-1zm0 43h1v2h-1zm0 39h1v3h-1zm0 100h1v3h-1zm2 -180h1v4h-1zm2 37h1v2h-1zm0 3h1v4h-1zm0 37h1v2h-1zm0 3h1v4h-1zm0 97h1v2h-1zm0 3h1v4h-1zm2 -180h1v4h-1zm2 0h1v3h-1zm0 37h1v2h-1zm0 3h1v4h-1zm0 37h1v2h-1zm0 3h1v4h-1zm0 99h1v4h-1zm4 -182h1v2h-1zm0 3h1v3h-1zm0 40h1v4h-1zm0 40h1v4h-1zm0 99h1v4h-1zm8 -182h1v2h-1zm0 3h1v4h-1zm0 37h1v2h-1zm0 3h1v4h-1zm0 37h1v2h-1zm0 3h1v4h-1zm4 -80h1v4h-1zm0 40h1v4h-1zm0 40h1v4h-1zm2 -80h1v3h-1zm0 40h1v3h-1zm0 40h1v3h-1zm2 49h1v4h-1zm2 -129h1v3h-1zm0 40h1v3h-1zm0 40h1v3h-1zm2 -81h1v4h-1zm0 40h1v4h-1zm0 40h1v4h-1zm0 53h1v2h-1zm0 50h1v2h-1zm4 -183h1v4h-1zm0 40h1v4h-1zm0 40h1v4h-1zm2 98h1v3h-1zm1 3h1v2h-1zm1 -52h1v6h-1zm0 54h1v2h-1zm1 -2h1v2h-1zm1 -3h1v3h-1zm2 -47h1v3h-1zm2 49h1v5h-1zm2 -49h1v3h-1zm2 -1h1v4h-1zm0 52h1v3h-1zm4 -52h1v4h-1zm2 49h1v2h-1zm2 -49h1v4h-1zm2 52h1v2h-1zm2 -53h1v3h-1zm2 -129h1v4h-1zm2 39h1v2h-1zm0 40h1v2h-1zm0 52h1v3h-1zm0 48h1v2h-1zm0 3h1v2h-1zm2 -183h1v2h-1zm0 3h1v2h-1zm0 77h1v3h-1zm4 -77h1v2h-1zm0 37h1v2h-1zm0 3h1v2h-1zm0 39h1v3h-1zm2 -83h1v3h-1zm0 41h1v5h-1zm1 -38h1v2h-1zm1 2h1v2h-1zm0 76h1v6h-1zm1 -78h1v2h-1zm1 -3h1v3h-1zm2 43h1v3h-1zm0 40h1v3h-1zm2 -81h1v5h-1zm2 41h1v3h-1zm0 40h1v3h-1zm2 -79h1v3h-1zm0 39h1v3h-1zm0 4h1v2h-1zm0 35h1v4h-1zm4 -39h1v3h-1zm0 39h1v4h-1zm2 -1h1v3h-1zm2 -79h1v4h-1zm2 39h1v2h-1zm0 3h1v2h-1zm0 39h1v3h-1zm2 -82h1v2h-1zm0 3h1v2h-1zm0 37h1v2h-1zm2 41h1v4h-1zm2 -78h1v2h-1zm0 37h1v2h-1zm0 3h1v2h-1zm27 -44h1v7h-1zm0 41h1v3h-1zm0 42h1v3h-1zm1 -39h1v3h-1zm1 -44h1v7h-1zm0 41h1v3h-1zm0 140h1v2h-1zm0 3h1v3h-1zm2 -182h1v4h-1zm1 183h1v2h-1zm1 -183h1v4h-1zm0 81h1v3h-1zm0 100h1v2h-1zm1 -143h1v2h-1zm0 4h1v3h-1zm-431 -131h1v1h-1zm12 0h1v1h-1zm-10 3h2v1h-2zm7 0h2v1h-2zm-5 1h5v1h-5zm-2 1h2v1h-2zm7 0h2v1h-2zm-7 10h2v1h-2zm7 0h2v1h-2zm-5 1h5v1h-5zm-85 47h1v1h-1zm7 0h3v1h-3zm-8 1h2v1h-2zm-1 1h1v1h-1zm0 6h5v1h-5zm9 0h3v1h-3zm44 10h1v1h-1zm8 0h1v1h-1zm4 0h4v1h-4zm-12 1h2v1h-2zm7 0h2v1h-2zm-5 1h1v1h-1zm4 0h1v1h-1zm-3 1h1v1h-1zm2 0h1v1h-1zm448 2h1v1h-1zm2 0h1v1h-1zm2 0h1v1h-1zm-135 1h3v1h-3zm67 0h1v1h-1zm5 0h3v1h-3zm13 0h1v1h-1zm12 0h1v1h-1zm5 0h3v1h-3zm34 0h1v1h-1zm2 0h1v1h-1zm-139 1h1v1h-1zm67 0h2v1h-2zm9 0h1v1h-1zm21 0h2v1h-2zm9 0h1v1h-1zm31 0h3v1h-3zm-131 1h4v1h-4zm7 0h4v1h-4zm11 0h4v1h-4zm7 0h3v1h-3zm12 0h4v1h-4zm6 0h3v1h-3zm7 0h1v1h-1zm19 0h1v1h-1zm15 0h1v1h-1zm2 0h2v1h-2zm-89 1h1v1h-1zm39 0h1v1h-1zm6 0h1v1h-1zm4 0h1v1h-1zm21 0h3v1h-3zm17 0h2v1h-2zm4 0h1v1h-1zm8 0h4v1h-4zm-100 1h1v1h-1zm41 0h3v1h-3zm5 0h5v1h-5zm8 0h1v1h-1zm-55 1h1v1h-1zm45 0h1v1h-1zm2 0h1v1h-1zm-48 1h5v1h-5zm13 0h4v1h-4zm18 0h3v1h-3zm6 0h4v1h-4zm5 0h4v1h-4zm7 0h4v1h-4zm18 0h3v1h-3zm6 0h3v1h-3zm24 0h3v1h-3zm6 0h3v1h-3zm35 0h1v1h-1zm-1 1h1v1h-1zm2 0h1v1h-1zm-448 3h4v1h-4zm-1 22h1v1h-1zm1 6h1v1h-1zm2 0h1v1h-1zm2 1h1v1h-1zm438 0h1v1h-1zm3 0h1v1h-1zm2 0h2v1h-2zm-137 1h3v1h-3zm66 0h3v1h-3zm6 0h3v1h-3zm6 0h3v1h-3zm18 0h3v1h-3zm6 0h3v1h-3zm29 0h2v1h-2zm4 0h2v1h-2zm-132 1h1v1h-1zm62 0h1v1h-1zm6 0h1v1h-1zm10 0h1v1h-1zm14 0h1v1h-1zm41 0h1v1h-1zm-131 1h5v1h-5zm6 0h4v1h-4zm12 0h4v1h-4zm7 0h3v1h-3zm12 0h4v1h-4zm6 0h3v1h-3zm7 0h1v1h-1zm29 0h4v1h-4zm5 0h4v1h-4zm48 0h2v1h-2zm-138 1h4v1h-4zm42 0h1v1h-1zm6 0h1v1h-1zm4 0h1v1h-1zm17 0h1v1h-1zm5 0h2v1h-2zm24 0h2v1h-2zm5 0h4v1h-4zm36 0h1v1h-1zm-96 1h3v1h-3zm5 0h5v1h-5zm8 0h1v1h-1zm12 0h1v1h-1zm-22 1h1v1h-1zm2 0h1v1h-1zm19 0h1v1h-1zm5 0h1v1h-1zm10 0h1v1h-1zm14 0h1v1h-1zm6 0h1v1h-1zm-101 1h3v1h-3zm30 0h3v1h-3zm6 0h4v1h-4zm5 0h4v1h-4zm7 0h4v1h-4zm17 0h5v1h-5zm7 0h3v1h-3zm6 0h3v1h-3zm6 0h4v1h-4zm5 0h4v1h-4zm7 0h3v1h-3zm6 0h3v1h-3zm36 1h1v1h-1zm-6 32h1v1h-1zm6 0h1v1h-1zm-143 1h1v1h-1zm5 0h3v1h-3zm66 0h3v1h-3zm6 0h3v1h-3zm5 0h5v1h-5zm19 0h3v1h-3zm7 0h1v1h-1zm30 0h1v1h-1zm4 0h1v1h-1zm-143 1h2v1h-2zm9 0h1v1h-1zm62 0h1v1h-1zm10 0h1v1h-1zm24 0h1v1h-1zm3 0h2v1h-2zm32 0h3v1h-3zm-132 1h2v1h-2zm3 0h5v1h-5zm6 0h4v1h-4zm12 0h4v1h-4zm7 0h3v1h-3zm12 0h4v1h-4zm6 0h3v1h-3zm7 0h1v1h-1zm19 0h2v1h-2zm10 0h4v1h-4zm14 0h2v1h-2zm35 0h1v1h-1zm4 0h1v1h-1zm-136 1h1v1h-1zm40 0h1v1h-1zm6 0h1v1h-1zm4 0h1v1h-1zm17 0h1v1h-1zm5 0h1v1h-1zm24 0h1v1h-1zm-98 1h2v1h-2zm43 0h3v1h-3zm5 0h5v1h-5zm8 0h1v1h-1zm12 0h1v1h-1zm4 0h2v1h-2zm24 0h2v1h-2zm-96 1h1v1h-1zm46 0h1v1h-1zm2 0h1v1h-1zm19 0h1v1h-1zm5 0h1v1h-1zm24 0h1v1h-1zm-101 1h3v1h-3zm6 0h3v1h-3zm30 0h3v1h-3zm6 0h4v1h-4zm5 0h4v1h-4zm7 0h4v1h-4zm17 0h5v1h-5zm7 0h3v1h-3zm12 0h4v1h-4zm6 0h4v1h-4zm6 0h3v1h-3zm6 0h3v1h-3zm31 0h1v1h-1zm4 0h1v1h-1zm-3 1h3v1h-3zm-103 43h1v1h-1zm4 0h5v1h-5zm6 0h5v1h-5zm20 0h1v1h-1zm5 0h3v1h-3zm-36 1h2v1h-2zm9 0h1v1h-1zm21 0h2v1h-2zm9 0h1v1h-1zm-31 1h1v1h-1zm10 0h4v1h-4zm20 0h2v1h-2zm-31 1h1v1h-1zm30 0h1v1h-1zm-31 1h1v1h-1zm29 0h2v1h-2zm0 1h1v1h-1zm-35 1h3v1h-3zm18 0h4v1h-4zm6 0h4v1h-4zm6 0h3v1h-3zm6 0h3v1h-3zm68 43h1v1h-1zm-140 1h3v1h-3zm41 0h5v1h-5zm14 0h1v1h-1zm10 0h5v1h-5zm7 0h3v1h-3zm66 0h5v1h-5zm-135 1h1v1h-1zm42 0h1v1h-1zm26 0h1v1h-1zm-65 1h4v1h-4zm5 0h5v1h-5zm14 0h1v1h-1zm19 0h1v1h-1zm15 0h1v1h-1zm2 0h2v1h-2zm81 0h2v1h-2zm-142 1h3v1h-3zm43 0h1v1h-1zm16 0h2v1h-2zm4 0h1v1h-1zm2 0h4v1h-4zm8 0h2v1h-2zm67 0h2v1h-2zm-115 1h1v1h-1zm17 0h1v1h-1zm-43 1h1v1h-1zm66 0h1v1h-1zm6 0h1v1h-1zm-71 1h3v1h-3zm6 0h4v1h-4zm12 0h4v1h-4zm48 0h3v1h-3zm6 0h3v1h-3zm72 1h1v1h-1zm-595 38h1v1h-1zm-35 2h9v1h-9zm381 1h3v1h-3zm3 1h1v1h-1zm-376 2h3v1h-3zm-1 1h1v1h-1zm4 0h1v1h-1zm369 0h4v1h-4zm-376 1h3v1h-3zm7 3h1v1h-1zm370 0h3v1h-3zm-370 4h1v1h-1zm1 1h1v1h-1zm-82 39h1v1h-1zm4 0h1v1h-1zm4 0h1v1h-1zm-7 1h1v1h-1zm2 0h1v1h-1zm2 0h1v1h-1zm2 0h1v1h-1zm2 0h1v1h-1zm5 1h1v1h-1zm-1 1h2v1h-2zm-1 1h1v1h-1zm-2 1h2v1h-2zm1 8h1v1h-1zm2 0h1v1h-1zm-1 1h1v1h-1zm-1 1h1v1h-1zm2 0h1v1h-1zm-3 1h1v1h-1zm4 0h1v1h-1zm318 2h1v1h-1zm-2 1h1v1h-1zm-2 2h1v1h-1zm-238 16h3v1h-3zm-1 1h1v1h-1zm3 3h1v1h-1zm-1 1h1v1h-1zm-1 1h1v1h-1zm-1 1h1v1h-1zm0 1h5v1h-5zm365 4h1v1h-1zm6 0h1v1h-1zm4 0h3v1h-3zm-11 1h2v1h-2zm7 0h2v1h-2zm3 0h1v1h-1zm4 0h1v1h-1zm-15 1h1v1h-1zm8 0h1v1h-1zm2 0h1v1h-1zm-3 1h1v1h-1zm2 0h1v1h-1zm1 1h1v1h-1zm1 1h1v1h-1zm4 0h1v1h-1zm-3 1h3v1h-3zm1 1h1v1h-1zm1 1h1v1h-1zm-11 1h1v1h-1zm2 0h1v1h-1zm10 0h1v1h-1zm0 6h1v1h-1zm-1 1h1v1h-1z"/>
<path fill="#0000ff" d="M0 0m79 145h1v3h-1zm6 0h1v3h-1zm4 -4h1v3h-1zm2 106h1v6h-1zm4 -106h1v3h-1zm6 105h1v3h-1zm164 308h1v13h-1zm4 0h1v13h-1zm4 0h1v13h-1zm5 11h1v2h-1zm13 -130h1v8h-1zm1 -16h1v16h-1zm1 -16h1v16h-1zm1 -16h1v16h-1zm1 -16h1v16h-1zm1 -16h1v16h-1zm1 -16h1v16h-1zm1 -16h1v16h-1zm1 -16h1v16h-1zm1 -15h1v15h-1zm1 -16h1v16h-1zm1 -16h1v16h-1zm1 -16h1v16h-1zm1 -16h1v16h-1zm1 -16h1v16h-1zm1 -16h1v16h-1zm1 -16h1v16h-1zm1 -16h1v16h-1zm1 -8h1v8h-1zm6 -39h1v2h-1zm0 5h1v2h-1zm1 -3h1v3h-1zm7 -3h1v2h-1zm0 7h1v2h-1zm1 -5h1v5h-1zm28 379h1v4h-1zm3 0h1v4h-1zm0 5h1v4h-1zm47 -68h1v5h-1zm1 5h1v2h-1zm3 -4h1v3h-1zm2 8h1v3h-1zm0 4h1v4h-1zm2 -12h1v3h-1zm3 4h1v2h-1zm1 -5h1v5h-1zm40 -277h1v3h-1zm0 4h1v3h-1zm4 -4h1v3h-1zm0 4h1v3h-1zm15 135h1v2h-1zm0 3h1v2h-1zm1 2h1v2h-1zm5 -5h1v2h-1zm0 3h1v5h-1zm0 6h1v3h-1zm0 4h1v4h-1zm5 -8h1v2h-1zm1 -5h1v2h-1zm0 3h1v2h-1zm49 -111h1v2h-1zm0 9h1v2h-1zm1 -7h1v3h-1zm0 4h1v3h-1zm8 -4h1v3h-1zm0 4h1v3h-1zm1 -6h1v2h-1zm0 9h1v2h-1zm62 52h1v5h-1zm0 70h1v5h-1zm0 9h1v2h-1zm0 3h1v3h-1zm2 -112h1v4h-1zm0 30h1v2h-1zm2 0h1v5h-1zm0 68h1v3h-1zm0 4h1v3h-1zm0 7h1v2h-1zm2 -191h1v3h-1zm0 41h1v2h-1zm0 3h1v2h-1zm0 69h1v3h-1zm2 77h1v7h-1zm1 -190h1v3h-1zm0 4h1v3h-1zm1 40h1v2h-1zm0 37h1v2h-1zm0 32h1v3h-1zm2 0h1v3h-1zm0 70h1v3h-1zm0 4h1v2h-1zm0 5h1v4h-1zm2 -192h1v2h-1zm0 3h1v4h-1zm0 37h1v2h-1zm0 3h1v4h-1zm0 37h1v2h-1zm0 3h1v4h-1zm2 30h1v3h-1zm0 70h1v3h-1zm0 9h1v4h-1zm2 -192h1v2h-1zm0 3h1v4h-1zm0 37h1v2h-1zm0 3h1v4h-1zm0 37h1v2h-1zm0 3h1v4h-1zm0 30h1v4h-1zm2 67h1v2h-1zm0 3h1v4h-1zm0 7h1v2h-1zm0 3h1v4h-1zm2 -190h1v4h-1zm0 40h1v4h-1zm0 40h1v4h-1zm0 30h1v4h-1zm8 -113h1v2h-1zm0 3h1v4h-1zm0 37h1v2h-1zm0 3h1v4h-1zm0 37h1v2h-1zm0 3h1v4h-1zm4 -80h1v4h-1zm0 40h1v4h-1zm0 40h1v4h-1zm2 -80h1v3h-1zm0 40h1v3h-1zm0 40h1v3h-1zm2 39h1v4h-1zm0 20h1v4h-1zm0 30h1v4h-1zm2 -169h1v3h-1zm0 40h1v3h-1zm0 40h1v3h-1zm2 -81h1v4h-1zm0 40h1v4h-1zm0 40h1v4h-1zm0 43h1v2h-1zm0 45h1v3h-1zm2 -28h1v4h-1zm1 28h1v3h-1zm0 4h1v3h-1zm1 -172h1v4h-1zm0 40h1v4h-1zm0 40h1v4h-1zm0 119h1v2h-1zm2 -80h1v2h-1zm0 20h1v5h-1zm0 30h1v2h-1zm0 3h1v3h-1zm0 27h1v2h-1zm0 3h1v3h-1zm4 -80h1v2h-1zm0 47h1v2h-1zm0 30h1v2h-1zm2 -78h1v3h-1zm0 20h1v3h-1zm2 29h1v5h-1zm0 30h1v5h-1zm2 -59h1v3h-1zm2 -20h1v3h-1zm0 20h1v4h-1zm4 -20h1v3h-1zm0 20h1v4h-1zm2 -23h1v3h-1zm0 21h1v2h-1zm0 29h1v3h-1zm3 -50h1v3h-1zm0 4h1v3h-1zm0 46h1v3h-1zm0 4h1v3h-1zm1 -30h1v2h-1zm0 57h1v2h-1zm2 -60h1v2h-1zm0 34h1v2h-1zm2 -133h1v4h-1zm2 -41h1v2h-1zm0 80h1v2h-1zm0 40h1v2h-1zm0 20h1v2h-1zm0 3h1v2h-1zm0 57h1v2h-1zm2 -200h1v3h-1zm0 40h1v2h-1zm0 3h1v2h-1zm4 -41h1v3h-1zm0 41h1v2h-1zm0 37h1v2h-1zm0 3h1v2h-1zm2 -83h1v2h-1zm0 40h1v2h-1zm0 3h1v3h-1zm0 37h1v5h-1zm4 -77h1v2h-1zm0 37h1v2h-1zm2 -38h1v3h-1zm0 80h1v3h-1zm2 -41h1v5h-1zm2 41h1v3h-1zm2 -80h1v3h-1zm0 80h1v4h-1zm4 -80h1v3h-1zm0 80h1v4h-1zm2 -82h1v3h-1zm2 41h1v4h-1zm2 -39h1v3h-1zm0 78h1v2h-1zm0 3h1v2h-1zm2 -43h1v2h-1zm0 3h1v2h-1zm0 37h1v2h-1zm2 -79h1v4h-1zm2 42h1v2h-1zm0 37h1v2h-1zm0 3h1v2h-1zm26 0h1v2h-1zm1 -84h1v7h-1zm0 189h1v3h-1zm1 -148h1v2h-1zm0 3h1v2h-1zm1 -44h1v7h-1zm0 84h1v2h-1zm0 28h1v3h-1zm1 69h1v2h-1zm0 5h1v2h-1zm0 10h1v2h-1zm1 -196h1v7h-1zm0 82h1v2h-1zm1 -41h1v2h-1zm0 3h1v2h-1zm1 68h1v3h-1zm0 77h1v3h-1zm1 -184h1v2h-1zm0 77h1v2h-1zm-438 -107h5v1h-5zm-1 1h1v1h-1zm6 0h2v1h-2zm-7 1h1v1h-1zm9 0h1v1h-1zm-8 1h1v1h-1zm9 0h1v1h-1zm-8 1h1v1h-1zm0 8h1v1h-1zm-1 1h1v1h-1zm9 0h1v1h-1zm-10 1h1v1h-1zm9 0h1v1h-1zm-8 1h1v1h-1zm6 0h2v1h-2zm-5 1h5v1h-5zm430 8h1v1h-1zm2 0h1v1h-1zm2 0h1v1h-1zm-663 1h5v1h-5zm594 0h3v1h-3zm6 0h3v1h-3zm6 0h3v1h-3zm18 0h3v1h-3zm7 0h1v1h-1zm-634 1h3v1h-3zm8 0h1v1h-1zm588 0h1v1h-1zm10 0h1v1h-1zm6 0h1v1h-1zm18 0h1v1h-1zm3 0h2v1h-2zm-634 1h1v1h-1zm10 0h3v1h-3zm527 0h5v1h-5zm6 0h4v1h-4zm12 0h4v1h-4zm7 0h3v1h-3zm12 0h4v1h-4zm6 0h3v1h-3zm7 0h1v1h-1zm19 0h2v1h-2zm10 0h4v1h-4zm6 0h3v1h-3zm8 0h2v1h-2zm-631 1h1v1h-1zm10 0h1v1h-1zm4 0h1v1h-1zm518 0h5v1h-5zm42 0h1v1h-1zm6 0h1v1h-1zm4 0h1v1h-1zm17 0h1v1h-1zm5 0h1v1h-1zm5 0h3v1h-3zm19 0h1v1h-1zm-631 1h1v1h-1zm576 0h3v1h-3zm5 0h5v1h-5zm8 0h1v1h-1zm12 0h1v1h-1zm4 0h2v1h-2zm24 0h2v1h-2zm-50 1h1v1h-1zm2 0h1v1h-1zm19 0h1v1h-1zm5 0h1v1h-1zm6 0h1v1h-1zm18 0h1v1h-1zm-627 1h3v1h-3zm562 0h3v1h-3zm6 0h4v1h-4zm5 0h4v1h-4zm7 0h4v1h-4zm17 0h5v1h-5zm7 0h3v1h-3zm6 0h3v1h-3zm6 0h4v1h-4zm6 0h3v1h-3zm6 0h3v1h-3zm6 0h3v1h-3zm-635 1h1v1h-1zm4 0h1v1h-1zm6 0h1v1h-1zm4 0h1v1h-1zm656 0h2v1h-2zm-659 1h3v1h-3zm4 2h1v1h-1zm-15 1h1v1h-1zm4 0h1v1h-1zm10 0h1v1h-1zm-13 1h3v1h-3zm12 0h1v1h-1zm-9 1h1v1h-1zm6 0h3v1h-3zm219 0h1v1h-1zm-224 1h5v1h-5zm370 5h3v1h-3zm0 4h3v1h-3zm0 4h3v1h-3zm289 12h1v1h-1zm8 0h1v1h-1zm-139 1h3v1h-3zm67 0h1v1h-1zm5 0h3v1h-3zm5 0h4v1h-4zm8 0h1v1h-1zm12 0h1v1h-1zm5 0h3v1h-3zm30 0h1v1h-1zm6 0h1v1h-1zm-135 1h1v1h-1zm63 0h2v1h-2zm9 0h1v1h-1zm21 0h2v1h-2zm9 0h1v1h-1zm-103 1h1v1h-1zm3 0h5v1h-5zm6 0h4v1h-4zm12 0h4v1h-4zm7 0h3v1h-3zm12 0h4v1h-4zm6 0h3v1h-3zm7 0h1v1h-1zm19 0h1v1h-1zm16 0h4v1h-4zm-90 1h3v1h-3zm41 0h1v1h-1zm6 0h1v1h-1zm4 0h1v1h-1zm21 0h3v1h-3zm5 0h4v1h-4zm12 0h1v1h-1zm12 0h4v1h-4zm30 0h9v1h-9zm-89 1h3v1h-3zm5 0h5v1h-5zm8 0h1v1h-1zm35 0h3v1h-3zm-45 1h1v1h-1zm2 0h1v1h-1zm46 0h1v1h-1zm-93 1h3v1h-3zm30 0h3v1h-3zm6 0h4v1h-4zm5 0h4v1h-4zm7 0h4v1h-4zm18 0h3v1h-3zm6 0h3v1h-3zm17 0h4v1h-4zm7 0h3v1h-3zm6 0h3v1h-3zm30 0h1v1h-1zm6 0h1v1h-1zm-7 1h1v1h-1zm8 0h1v1h-1zm-221 1h1v1h-1zm16 0h1v1h-1zm-15 1h1v1h-1zm14 0h1v1h-1zm-13 1h1v1h-1zm12 0h1v1h-1zm-14 6h17v1h-17zm2 6h1v1h-1zm12 0h1v1h-1zm-13 1h1v1h-1zm14 0h1v1h-1zm-15 1h1v1h-1zm16 0h1v1h-1zm61 16h1v1h-1zm5 0h3v1h-3zm66 0h3v1h-3zm6 0h3v1h-3zm6 0h3v1h-3zm18 0h3v1h-3zm6 0h3v1h-3zm32 0h3v1h-3zm-140 1h2v1h-2zm5 0h1v1h-1zm66 0h1v1h-1zm6 0h1v1h-1zm10 0h1v1h-1zm14 0h1v1h-1zm37 0h2v1h-2zm5 0h2v1h-2zm-132 1h5v1h-5zm6 0h4v1h-4zm12 0h4v1h-4zm7 0h3v1h-3zm12 0h4v1h-4zm6 0h3v1h-3zm7 0h1v1h-1zm29 0h4v1h-4zm5 0h4v1h-4zm42 0h1v1h-1zm-129 1h1v1h-1zm39 0h1v1h-1zm6 0h1v1h-1zm4 0h1v1h-1zm17 0h1v1h-1zm5 0h2v1h-2zm24 0h2v1h-2zm5 0h4v1h-4zm30 0h2v1h-2zm-131 1h1v1h-1zm41 0h3v1h-3zm5 0h5v1h-5zm8 0h1v1h-1zm12 0h1v1h-1zm70 0h2v1h-2zm-137 1h1v1h-1zm45 0h1v1h-1zm2 0h1v1h-1zm19 0h1v1h-1zm5 0h1v1h-1zm10 0h1v1h-1zm14 0h1v1h-1zm6 0h1v1h-1zm38 0h1v1h-1zm-145 1h3v1h-3zm5 0h5v1h-5zm31 0h3v1h-3zm6 0h4v1h-4zm5 0h4v1h-4zm7 0h4v1h-4zm17 0h5v1h-5zm7 0h3v1h-3zm6 0h3v1h-3zm6 0h4v1h-4zm12 0h3v1h-3zm6 0h3v1h-3zm30 0h2v1h-2zm5 0h2v1h-2zm-3 1h3v1h-3zm-318 19h1v1h-1zm-4 1h1v1h-1zm-334 1h1v1h-1zm7 0h3v1h-3zm-8 1h2v1h-2zm7 0h1v1h-1zm324 0h1v1h-1zm325 0h3v1h-3zm-657 1h1v1h-1zm328 0h1v1h-1zm189 0h1v1h-1zm4 0h1v1h-1zm135 0h1v1h-1zm4 0h2v1h-2zm-143 1h2v1h-2zm3 0h2v1h-2zm137 0h1v1h-1zm4 0h1v1h-1zm-650 1h1v1h-1zm313 0h1v1h-1zm200 0h3v1h-3zm6 0h3v1h-3zm5 0h4v1h-4zm8 0h1v1h-1zm-533 1h1v1h-1zm310 0h1v1h-1zm-311 1h1v1h-1zm307 0h1v1h-1zm227 0h1v1h-1zm-535 1h1v1h-1zm649 0h1v1h-1zm4 0h1v1h-1zm-661 1h5v1h-5zm8 0h5v1h-5zm304 0h1v1h-1zm212 0h3v1h-3zm6 0h3v1h-3zm126 0h1v1h-1zm4 0h2v1h-2zm-352 1h1v1h-1zm349 0h3v1h-3zm-353 2h1v1h-1zm-4 1h1v1h-1zm255 0h1v1h-1zm4 0h5v1h-5zm7 0h3v1h-3zm24 0h3v1h-3zm-36 1h2v1h-2zm9 0h1v1h-1zm6 0h1v1h-1zm20 0h1v1h-1zm-293 1h1v1h-1zm266 0h1v1h-1zm10 0h4v1h-4zm6 0h3v1h-3zm-286 1h1v1h-1zm269 0h1v1h-1zm5 0h3v1h-3zm17 0h5v1h-5zm9 0h1v1h-1zm-32 1h1v1h-1zm31 0h1v1h-1zm-303 1h1v1h-1zm277 0h1v1h-1zm25 0h1v1h-1zm-306 1h1v1h-1zm270 0h3v1h-3zm12 0h3v1h-3zm6 0h4v1h-4zm6 0h3v1h-3zm11 0h5v1h-5zm-309 2h1v1h-1zm-4 1h1v1h-1zm-4 1h1v1h-1zm-4 2h1v1h-1zm-4 1h1v1h-1zm-4 2h1v1h-1zm-4 1h1v1h-1zm-4 2h1v1h-1zm-4 1h1v1h-1zm307 1h1v1h-1zm6 0h1v1h-1zm5 0h3v1h-3zm17 0h5v1h-5zm7 0h3v1h-3zm-346 1h1v1h-1zm310 0h2v1h-2zm6 0h2v1h-2zm9 0h1v1h-1zm-329 1h1v1h-1zm332 0h4v1h-4zm5 0h4v1h-4zm-341 1h1v1h-1zm347 0h4v1h-4zm7 0h4v1h-4zm-358 2h1v1h-1zm337 0h1v1h-1zm14 0h1v1h-1zm6 0h1v1h-1zm-361 1h1v1h-1zm326 0h3v1h-3zm6 0h3v1h-3zm6 0h3v1h-3zm6 0h4v1h-4zm12 0h3v1h-3zm6 0h3v1h-3zm-366 2h1v1h-1zm-4 1h1v1h-1zm-4 2h1v1h-1zm-8 3h1v1h-1zm-4 1h1v1h-1zm-4 2h1v1h-1zm-4 1h1v1h-1zm-4 1h1v1h-1zm-4 2h1v1h-1zm195 0h3v1h-3zm5 0h5v1h-5zm7 0h3v1h-3zm-211 1h1v1h-1zm-4 2h1v1h-1zm-4 1h1v1h-1zm184 1h1v1h-1zm26 0h2v1h-2zm7 0h2v1h-2zm-221 1h1v1h-1zm216 0h5v1h-5zm-220 1h1v1h-1zm-4 2h1v1h-1zm391 0h1v1h-1zm10 0h4v1h-4zm8 0h1v1h-1zm16 0h5v1h-5zm-429 1h1v1h-1zm226 0h9v1h-9zm168 0h2v1h-2zm39 0h1v1h-1zm-15 1h4v1h-4zm14 0h1v1h-1zm-436 1h1v1h-1zm403 0h5v1h-5zm6 0h4v1h-4zm12 0h1v1h-1zm6 0h5v1h-5zm8 0h1v1h-1zm-439 1h1v1h-1zm426 0h3v1h-3zm12 0h1v1h-1zm-442 1h1v1h-1zm433 0h1v1h-1zm-27 1h3v1h-3zm23 0h4v1h-4zm-433 1h1v1h-1zm-4 1h1v1h-1zm516 1h1v1h-1zm3 0h1v1h-1zm3 0h1v1h-1zm-526 1h1v1h-1zm381 0h1v1h-1zm138 0h2v1h-2zm3 0h3v1h-3zm4 0h2v1h-2zm-530 1h1v1h-1zm385 0h2v1h-2zm139 0h1v1h-1zm6 0h1v1h-1zm-143 1h1v1h-1zm5 0h3v1h-3zm5 0h4v1h-4zm6 0h5v1h-5zm8 0h1v1h-1zm114 0h1v1h-1zm4 0h1v1h-1zm-533 1h1v1h-1zm392 0h2v1h-2zm3 0h1v1h-1zm4 0h1v1h-1zm131 0h3v1h-3zm-534 1h1v1h-1zm399 0h5v1h-5zm20 0h1v1h-1zm116 0h1v1h-1zm-136 1h1v1h-1zm134 0h5v1h-5zm-537 1h1v1h-1zm404 0h4v1h-4zm5 0h4v1h-4zm-413 1h1v1h-1zm-4 1h1v1h-1zm547 1h1v1h-1zm-551 1h1v1h-1zm409 0h4v1h-4zm141 0h1v1h-1zm2 0h1v1h-1zm-556 1h1v1h-1zm555 0h1v1h-1zm-124 1h5v1h-5zm8 0h1v1h-1zm114 0h1v1h-1zm4 0h1v1h-1zm-561 1h1v1h-1zm417 0h4v1h-4zm141 0h3v1h-3zm-562 1h1v1h-1zm447 0h1v1h-1zm116 0h1v1h-1zm-2 1h5v1h-5zm-565 1h1v1h-1zm438 0h4v1h-4zm-442 1h1v1h-1zm-4 2h1v1h-1zm-4 1h1v1h-1zm480 0h3v1h-3zm5 0h4v1h-4zm8 0h1v1h-1zm11 0h3v1h-3zm6 0h3v1h-3zm-31 1h1v1h-1zm24 0h1v1h-1zm6 0h1v1h-1zm-513 1h1v1h-1zm502 0h4v1h-4zm-16 1h1v1h-1zm3 0h4v1h-4zm12 0h1v1h-1zm9 0h1v1h-1zm6 0h1v1h-1zm-31 1h1v1h-1zm17 0h3v1h-3zm7 0h1v1h-1zm6 0h1v1h-1zm-31 1h1v1h-1zm21 0h1v1h-1zm3 0h1v1h-1zm6 0h1v1h-1zm-31 1h5v1h-5zm18 0h4v1h-4zm6 0h5v1h-5zm6 0h5v1h-5zm-290 76h1v1h-1zm19 15h3v1h-3zm0 4h3v1h-3zm-3 3h2v1h-2zm7 0h2v1h-2zm-5 1h5v1h-5zm-2 4h9v1h-9zm-52 55h5v1h-5zm-89 51h1v1h-1zm4 0h1v1h-1zm4 0h1v1h-1zm-7 1h1v1h-1zm2 0h1v1h-1zm2 0h1v1h-1zm2 0h1v1h-1zm2 0h1v1h-1zm6 10h1v1h-1zm-1 1h3v1h-3zm-3 3h1v1h-1zm3 0h1v1h-1zm-2 1h2v1h-2z"/>
<path fill="#00ffff" d="M0 0m306 157h1v1h-1zm5 0h1v1h-1zm-8 2h1v1h-1zm10 0h1v1h-1zm-13 1h1v1h-1zm15 0h1v1h-1zm-18 1h1v1h-1zm-3 1h1v1h-1zm23 0h1v1h-1zm2 1h1v1h-1zm-28 1h1v1h-1zm30 0h1v1h-1zm-33 1h1v1h-1zm-3 1h1v1h-1zm38 0h1v1h-1zm2 1h1v1h-1zm-43 1h1v1h-1zm-3 1h1v1h-1zm48 0h1v1h-1zm-51 1h1v1h-1zm53 0h1v1h-1zm-56 1h1v1h-1zm58 1h1v1h-1zm-61 1h1v1h-1zm63 0h1v1h-1zm-66 1h1v1h-1zm68 0h1v1h-1zm-71 1h1v1h-1zm73 1h1v1h-1zm-76 1h1v1h-1zm78 0h1v1h-1zm-81 1h1v1h-1zm-3 1h1v1h-1zm86 0h1v1h-1zm-89 1h1v1h-1zm91 0h1v1h-1zm2 1h1v1h-1zm-96 1h1v1h-1zm-3 1h1v1h-1zm101 0h1v1h-1zm-104 1h1v1h-1zm106 0h1v1h-1zm-109 2h1v1h-1zm111 0h1v1h-1zm-114 1h1v1h-1zm116 0h1v1h-1zm-119 1h1v1h-1zm121 0h1v1h-1zm-124 2h1v1h-1zm126 0h1v1h-1zm-129 1h1v1h-1zm131 0h1v1h-1zm-134 1h1v1h-1zm-3 1h1v1h-1zm139 0h1v1h-1zm2 1h1v1h-1zm-144 1h1v1h-1zm146 0h1v1h-1zm-149 1h1v1h-1zm-3 1h1v1h-1zm154 0h1v1h-1zm2 1h1v1h-1zm-159 1h1v1h-1zm-3 1h1v1h-1zm164 0h1v1h-1zm-167 1h1v1h-1zm169 0h1v1h-1zm-172 1h1v1h-1zm174 1h1v1h-1zm-177 1h1v1h-1zm179 0h1v1h-1zm-182 1h1v1h-1zm184 0h1v1h-1zm-187 1h1v1h-1zm189 1h1v1h-1zm-192 1h1v1h-1zm194 0h1v1h-1zm2 2h1v1h-1zm-198 1h1v1h-1zm200 0h1v1h-1zm2 1h1v1h-1zm-202 2h1v1h-1zm204 0h1v1h-1zm2 1h1v1h-1zm-207 2h1v1h-1zm209 0h1v1h-1zm2 1h1v1h-1zm2 1h1v1h-1zm-213 1h1v1h-1zm215 1h1v1h-1zm2 1h1v1h-1zm-218 1h1v1h-1zm220 1h1v1h-1zm2 1h1v1h-1zm-223 1h1v1h-1zm225 0h1v1h-1zm2 2h1v1h-1zm-227 1h1v1h-1zm229 0h1v1h-1zm2 2h1v1h-1zm-232 1h1v1h-1zm234 0h1v1h-1zm2 2h1v1h-1zm-237 1h1v1h-1zm239 0h1v1h-1zm2 1h1v1h-1zm-241 2h1v1h-1zm243 0h1v1h-1zm2 1h1v1h-1zm-246 2h1v1h-1zm248 0h1v1h-1zm2 1h1v1h-1zm-250 2h1v1h-1zm-1 3h1v1h-1zm-1 3h1v1h-1zm0 3h1v1h-1zm-1 3h1v1h-1zm0 3h1v1h-1zm-1 3h1v1h-1zm-1 3h1v1h-1zm0 3h1v1h-1zm-1 3h1v1h-1zm-1 3h1v1h-1zm0 3h1v1h-1zm-1 3h1v1h-1zm0 3h1v1h-1zm-1 3h1v1h-1zm-1 3h1v1h-1zm0 3h1v1h-1zm-1 3h1v1h-1zm0 3h1v1h-1zm-1 3h1v1h-1zm-1 3h1v1h-1zm274 1h1v1h-1zm-274 2h1v1h-1zm272 1h1v1h-1zm-273 2h1v1h-1zm271 1h1v1h-1zm-271 2h1v1h-1zm270 1h1v1h-1zm-271 2h1v1h-1zm269 1h1v1h-1zm-270 2h1v1h-1zm268 1h1v1h-1zm-268 2h1v1h-1zm267 1h1v1h-1zm-268 2h1v1h-1zm266 1h1v1h-1zm-267 2h1v1h-1zm265 1h1v1h-1zm-265 2h1v1h-1zm263 1h1v1h-1zm-264 2h1v1h-1zm263 1h1v1h-1zm-263 2h1v1h-1zm261 1h1v1h-1zm-262 2h1v1h-1zm260 1h1v1h-1zm-1 3h1v1h-1zm-2 3h1v1h-1zm-2 3h1v1h-1zm-1 3h1v1h-1zm-2 3h1v1h-1zm-2 3h1v1h-1zm-2 3h1v1h-1zm-1 3h1v1h-1zm-2 3h1v1h-1zm-2 3h1v1h-1zm-1 3h1v1h-1zm-2 3h1v1h-1zm-2 3h1v1h-1zm-2 3h1v1h-1zm-1 3h1v1h-1zm-2 3h1v1h-1zm-2 3h1v1h-1zm-1 3h1v1h-1zm-2 3h1v1h-1zm-2 3h1v1h-1zm-1 3h1v1h-1zm-2 3h1v1h-1zm-2 3h1v1h-1zm-2 3h1v1h-1zm-1 3h1v1h-1zm-2 3h1v1h-1z"/>
<path fill="#ffffff" d="M0 0m15 285h1v28h-1zm1 -10h1v10h-1zm0 38h1v10h-1zm1 -48h1v10h-1zm0 58h1v10h-1zm1 -68h1v10h-1zm0 78h1v9h-1zm1 -85h1v7h-1zm0 95h1v8h-1zm1 -100h1v5h-1zm0 108h1v5h-1zm1 -113h1v5h-1zm0 118h1v5h-1zm1 -122h1v4h-1zm0 127h1v4h-1zm1 -131h1v4h-1zm0 135h1v4h-1zm1 -139h1v4h-1zm0 143h1v3h-1zm1 -146h1v3h-1zm0 149h1v4h-1zm1 -152h1v3h-1zm0 156h1v3h-1zm1 -159h1v3h-1zm0 162h1v3h-1zm1 -165h1v3h-1zm0 168h1v3h-1zm1 -171h1v3h-1zm0 174h1v3h-1zm1 -178h1v4h-1zm0 181h1v3h-1zm1 -184h1v3h-1zm0 187h1v4h-1zm1 -190h1v3h-1zm0 194h1v3h-1zm1 -196h1v2h-1zm0 199h1v2h-1zm1 2h1v2h-1zm1 -205h1v2h-1zm0 207h1v2h-1zm1 -210h1v3h-1zm0 212h1v3h-1zm1 -214h1v2h-1zm0 217h1v2h-1zm1 -219h1v2h-1zm0 221h1v2h-1zm1 -223h1v2h-1zm0 225h1v2h-1zm1 -228h1v3h-1zm0 230h1v3h-1zm1 -232h1v2h-1zm0 235h1v2h-1zm1 -237h1v2h-1zm0 239h1v2h-1zm1 -241h1v2h-1zm0 243h1v2h-1zm1 -246h1v3h-1zm0 248h1v3h-1zm1 -250h1v2h-1zm0 253h1v2h-1zm1 -255h1v2h-1zm0 257h1v2h-1zm1 -259h1v2h-1zm0 261h1v2h-1zm1 -263h1v2h-1zm0 265h1v2h-1zm1 -267h1v2h-1zm0 269h1v2h-1zm1 -271h1v2h-1zm0 273h1v2h-1zm1 -275h1v2h-1zm0 277h1v2h-1zm1 -279h1v2h-1zm0 281h1v2h-1zm2 -284h1v2h-1zm0 287h1v2h-1zm1 -289h1v2h-1zm1 292h1v2h-1zm1 -295h1v2h-1zm0 297h1v2h-1zm2 -300h1v2h-1zm0 303h1v2h-1zm1 -163h1v7h-1zm0 8h1v16h-1zm1 -151h1v2h-1zm0 126h1v4h-1zm0 5h1v12h-1zm0 36h1v3h-1zm0 4h1v13h-1zm0 138h1v2h-1zm1 -189h1v6h-1zm0 64h1v6h-1zm1 -187h1v2h-1zm0 119h1v4h-1zm0 76h1v2h-1zm0 120h1v2h-1zm1 -202h1v6h-1zm0 84h1v6h-1zm1 -200h1v2h-1zm0 110h1v5h-1zm0 96h1v6h-1zm0 115h1v2h-1zm1 -323h1v2h-1zm0 108h1v4h-1zm0 106h1v4h-1zm1 -110h1v4h-1zm0 116h1v3h-1zm0 106h1v2h-1zm1 -329h1v2h-1zm0 103h1v4h-1zm0 123h1v4h-1zm0 105h1v2h-1zm1 -230h1v2h-1zm0 129h1v4h-1zm1 -233h1v2h-1zm0 99h1v3h-1zm0 138h1v2h-1zm1 -140h1v2h-1zm0 142h1v3h-1zm0 99h1v2h-1zm1 -244h1v3h-1zm0 148h1v3h-1zm1 -246h1v2h-1zm0 94h1v4h-1zm0 156h1v3h-1zm1 -159h1v3h-1zm0 162h1v3h-1zm0 93h1v2h-1zm1 -258h1v3h-1zm0 74h1v7h-1zm0 8h1v3h-1zm0 4h1v10h-1zm0 82h1v2h-1zm1 -110h1v3h-1zm0 4h1v12h-1zm0 34h1v3h-1zm0 4h1v12h-1zm0 70h1v3h-1zm1 -175h1v3h-1zm0 56h1v7h-1zm0 61h1v7h-1zm0 61h1v2h-1zm1 -180h1v2h-1zm0 52h1v6h-1zm0 75h1v5h-1zm0 55h1v2h-1zm1 -184h1v2h-1zm0 52h1v2h-1zm0 82h1v4h-1zm0 52h1v2h-1zm1 -188h1v2h-1zm0 48h1v4h-1zm0 92h1v4h-1zm0 50h1v2h-1zm1 -192h1v2h-1zm0 46h1v4h-1zm0 100h1v4h-1zm0 48h1v3h-1zm1 -196h1v2h-1zm0 45h1v3h-1zm0 109h1v2h-1zm0 45h1v2h-1zm1 -283h1v2h-1zm0 82h1v2h-1zm0 43h1v4h-1zm0 115h1v4h-1zm0 45h1v2h-1zm1 -205h1v2h-1zm0 43h1v2h-1zm0 121h1v3h-1zm0 43h1v2h-1zm0 81h1v2h-1zm1 -291h1v2h-1zm0 40h1v4h-1zm0 130h1v4h-1zm0 42h1v2h-1zm1 -293h1v2h-1zm0 79h1v2h-1zm0 39h1v3h-1zm0 137h1v4h-1zm0 40h1v2h-1zm1 -218h1v2h-1zm0 39h1v2h-1zm0 181h1v2h-1zm0 79h1v2h-1zm1 -262h1v2h-1zm0 147h1v2h-1zm0 38h1v2h-1zm1 -225h1v2h-1zm0 36h1v4h-1zm0 153h1v3h-1zm0 38h1v2h-1zm1 -229h1v2h-1zm0 36h1v2h-1zm0 158h1v4h-1zm0 37h1v2h-1zm1 -233h1v2h-1zm0 33h1v3h-1zm0 167h1v4h-1zm0 35h1v2h-1zm1 -204h1v2h-1zm0 173h1v2h-1zm1 -207h1v2h-1zm0 32h1v2h-1zm0 177h1v2h-1zm0 32h1v2h-1zm1 -211h1v2h-1zm0 213h1v2h-1zm1 -247h1v2h-1zm0 32h1v2h-1zm0 185h1v2h-1zm0 32h1v2h-1zm1 -219h1v2h-1zm0 189h1v2h-1zm1 -222h1v2h-1zm0 31h1v2h-1zm0 193h1v2h-1zm0 31h1v2h-1zm1 -29h1v2h-1zm1 -199h1v2h-1zm1 -31h1v2h-1zm0 234h1v2h-1zm1 -207h1v2h-1zm0 209h1v2h-1zm1 -239h1v2h-1zm0 28h1v2h-1zm0 213h1v2h-1zm0 28h1v2h-1zm1 -243h1v2h-1zm1 -2h1v2h-1zm0 221h1v2h-1zm1 -249h1v2h-1zm0 123h1v16h-1zm0 17h1v16h-1zm0 137h1v2h-1zm1 -252h1v2h-1zm0 91h1v7h-1zm0 40h1v7h-1zm0 96h1v2h-1zm1 -255h1v2h-1zm0 112h1v7h-1zm0 54h1v6h-1zm0 117h1v2h-1zm1 -177h1v6h-1zm0 66h1v7h-1zm0 86h1v2h-1zm1 -157h1v5h-1zm0 78h1v5h-1zm1 -183h1v2h-1zm0 26h1v2h-1zm0 75h1v4h-1zm0 87h1v4h-1zm0 77h1v2h-1zm0 26h1v2h-1zm1 -267h1v2h-1zm0 74h1v3h-1zm0 94h1v3h-1zm0 75h1v2h-1zm1 -245h1v2h-1zm0 73h1v3h-1zm0 100h1v3h-1zm0 74h1v2h-1zm1 -273h1v2h-1zm0 96h1v3h-1zm0 106h1v3h-1zm1 -110h1v4h-1zm0 113h1v4h-1zm0 95h1v2h-1zm1 -278h1v2h-1zm0 67h1v3h-1zm0 120h1v3h-1zm1 -123h1v3h-1zm0 126h1v3h-1zm0 66h1v2h-1zm1 -195h1v3h-1zm0 132h1v3h-1zm1 -135h1v3h-1zm0 138h1v3h-1zm1 -141h1v3h-1zm0 144h1v3h-1zm0 61h1v2h-1zm0 24h1v2h-1zm1 -231h1v2h-1zm0 149h1v2h-1zm1 -151h1v2h-1zm0 153h1v2h-1zm1 -213h1v2h-1zm0 57h1v3h-1zm0 158h1v2h-1zm0 58h1v2h-1zm1 -218h1v2h-1zm0 162h1v2h-1zm1 -299h1v2h-1zm0 56h1v2h-1zm0 79h1v2h-1zm0 166h1v2h-1zm1 -223h1v2h-1zm0 55h1v2h-1zm0 170h1v2h-1zm0 79h1v2h-1zm1 -251h1v2h-1zm0 174h1v2h-1zm0 55h1v2h-1zm2 -355h1v2h-1zm0 122h1v2h-1zm0 182h1v2h-1zm1 -184h1v2h-1zm0 186h1v2h-1zm1 -239h1v2h-1zm0 51h1v2h-1zm0 190h1v2h-1zm1 2h1v2h-1zm0 51h1v2h-1zm1 -356h1v2h-1zm0 110h1v2h-1zm0 197h1v2h-1zm2 -200h1v2h-1zm0 203h1v2h-1zm2 -305h1v2h-1zm0 99h1v2h-1zm0 209h1v2h-1zm1 -211h1v2h-1zm0 213h1v2h-1zm2 -306h1v2h-1zm0 90h1v2h-1zm0 219h1v2h-1zm2 -222h1v2h-1zm0 225h1v2h-1zm2 -307h1v2h-1zm1 78h1v2h-1zm0 233h1v2h-1zm2 58h1v2h-1zm1 -364h1v2h-1zm1 68h1v2h-1zm1 244h1v2h-1zm2 -307h1v2h-1zm2 57h1v2h-1zm0 255h1v2h-1zm1 -308h1v2h-1zm3 4h1v2h-1zm2 367h1v2h-1zm3 -4h1v2h-1zm3 -4h1v2h-1zm3 -379h1v2h-1zm2 3h1v2h-1zm1 2h1v2h-1zm2 3h1v2h-1zm3 373h1v2h-1zm1 18h1v2h-1zm1 -21h1v2h-1zm0 19h1v2h-1zm1 -2h1v2h-1zm1 -20h1v2h-1zm1 17h1v2h-1zm1 -383h1v2h-1zm0 363h1v2h-1zm0 18h1v2h-1zm2 -378h1v2h-1zm0 357h1v2h-1zm1 -380h1v2h-1zm0 25h1v2h-1zm1 -23h1v2h-1zm0 375h1v2h-1zm1 -349h1v2h-1zm1 -23h1v2h-1zm0 369h1v2h-1zm1 -367h1v2h-1zm0 24h1v2h-1zm1 -22h1v2h-1zm0 24h1v2h-1zm0 338h1v2h-1zm2 -335h1v2h-1zm2 3h1v2h-1zm1 2h1v2h-1zm0 378h1v2h-1zm1 -2h1v2h-1zm1 -2h1v2h-1zm1 -2h1v2h-1zm0 56h1v2h-1zm1 -58h1v2h-1zm0 55h1v3h-1zm1 -2h1v2h-1zm1 -3h1v3h-1zm1 -2h1v2h-1zm1 -3h1v3h-1zm1 -465h1v2h-1zm0 463h1v2h-1zm1 -461h1v2h-1zm0 349h1v2h-1zm0 109h1v3h-1zm1 -456h1v2h-1zm0 454h1v2h-1zm1 -452h1v2h-1zm0 449h1v3h-1zm1 -447h1v2h-1zm0 339h1v2h-1zm0 106h1v2h-1zm1 -3h1v3h-1zm1 -2h1v2h-1zm1 -3h1v3h-1zm1 -2h1v2h-1zm1 -5h1v2h-1zm1 -2h1v2h-1zm1 -3h1v3h-1zm1 -2h1v2h-1zm1 -2h1v2h-1zm1 -2h1v2h-1zm6 -434h1v3h-1zm1 3h1v4h-1zm1 4h1v3h-1zm1 3h1v2h-1zm6 442h1v2h-1zm1 -3h1v3h-1zm1 -4h1v4h-1zm1 -3h1v3h-1zm1 -2h1v2h-1zm6 -447h1v2h-1zm1 2h1v4h-1zm1 4h1v5h-1zm1 5h1v2h-1zm7 452h1v2h-1zm1 -5h1v5h-1zm1 -4h1v4h-1zm1 -503h1v4h-1zm0 501h1v2h-1zm1 -497h1v6h-1zm1 6h1v6h-1zm1 6h1v6h-1zm1 6h1v6h-1zm1 6h1v6h-1zm1 6h1v6h-1zm1 6h1v3h-1zm0 5h1v3h-1zm1 3h1v7h-1zm1 7h1v3h-1zm9 455h1v8h-1zm1 -6h1v6h-1zm9 -461h1v6h-1zm1 6h1v8h-1zm4 392h1v7h-1zm1 -6h1v6h-1zm4 77h1v7h-1zm1 -37h1v29h-1zm0 30h1v7h-1zm4 -393h1v2h-1zm1 2h1v4h-1zm1 4h1v4h-1zm1 4h1v3h-1zm1 -73h1v7h-1zm0 8h1v29h-1zm1 -15h1v7h-1zm6 82h1v2h-1zm1 -2h1v2h-1zm1 -2h1v2h-1zm1 -2h1v2h-1zm0 386h1v7h-1zm1 -388h1v2h-1zm0 395h1v7h-1zm1 -397h1v2h-1zm8 -64h1v7h-1zm1 -7h1v7h-1zm1 390h1v3h-1zm1 3h1v6h-1zm1 6h1v4h-1zm6 61h1v3h-1zm1 3h1v7h-1zm1 7h1v3h-1zm0 4h1v4h-1zm1 4h1v6h-1zm1 6h1v6h-1zm1 6h1v6h-1zm1 6h1v6h-1zm1 6h1v6h-1zm1 6h1v6h-1zm1 -493h1v2h-1zm0 499h1v3h-1zm1 -504h1v5h-1zm1 -4h1v4h-1zm1 -2h1v2h-1zm7 451h1v3h-1zm1 3h1v4h-1zm1 4h1v5h-1zm1 5h1v2h-1zm6 -447h1v2h-1zm1 -3h1v3h-1zm1 -4h1v4h-1zm1 -3h1v3h-1zm1 -2h1v2h-1zm6 442h1v2h-1zm1 2h1v3h-1zm1 3h1v4h-1zm1 4h1v3h-1zm6 -433h1v2h-1zm1 -2h1v2h-1zm1 -3h1v3h-1zm1 -2h1v2h-1zm1 -2h1v2h-1zm0 350h1v4h-1zm1 -355h1v2h-1zm0 3h1v2h-1zm0 356h1v6h-1zm1 -361h1v2h-1zm0 367h1v4h-1zm1 -370h1v3h-1zm1 -2h1v2h-1zm1 -3h1v3h-1zm1 -2h1v2h-1zm0 444h1v2h-1zm1 -447h1v3h-1zm0 449h1v2h-1zm1 -451h1v2h-1zm0 453h1v2h-1zm1 -456h1v3h-1zm0 458h1v2h-1zm1 -460h1v2h-1zm0 462h1v2h-1zm1 -465h1v3h-1zm1 -2h1v2h-1zm1 -3h1v3h-1zm1 -2h1v2h-1zm0 54h1v2h-1zm1 -57h1v3h-1zm0 55h1v2h-1zm1 -57h1v2h-1zm0 55h1v2h-1zm1 -2h1v2h-1zm1 -2h1v2h-1zm1 -2h1v2h-1zm0 379h1v2h-1zm2 3h1v2h-1zm1 2h1v2h-1zm2 -335h1v2h-1zm0 338h1v2h-1zm0 24h1v2h-1zm1 2h1v2h-1zm1 -367h1v2h-1zm0 344h1v2h-1zm1 2h1v2h-1zm0 24h1v2h-1zm1 -373h1v2h-1zm0 375h1v2h-1zm1 -23h1v2h-1zm0 25h1v2h-1zm1 -380h1v2h-1zm1 358h1v2h-1zm1 -379h1v2h-1zm0 18h1v2h-1zm0 363h1v2h-1zm1 -383h1v2h-1zm1 -2h1v2h-1zm0 19h1v2h-1zm2 -22h1v2h-1zm0 19h1v2h-1zm1 -21h1v2h-1zm1 18h1v2h-1zm3 373h1v2h-1zm2 3h1v2h-1zm1 2h1v2h-1zm2 3h1v2h-1zm3 -379h1v2h-1zm3 -4h1v2h-1zm3 -4h1v2h-1zm2 367h1v2h-1zm3 4h1v2h-1zm1 -308h1v2h-1zm0 255h1v2h-1zm2 57h1v2h-1zm2 -62h1v2h-1zm1 -244h1v2h-1zm1 -52h1v2h-1zm0 363h1v2h-1zm3 -306h1v2h-1zm0 233h1v2h-1zm1 78h1v2h-1zm2 -307h1v2h-1zm0 225h1v2h-1zm2 -222h1v2h-1zm0 219h1v2h-1zm0 90h1v2h-1zm2 -306h1v2h-1zm0 213h1v2h-1zm1 -211h1v2h-1zm0 209h1v2h-1zm1 100h1v2h-1zm1 -306h1v2h-1zm0 203h1v2h-1zm2 -200h1v2h-1zm0 197h1v2h-1zm0 110h1v2h-1zm1 -112h1v2h-1zm1 -243h1v2h-1zm0 51h1v2h-1zm0 190h1v2h-1zm1 -188h1v2h-1zm0 186h1v2h-1zm1 -184h1v2h-1zm0 182h1v2h-1zm0 123h1v2h-1zm1 -303h1v2h-1zm1 2h1v2h-1zm0 174h1v2h-1zm0 55h1v2h-1zm1 -227h1v2h-1zm0 170h1v2h-1zm0 79h1v2h-1zm1 -326h1v2h-1zm0 79h1v2h-1zm0 166h1v2h-1zm0 136h1v2h-1zm1 -300h1v2h-1zm0 162h1v2h-1zm1 -217h1v2h-1zm0 57h1v3h-1zm0 158h1v2h-1zm0 58h1v2h-1zm1 -213h1v2h-1zm0 153h1v2h-1zm1 -151h1v2h-1zm0 149h1v2h-1zm1 -231h1v2h-1zm0 24h1v2h-1zm0 60h1v3h-1zm0 144h1v3h-1zm1 -141h1v3h-1zm0 138h1v3h-1zm1 -135h1v3h-1zm0 132h1v3h-1zm1 -129h1v3h-1zm0 126h1v3h-1zm0 66h1v2h-1zm1 -256h1v2h-1zm0 67h1v3h-1zm0 120h1v3h-1zm1 -117h1v4h-1zm0 113h1v4h-1zm0 95h1v2h-1zm1 -204h1v3h-1zm0 106h1v3h-1zm1 -176h1v2h-1zm0 73h1v3h-1zm0 100h1v3h-1zm0 74h1v2h-1zm1 -245h1v2h-1zm0 74h1v3h-1zm0 94h1v3h-1zm0 75h1v2h-1zm1 -267h1v2h-1zm0 26h1v2h-1zm0 75h1v4h-1zm0 87h1v4h-1zm0 77h1v2h-1zm0 26h1v2h-1zm1 -186h1v5h-1zm0 78h1v5h-1zm1 -154h1v2h-1zm0 81h1v6h-1zm0 66h1v7h-1zm1 -172h1v2h-1zm0 112h1v7h-1zm0 54h1v6h-1zm0 117h1v2h-1zm1 -255h1v2h-1zm0 91h1v7h-1zm0 40h1v7h-1zm0 96h1v2h-1zm1 -252h1v2h-1zm0 123h1v16h-1zm0 17h1v16h-1zm0 137h1v2h-1zm1 -249h1v2h-1zm0 221h1v2h-1zm1 -2h1v2h-1zm1 -243h1v2h-1zm0 28h1v2h-1zm0 213h1v2h-1zm0 28h1v2h-1zm1 -239h1v2h-1zm0 209h1v2h-1zm1 -207h1v2h-1zm0 234h1v2h-1zm1 -31h1v2h-1zm1 -199h1v2h-1zm1 -29h1v2h-1zm0 31h1v2h-1zm0 193h1v2h-1zm0 31h1v2h-1zm1 -222h1v2h-1zm0 189h1v2h-1zm1 -219h1v2h-1zm0 32h1v2h-1zm0 185h1v2h-1zm0 32h1v2h-1zm1 -247h1v2h-1zm0 213h1v2h-1zm1 -211h1v2h-1zm0 32h1v2h-1zm0 177h1v2h-1zm0 32h1v2h-1zm1 -207h1v2h-1zm0 173h1v2h-1zm1 -204h1v2h-1zm0 33h1v3h-1zm0 167h1v4h-1zm0 35h1v2h-1zm1 -233h1v2h-1zm0 34h1v4h-1zm0 160h1v3h-1zm0 37h1v2h-1zm1 -229h1v2h-1zm0 36h1v4h-1zm0 153h1v3h-1zm0 38h1v2h-1zm1 -187h1v2h-1zm0 147h1v2h-1zm0 38h1v2h-1zm1 -222h1v2h-1zm0 182h1v2h-1zm0 38h1v2h-1zm0 79h1v2h-1zm1 -376h1v2h-1zm0 79h1v2h-1zm0 39h1v3h-1zm0 137h1v4h-1zm0 40h1v2h-1zm1 -214h1v2h-1zm0 40h1v4h-1zm0 130h1v4h-1zm1 -168h1v3h-1zm0 42h1v4h-1zm0 123h1v2h-1zm0 43h1v2h-1zm0 81h1v2h-1zm1 -368h1v2h-1zm0 82h1v2h-1zm0 43h1v4h-1zm0 115h1v4h-1zm0 45h1v2h-1zm1 -201h1v2h-1zm0 45h1v2h-1zm0 107h1v4h-1zm0 47h1v2h-1zm1 -197h1v2h-1zm0 46h1v4h-1zm0 100h1v4h-1zm0 48h1v3h-1zm1 -144h1v4h-1zm0 92h1v4h-1zm0 50h1v2h-1zm1 -188h1v2h-1zm0 50h1v4h-1zm0 84h1v3h-1zm0 52h1v2h-1zm1 -184h1v2h-1zm0 52h1v6h-1zm0 75h1v5h-1zm0 55h1v2h-1zm1 -180h1v3h-1zm0 57h1v6h-1zm0 60h1v8h-1zm0 61h1v2h-1zm1 -175h1v2h-1zm0 60h1v13h-1zm0 14h1v2h-1zm0 24h1v13h-1zm0 14h1v2h-1zm1 -110h1v3h-1zm0 74h1v11h-1zm0 12h1v3h-1zm0 4h1v6h-1zm0 78h1v2h-1zm1 -165h1v3h-1zm0 162h1v3h-1zm0 93h1v2h-1zm1 -346h1v2h-1zm0 94h1v3h-1zm0 155h1v4h-1zm1 -151h1v3h-1zm0 148h1v3h-1zm1 -145h1v2h-1zm0 142h1v3h-1zm0 99h1v2h-1zm1 -338h1v2h-1zm0 99h1v3h-1zm0 138h1v2h-1zm1 -135h1v4h-1zm0 131h1v2h-1zm1 -230h1v2h-1zm0 103h1v4h-1zm0 123h1v4h-1zm0 105h1v2h-1zm1 -224h1v3h-1zm0 114h1v5h-1zm0 108h1v2h-1zm1 -326h1v2h-1zm0 108h1v4h-1zm0 106h1v4h-1zm1 -212h1v2h-1zm0 110h1v6h-1zm0 98h1v4h-1zm0 113h1v2h-1zm1 -205h1v6h-1zm0 84h1v6h-1zm1 -197h1v2h-1zm0 119h1v3h-1zm0 74h1v4h-1zm0 122h1v2h-1zm1 -192h1v6h-1zm0 64h1v6h-1zm1 -184h1v2h-1zm0 126h1v14h-1zm0 15h1v2h-1zm0 26h1v13h-1zm0 14h1v3h-1zm0 128h1v2h-1zm1 -166h1v17h-1zm0 18h1v6h-1zm1 -158h1v2h-1zm0 303h1v2h-1zm2 -300h1v2h-1zm0 297h1v2h-1zm1 -2h1v2h-1zm1 -292h1v2h-1zm1 2h1v2h-1zm0 287h1v2h-1zm2 -284h1v2h-1zm0 281h1v2h-1zm1 -279h1v2h-1zm0 277h1v2h-1zm1 -275h1v2h-1zm0 273h1v2h-1zm1 -271h1v2h-1zm0 269h1v2h-1zm1 -267h1v2h-1zm0 265h1v2h-1zm1 -263h1v2h-1zm0 261h1v2h-1zm1 -259h1v2h-1zm0 257h1v2h-1zm1 -255h1v2h-1zm0 253h1v2h-1zm1 -251h1v3h-1zm0 248h1v3h-1zm1 -245h1v2h-1zm0 243h1v2h-1zm1 -241h1v2h-1zm0 239h1v2h-1zm1 -237h1v2h-1zm0 235h1v2h-1zm1 -233h1v3h-1zm0 230h1v3h-1zm1 -227h1v2h-1zm0 225h1v2h-1zm1 -223h1v2h-1zm0 221h1v2h-1zm1 -219h1v2h-1zm0 217h1v2h-1zm1 -215h1v3h-1zm0 212h1v3h-1zm1 -209h1v2h-1zm0 207h1v2h-1zm1 -205h1v2h-1zm1 2h1v2h-1zm0 199h1v2h-1zm1 -197h1v3h-1zm0 194h1v3h-1zm1 -191h1v3h-1zm0 187h1v4h-1zm1 -184h1v4h-1zm0 181h1v3h-1zm1 -177h1v3h-1zm0 174h1v3h-1zm1 -171h1v3h-1zm0 168h1v3h-1zm1 -165h1v3h-1zm0 162h1v3h-1zm1 -159h1v3h-1zm0 156h1v3h-1zm1 -153h1v3h-1zm0 149h1v4h-1zm1 -146h1v4h-1zm0 143h1v3h-1zm1 -139h1v4h-1zm0 135h1v4h-1zm1 -131h1v4h-1zm0 127h1v4h-1zm1 -123h1v5h-1zm0 118h1v5h-1zm1 -113h1v5h-1zm0 108h1v5h-1zm1 -103h1v7h-1zm0 95h1v8h-1zm1 -86h1v8h-1zm0 76h1v10h-1zm1 -68h1v10h-1zm0 58h1v10h-1zm1 -48h1v10h-1zm0 38h1v10h-1zm1 -28h1v28h-1zm23 -276h1v2h-1zm0 3h1v2h-1zm4 -3h1v2h-1zm0 3h1v2h-1zm10 -5h1v2h-1zm0 3h1v4h-1zm4 1h1v3h-1zm6 -1h1v3h-1zm4 0h1v3h-1zm4 -3h1v7h-1zm4 3h1v3h-1zm4 0h1v3h-1zm2 0h1v3h-1zm4 0h1v3h-1zm8 -2h1v2h-1zm4 3h1v2h-1zm8 -4h1v3h-1zm3 0h1v3h-1zm0 4h1v3h-1zm3 -3h1v3h-1zm4 2h1v3h-1zm2 268h1v2h-1zm0 3h1v3h-1zm0 27h1v2h-1zm0 3h1v3h-1zm0 27h1v2h-1zm0 3h1v3h-1zm4 -63h1v2h-1zm0 30h1v2h-1zm0 30h1v2h-1zm-80 -331h1v1h-1zm52 0h5v1h-5zm19 0h3v1h-3zm-72 1h1v1h-1zm2 0h1v1h-1zm73 0h1v1h-1zm-69 1h4v1h-4zm5 0h5v1h-5zm6 0h1v1h-1zm2 0h2v1h-2zm5 0h3v1h-3zm12 0h3v1h-3zm6 0h4v1h-4zm32 0h2v1h-2zm-69 1h1v1h-1zm12 0h2v1h-2zm4 0h1v1h-1zm32 0h4v1h-4zm12 0h5v1h-5zm8 0h1v1h-1zm-74 1h5v1h-5zm7 0h3v1h-3zm65 0h2v1h-2zm-62 1h1v1h-1zm44 0h1v1h-1zm7 0h2v1h-2zm11 0h1v1h-1zm-66 1h4v1h-4zm19 0h3v1h-3zm12 0h3v1h-3zm6 0h4v1h-4zm12 0h3v1h-3zm6 0h2v1h-2zm12 0h3v1h-3zm-27 1h1v1h-1zm-367 1h28v1h-28zm363 0h4v1h-4zm-373 1h10v1h-10zm38 0h10v1h-10zm-48 1h10v1h-10zm58 0h10v1h-10zm-68 1h10v1h-10zm78 0h10v1h-10zm-85 1h7v1h-7zm95 0h8v1h-8zm-100 1h5v1h-5zm108 0h5v1h-5zm-113 1h5v1h-5zm118 0h5v1h-5zm-122 1h4v1h-4zm127 0h4v1h-4zm-131 1h4v1h-4zm135 0h4v1h-4zm-139 1h4v1h-4zm143 0h3v1h-3zm-146 1h3v1h-3zm149 0h4v1h-4zm-152 1h3v1h-3zm156 0h3v1h-3zm-159 1h3v1h-3zm162 0h3v1h-3zm-165 1h3v1h-3zm168 0h3v1h-3zm-171 1h3v1h-3zm174 0h3v1h-3zm-178 1h4v1h-4zm181 0h3v1h-3zm-184 1h3v1h-3zm187 0h4v1h-4zm-190 1h3v1h-3zm194 0h3v1h-3zm-196 1h2v1h-2zm199 0h2v1h-2zm-201 1h2v1h-2zm203 0h2v1h-2zm-205 1h2v1h-2zm206 0h3v1h-3zm-209 1h3v1h-3zm209 0h1v1h-1zm3 0h3v1h-3zm-214 1h2v1h-2zm217 0h2v1h-2zm-219 1h2v1h-2zm221 0h2v1h-2zm-223 1h2v1h-2zm225 0h2v1h-2zm-228 1h3v1h-3zm230 0h3v1h-3zm-232 1h2v1h-2zm235 0h2v1h-2zm-237 1h2v1h-2zm239 0h2v1h-2zm-241 1h2v1h-2zm243 0h2v1h-2zm-246 1h3v1h-3zm248 0h3v1h-3zm-250 1h2v1h-2zm253 0h2v1h-2zm-255 1h2v1h-2zm257 0h2v1h-2zm-259 1h2v1h-2zm261 0h2v1h-2zm-263 1h2v1h-2zm265 0h2v1h-2zm-267 1h2v1h-2zm269 0h2v1h-2zm-271 1h2v1h-2zm273 0h2v1h-2zm-275 1h2v1h-2zm277 0h2v1h-2zm-279 1h2v1h-2zm281 0h2v1h-2zm-282 1h1v1h-1zm284 0h1v1h-1zm-286 1h2v1h-2zm287 0h2v1h-2zm-289 1h2v1h-2zm291 0h1v1h-1zm-292 1h1v1h-1zm293 0h2v1h-2zm-295 1h2v1h-2zm297 0h2v1h-2zm-298 1h1v1h-1zm300 0h1v1h-1zm-302 1h2v1h-2zm303 0h2v1h-2zm-304 1h1v1h-1zm141 0h24v1h-24zm165 0h1v1h-1zm-308 1h2v1h-2zm126 0h17v1h-17zm41 0h17v1h-17zm142 0h2v1h-2zm-310 1h1v1h-1zm120 0h7v1h-7zm65 0h6v1h-6zm127 0h1v1h-1zm-314 1h2v1h-2zm119 0h4v1h-4zm74 0h4v1h-4zm122 0h2v1h-2zm-316 1h1v1h-1zm114 0h6v1h-6zm84 0h6v1h-6zm120 0h1v1h-1zm-320 1h2v1h-2zm110 0h6v1h-6zm96 0h6v1h-6zm115 0h2v1h-2zm-323 1h2v1h-2zm108 0h4v1h-4zm106 0h4v1h-4zm111 0h1v1h-1zm-326 1h1v1h-1zm105 0h4v1h-4zm114 0h5v1h-5zm108 0h2v1h-2zm-329 1h2v1h-2zm103 0h4v1h-4zm123 0h4v1h-4zm105 0h2v1h-2zm-332 1h1v1h-1zm100 0h4v1h-4zm131 0h4v1h-4zm103 0h1v1h-1zm-336 1h2v1h-2zm99 0h3v1h-3zm138 0h2v1h-2zm100 0h1v1h-1zm-338 1h1v1h-1zm98 0h2v1h-2zm142 0h3v1h-3zm99 0h2v1h-2zm-340 1h1v1h-1zm96 0h3v1h-3zm148 0h3v1h-3zm98 0h1v1h-1zm-344 1h2v1h-2zm94 0h4v1h-4zm155 0h4v1h-4zm96 0h1v1h-1zm-346 1h1v1h-1zm92 0h3v1h-3zm6 0h1v1h-1zm156 0h3v1h-3zm93 0h2v1h-2zm-348 1h1v1h-1zm90 0h3v1h-3zm74 0h22v1h-22zm94 0h2v1h-2zm92 0h1v1h-1zm-351 1h1v1h-1zm89 0h2v1h-2zm60 0h16v1h-16zm38 0h16v1h-16zm74 0h3v1h-3zm91 0h1v1h-1zm-353 1h1v1h-1zm87 0h3v1h-3zm56 0h7v1h-7zm61 0h8v1h-8zm61 0h2v1h-2zm89 0h1v1h-1zm-355 1h2v1h-2zm86 0h2v1h-2zm52 0h6v1h-6zm75 0h5v1h-5zm55 0h2v1h-2zm88 0h1v1h-1zm-357 1h1v1h-1zm3 0h1v1h-1zm82 0h2v1h-2zm50 0h4v1h-4zm84 0h4v1h-4zm52 0h2v1h-2zm87 0h1v1h-1zm-359 1h1v1h-1zm84 0h2v1h-2zm48 0h4v1h-4zm92 0h4v1h-4zm50 0h2v1h-2zm86 0h1v1h-1zm-361 1h1v1h-1zm83 0h3v1h-3zm45 0h5v1h-5zm101 0h4v1h-4zm48 0h3v1h-3zm85 0h1v1h-1zm-363 1h1v1h-1zm8 0h1v1h-1zm74 0h2v1h-2zm45 0h3v1h-3zm107 0h4v1h-4zm47 0h2v1h-2zm83 0h1v1h-1zm-366 1h2v1h-2zm11 0h1v1h-1zm71 0h2v1h-2zm43 0h4v1h-4zm115 0h4v1h-4zm45 0h2v1h-2zm82 0h1v1h-1zm-368 1h1v1h-1zm13 0h1v1h-1zm67 0h3v1h-3zm42 0h4v1h-4zm123 0h3v1h-3zm43 0h2v1h-2zm81 0h2v1h-2zm-370 1h1v1h-1zm79 0h2v1h-2zm40 0h4v1h-4zm130 0h4v1h-4zm42 0h2v1h-2zm81 0h1v1h-1zm-374 1h2v1h-2zm79 0h2v1h-2zm39 0h3v1h-3zm137 0h4v1h-4zm40 0h2v1h-2zm80 0h1v1h-1zm-376 1h1v1h-1zm19 0h1v1h-1zm59 0h2v1h-2zm39 0h2v1h-2zm143 0h2v1h-2zm38 0h2v1h-2zm79 0h2v1h-2zm-378 1h1v1h-1zm21 0h1v1h-1zm57 0h1v1h-1zm38 0h2v1h-2zm147 0h2v1h-2zm38 0h2v1h-2zm79 0h1v1h-1zm-381 1h1v1h-1zm23 0h1v1h-1zm54 0h2v1h-2zm36 0h4v1h-4zm153 0h3v1h-3zm38 0h2v1h-2zm78 0h1v1h-1zm-383 1h1v1h-1zm76 0h2v1h-2zm34 0h4v1h-4zm160 0h4v1h-4zm37 0h2v1h-2zm77 0h1v1h-1zm-385 1h1v1h-1zm75 0h2v1h-2zm33 0h3v1h-3zm167 0h4v1h-4zm35 0h2v1h-2zm76 0h1v1h-1zm-387 1h1v1h-1zm28 0h1v1h-1zm47 0h1v1h-1zm29 0h1v1h-1zm3 0h2v1h-2zm173 0h2v1h-2zm33 0h1v1h-1zm75 0h1v1h-1zm-389 1h1v1h-1zm30 0h1v1h-1zm44 0h2v1h-2zm31 0h3v1h-3zm178 0h2v1h-2zm32 0h2v1h-2zm75 0h1v1h-1zm-391 1h1v1h-1zm32 0h1v1h-1zm41 0h2v1h-2zm32 0h2v1h-2zm181 0h2v1h-2zm32 0h2v1h-2zm74 0h1v1h-1zm-393 1h1v1h-1zm72 0h2v1h-2zm13 0h1v1h-1zm19 0h2v1h-2zm185 0h2v1h-2zm31 0h3v1h-3zm74 0h1v1h-1zm-395 1h1v1h-1zm72 0h1v1h-1zm31 0h2v1h-2zm189 0h2v1h-2zm32 0h1v1h-1zm72 0h1v1h-1zm-397 1h1v1h-1zm37 0h1v1h-1zm34 0h2v1h-2zm31 0h2v1h-2zm193 0h2v1h-2zm31 0h2v1h-2zm72 0h1v1h-1zm-399 1h1v1h-1zm39 0h1v1h-1zm32 0h1v1h-1zm30 0h2v1h-2zm197 0h2v1h-2zm31 0h1v1h-1zm71 0h1v1h-1zm-401 1h1v1h-1zm71 0h1v1h-1zm29 0h2v1h-2zm201 0h2v1h-2zm30 0h1v1h-1zm71 0h1v1h-1zm-403 1h1v1h-1zm70 0h2v1h-2zm29 0h2v1h-2zm205 0h2v1h-2zm18 0h1v1h-1zm11 0h2v1h-2zm71 0h1v1h-1zm-405 1h1v1h-1zm44 0h1v1h-1zm26 0h2v1h-2zm28 0h2v1h-2zm209 0h2v1h-2zm29 0h1v1h-1zm70 0h1v1h-1zm-407 1h1v1h-1zm46 0h1v1h-1zm23 0h2v1h-2zm27 0h3v1h-3zm214 0h2v1h-2zm28 0h2v1h-2zm70 0h1v1h-1zm-409 1h1v1h-1zm48 0h1v1h-1zm21 0h1v1h-1zm27 0h2v1h-2zm217 0h2v1h-2zm28 0h1v1h-1zm69 0h1v1h-1zm-411 1h1v1h-1zm69 0h1v1h-1zm7 0h1v1h-1zm19 0h2v1h-2zm221 0h2v1h-2zm27 0h1v1h-1zm69 0h1v1h-1zm-413 1h1v1h-1zm68 0h2v1h-2zm27 0h1v1h-1zm96 0h33v1h-33zm128 0h1v1h-1zm26 0h2v1h-2zm69 0h1v1h-1zm-415 1h1v1h-1zm53 0h1v1h-1zm15 0h1v1h-1zm26 0h2v1h-2zm91 0h7v1h-7zm40 0h7v1h-7zm96 0h2v1h-2zm27 0h1v1h-1zm68 0h1v1h-1zm-417 1h1v1h-1zm55 0h1v1h-1zm12 0h2v1h-2zm27 0h1v1h-1zm85 0h7v1h-7zm54 0h6v1h-6zm91 0h2v1h-2zm26 0h2v1h-2zm68 0h1v1h-1zm-419 1h1v1h-1zm57 0h1v1h-1zm10 0h1v1h-1zm26 0h2v1h-2zm81 0h6v1h-6zm66 0h7v1h-7zm86 0h2v1h-2zm27 0h1v1h-1zm67 0h1v1h-1zm-421 1h1v1h-1zm67 0h1v1h-1zm17 0h1v1h-1zm9 0h1v1h-1zm77 0h5v1h-5zm78 0h5v1h-5zm81 0h1v1h-1zm26 0h1v1h-1zm67 0h1v1h-1zm-423 1h1v1h-1zm66 0h2v1h-2zm26 0h3v1h-3zm75 0h4v1h-4zm87 0h4v1h-4zm77 0h2v1h-2zm20 0h1v1h-1zm6 0h2v1h-2zm67 0h1v1h-1zm-363 1h1v1h-1zm4 0h1v1h-1zm25 0h2v1h-2zm74 0h3v1h-3zm94 0h3v1h-3zm75 0h2v1h-2zm17 0h1v1h-1zm9 0h1v1h-1zm-297 1h1v1h-1zm2 0h1v1h-1zm23 0h3v1h-3zm74 0h3v1h-3zm100 0h3v1h-3zm74 0h2v1h-2zm25 0h1v1h-1zm-362 1h1v1h-1zm64 0h2v1h-2zm25 0h1v1h-1zm9 0h1v1h-1zm62 0h3v1h-3zm106 0h3v1h-3zm72 0h2v1h-2zm25 0h1v1h-1zm65 0h1v1h-1zm-429 1h1v1h-1zm64 0h1v1h-1zm25 0h1v1h-1zm68 0h4v1h-4zm113 0h4v1h-4zm71 0h1v1h-1zm10 0h1v1h-1zm14 0h2v1h-2zm65 0h1v1h-1zm-367 1h1v1h-1zm24 0h2v1h-2zm67 0h3v1h-3zm120 0h3v1h-3zm68 0h1v1h-1zm8 0h1v1h-1zm17 0h1v1h-1zm-305 1h1v1h-1zm6 0h1v1h-1zm18 0h1v1h-1zm65 0h3v1h-3zm126 0h3v1h-3zm60 0h1v1h-1zm6 0h2v1h-2zm25 0h1v1h-1zm-370 1h1v1h-1zm63 0h1v1h-1zm8 0h1v1h-1zm16 0h1v1h-1zm63 0h3v1h-3zm132 0h3v1h-3zm65 0h1v1h-1zm24 0h1v1h-1zm63 0h1v1h-1zm-435 1h1v1h-1zm63 0h1v1h-1zm24 0h1v1h-1zm18 0h1v1h-1zm43 0h3v1h-3zm138 0h3v1h-3zm63 0h1v1h-1zm2 0h1v1h-1zm22 0h1v1h-1zm63 0h1v1h-1zm-437 1h1v1h-1zm62 0h2v1h-2zm24 0h2v1h-2zm60 0h3v1h-3zm144 0h3v1h-3zm49 0h1v1h-1zm12 0h2v1h-2zm24 0h2v1h-2zm63 0h1v1h-1zm-439 1h1v1h-1zm62 0h1v1h-1zm14 0h1v1h-1zm10 0h1v1h-1zm59 0h2v1h-2zm149 0h2v1h-2zm60 0h1v1h-1zm23 0h2v1h-2zm63 0h1v1h-1zm-441 1h1v1h-1zm62 0h1v1h-1zm16 0h1v1h-1zm8 0h1v1h-1zm24 0h1v1h-1zm34 0h2v1h-2zm153 0h2v1h-2zm59 0h1v1h-1zm21 0h1v1h-1zm3 0h1v1h-1zm62 0h1v1h-1zm-443 1h1v1h-1zm62 0h1v1h-1zm23 0h2v1h-2zm57 0h3v1h-3zm158 0h2v1h-2zm40 0h1v1h-1zm18 0h2v1h-2zm19 0h1v1h-1zm5 0h1v1h-1zm61 0h2v1h-2zm-444 1h1v1h-1zm62 0h1v1h-1zm23 0h1v1h-1zm56 0h2v1h-2zm162 0h2v1h-2zm58 0h1v1h-1zm16 0h1v1h-1zm7 0h1v1h-1zm59 0h1v1h-1zm3 0h1v1h-1zm-447 1h1v1h-1zm61 0h2v1h-2zm22 0h1v1h-1zm2 0h1v1h-1zm55 0h2v1h-2zm166 0h2v1h-2zm57 0h1v1h-1zm14 0h1v1h-1zm9 0h1v1h-1zm56 0h2v1h-2zm6 0h1v1h-1zm-449 1h1v1h-1zm61 0h1v1h-1zm23 0h2v1h-2zm55 0h2v1h-2zm170 0h2v1h-2zm32 0h1v1h-1zm24 0h1v1h-1zm23 0h2v1h-2zm54 0h1v1h-1zm8 0h1v1h-1zm-390 1h1v1h-1zm23 0h1v1h-1zm34 0h1v1h-1zm20 0h2v1h-2zm174 0h2v1h-2zm55 0h2v1h-2zm24 0h1v1h-1zm51 0h1v1h-1zm-382 1h2v1h-2zm23 0h1v1h-1zm53 0h2v1h-2zm178 0h2v1h-2zm55 0h1v1h-1zm8 0h1v1h-1zm15 0h1v1h-1zm49 0h1v1h-1zm-442 1h1v1h-1zm60 0h1v1h-1zm3 0h1v1h-1zm20 0h1v1h-1zm52 0h2v1h-2zm182 0h2v1h-2zm24 0h1v1h-1zm30 0h1v1h-1zm6 0h1v1h-1zm17 0h1v1h-1zm46 0h2v1h-2zm14 0h1v1h-1zm-455 1h1v1h-1zm60 0h1v1h-1zm5 0h1v1h-1zm18 0h1v1h-1zm39 0h1v1h-1zm12 0h2v1h-2zm186 0h2v1h-2zm53 0h1v1h-1zm4 0h1v1h-1zm19 0h1v1h-1zm44 0h1v1h-1zm16 0h1v1h-1zm-397 1h1v1h-1zm7 0h1v1h-1zm15 0h2v1h-2zm51 0h2v1h-2zm190 0h2v1h-2zm52 0h1v1h-1zm2 0h1v1h-1zm21 0h1v1h-1zm42 0h1v1h-1zm-381 1h1v1h-1zm9 0h1v1h-1zm13 0h1v1h-1zm51 0h1v1h-1zm193 0h2v1h-2zm16 0h1v1h-1zm35 0h2v1h-2zm23 0h1v1h-1zm40 0h1v1h-1zm-440 1h1v1h-1zm59 0h1v1h-1zm11 0h1v1h-1zm11 0h1v1h-1zm50 0h2v1h-2zm116 0h1v1h-1zm81 0h2v1h-2zm51 0h1v1h-1zm22 0h1v1h-1zm37 0h2v1h-2zm22 0h1v1h-1zm-402 1h1v1h-1zm13 0h1v1h-1zm9 0h1v1h-1zm50 0h1v1h-1zm200 0h1v1h-1zm50 0h1v1h-1zm22 0h1v1h-1zm35 0h1v1h-1zm-380 1h1v1h-1zm15 0h1v1h-1zm7 0h1v1h-1zm48 0h3v1h-3zm204 0h2v1h-2zm9 0h1v1h-1zm41 0h1v1h-1zm21 0h2v1h-2zm34 0h1v1h-1zm-438 1h1v1h-1zm58 0h1v1h-1zm17 0h1v1h-1zm5 0h1v1h-1zm49 0h1v1h-1zm206 0h1v1h-1zm49 0h1v1h-1zm19 0h1v1h-1zm3 0h1v1h-1zm30 0h2v1h-2zm28 0h1v1h-1zm-388 1h1v1h-1zm3 0h1v1h-1zm48 0h2v1h-2zm209 0h2v1h-2zm49 0h1v1h-1zm17 0h1v1h-1zm33 0h1v1h-1zm-358 1h2v1h-2zm48 0h2v1h-2zm213 0h3v1h-3zm48 0h1v1h-1zm15 0h1v1h-1zm33 0h1v1h-1zm-378 1h1v1h-1zm21 0h1v1h-1zm47 0h1v1h-1zm216 0h1v1h-1zm47 0h1v1h-1zm13 0h1v1h-1zm8 0h1v1h-1zm25 0h1v1h-1zm-378 1h1v1h-1zm21 0h1v1h-1zm46 0h2v1h-2zm219 0h2v1h-2zm47 0h1v1h-1zm11 0h1v1h-1zm10 0h1v1h-1zm22 0h2v1h-2zm-434 1h1v1h-1zm57 0h1v1h-1zm21 0h1v1h-1zm46 0h1v1h-1zm222 0h1v1h-1zm46 0h1v1h-1zm9 0h1v1h-1zm12 0h1v1h-1zm20 0h1v1h-1zm37 0h1v1h-1zm-414 1h1v1h-1zm21 0h1v1h-1zm45 0h2v1h-2zm225 0h2v1h-2zm46 0h1v1h-1zm7 0h1v1h-1zm14 0h1v1h-1zm18 0h1v1h-1zm-377 1h2v1h-2zm21 0h1v1h-1zm45 0h1v1h-1zm228 0h1v1h-1zm45 0h1v1h-1zm5 0h1v1h-1zm32 0h1v1h-1zm-433 1h1v1h-1zm57 0h1v1h-1zm2 0h1v1h-1zm18 0h1v1h-1zm45 0h1v1h-1zm230 0h1v1h-1zm45 0h1v1h-1zm3 0h1v1h-1zm31 0h2v1h-2zm43 0h1v1h-1zm-418 1h1v1h-1zm4 0h1v1h-1zm16 0h1v1h-1zm44 0h2v1h-2zm233 0h2v1h-2zm45 0h2v1h-2zm20 0h1v1h-1zm12 0h1v1h-1zm-375 1h1v1h-1zm6 0h1v1h-1zm14 0h1v1h-1zm44 0h1v1h-1zm236 0h1v1h-1zm44 0h1v1h-1zm20 0h1v1h-1zm10 0h1v1h-1zm-431 1h1v1h-1zm56 0h1v1h-1zm8 0h1v1h-1zm12 0h1v1h-1zm44 0h1v1h-1zm238 0h1v1h-1zm44 0h1v1h-1zm20 0h1v1h-1zm8 0h1v1h-1zm48 0h1v1h-1zm-423 1h1v1h-1zm10 0h2v1h-2zm10 0h1v1h-1zm44 0h1v1h-1zm240 0h1v1h-1zm44 0h1v1h-1zm20 0h1v1h-1zm5 0h2v1h-2zm-374 1h1v1h-1zm13 0h1v1h-1zm7 0h1v1h-1zm43 0h2v1h-2zm243 0h1v1h-1zm44 0h1v1h-1zm20 0h1v1h-1zm3 0h1v1h-1zm-429 1h1v1h-1zm70 0h1v1h-1zm5 0h1v1h-1zm43 0h1v1h-1zm245 0h2v1h-2zm44 0h1v1h-1zm20 0h2v1h-2zm55 0h1v1h-1zm-411 1h1v1h-1zm3 0h1v1h-1zm43 0h1v1h-1zm248 0h1v1h-1zm43 0h1v1h-1zm19 0h1v1h-1zm-373 1h1v1h-1zm18 0h2v1h-2zm44 0h1v1h-1zm250 0h1v1h-1zm43 0h1v1h-1zm16 0h2v1h-2zm3 0h1v1h-1zm-430 1h1v1h-1zm55 0h1v1h-1zm62 0h1v1h-1zm252 0h1v1h-1zm57 0h1v1h-1zm5 0h1v1h-1zm55 0h1v1h-1zm-371 1h2v1h-2zm255 0h2v1h-2zm55 0h1v1h-1zm-352 1h1v1h-1zm41 0h1v1h-1zm258 0h1v1h-1zm41 0h1v1h-1zm10 0h2v1h-2zm-370 1h1v1h-1zm19 0h1v1h-1zm41 0h1v1h-1zm260 0h1v1h-1zm41 0h1v1h-1zm8 0h1v1h-1zm11 0h1v1h-1zm-381 1h1v1h-1zm19 0h1v1h-1zm41 0h1v1h-1zm262 0h1v1h-1zm41 0h1v1h-1zm6 0h1v1h-1zm13 0h1v1h-1zm-437 1h1v1h-1zm73 0h1v1h-1zm41 0h1v1h-1zm264 0h1v1h-1zm41 0h1v1h-1zm3 0h2v1h-2zm70 0h1v1h-1zm-379 1h1v1h-1zm266 0h1v1h-1zm41 0h2v1h-2zm-367 1h1v1h-1zm2 0h2v1h-2zm57 0h1v1h-1zm268 0h1v1h-1zm40 0h1v1h-1zm19 0h1v1h-1zm-382 1h1v1h-1zm14 0h1v1h-1zm40 0h1v1h-1zm270 0h1v1h-1zm40 0h1v1h-1zm-363 1h1v1h-1zm12 0h1v1h-1zm40 0h1v1h-1zm272 0h1v1h-1zm40 0h1v1h-1zm-371 1h1v1h-1zm8 0h2v1h-2zm50 0h1v1h-1zm274 0h1v1h-1zm58 0h1v1h-1zm-391 1h1v1h-1zm11 0h1v1h-1zm47 0h1v1h-1zm276 0h1v1h-1zm58 0h1v1h-1zm-380 1h1v1h-1zm6 0h1v1h-1zm39 0h1v1h-1zm278 0h1v1h-1zm39 0h1v1h-1zm-361 1h2v1h-2zm4 0h1v1h-1zm39 0h1v1h-1zm280 0h1v1h-1zm39 0h1v1h-1zm-377 1h1v1h-1zm17 0h2v1h-2zm40 0h1v1h-1zm282 0h1v1h-1zm57 0h1v1h-1zm-378 1h1v1h-1zm38 0h1v1h-1zm284 0h1v1h-1zm56 0h2v1h-2zm-379 1h1v1h-1zm38 0h1v1h-1zm286 0h1v1h-1zm38 0h1v1h-1zm15 0h2v1h-2zm3 0h1v1h-1zm-399 1h1v1h-1zm18 0h1v1h-1zm38 0h1v1h-1zm288 0h1v1h-1zm38 0h1v1h-1zm13 0h1v1h-1zm5 0h1v1h-1zm-401 1h1v1h-1zm18 0h1v1h-1zm38 0h1v1h-1zm290 0h1v1h-1zm38 0h1v1h-1zm10 0h2v1h-2zm8 0h1v1h-1zm-10 1h2v1h-2zm-1 1h1v1h-1zm-393 1h1v1h-1zm18 0h1v1h-1zm38 0h1v1h-1zm294 0h1v1h-1zm38 0h1v1h-1zm3 0h2v1h-2zm15 0h1v1h-1zm-389 1h1v1h-1zm38 0h1v1h-1zm296 0h1v1h-1zm38 0h2v1h-2zm-335 1h1v1h-1zm298 0h1v1h-1zm-354 1h2v1h-2zm55 0h1v1h-1zm300 0h1v1h-1zm-355 1h1v1h-1zm2 0h2v1h-2zm2 1h2v1h-2zm2 1h1v1h-1zm47 0h1v1h-1zm304 0h1v1h-1zm-359 1h1v1h-1zm9 0h2v1h-2zm45 0h1v1h-1zm306 0h1v1h-1zm54 0h1v1h-1zm-403 1h2v1h-2zm6 0h1v1h-1zm36 0h1v1h-1zm308 0h1v1h-1zm36 0h1v1h-1zm-384 1h2v1h-2zm3 0h1v1h-1zm-1 1h2v1h-2zm0 1h1v1h-1zm36 0h1v1h-1zm312 0h1v1h-1zm36 0h1v1h-1zm-349 1h1v1h-1zm314 0h1v1h-1zm50 0h2v1h-2zm-2 1h2v1h-2zm-416 1h1v1h-1zm17 0h1v1h-1zm388 0h1v1h-1zm9 0h2v1h-2zm8 0h1v1h-1zm-370 1h1v1h-1zm318 0h1v1h-1zm43 0h1v1h-1zm-2 1h2v1h-2zm-4 1h1v1h-1zm2 0h2v1h-2zm-359 1h1v1h-1zm322 0h1v1h-1zm35 0h2v1h-2zm-411 3h2v1h-2zm2 1h2v1h-2zm2 1h2v1h-2zm12 0h2v1h-2zm35 0h1v1h-1zm328 0h1v1h-1zm-429 1h3v1h-3zm56 0h2v1h-2zm10 0h1v1h-1zm2 0h2v1h-2zm-68 1h1v1h-1zm3 0h2v1h-2zm55 0h2v1h-2zm12 0h2v1h-2zm393 0h3v1h-3zm-458 1h3v1h-3zm55 0h2v1h-2zm12 0h2v1h-2zm27 0h1v1h-1zm332 0h1v1h-1zm30 0h2v1h-2zm4 0h1v1h-1zm-457 1h2v1h-2zm54 0h3v1h-3zm12 0h2v1h-2zm385 0h2v1h-2zm-449 1h3v1h-3zm54 0h1v1h-1zm12 0h2v1h-2zm381 0h2v1h-2zm-444 1h2v1h-2zm65 0h2v1h-2zm19 0h1v1h-1zm336 0h1v1h-1zm22 0h2v1h-2zm-440 1h3v1h-3zm65 0h2v1h-2zm373 0h2v1h-2zm29 0h3v1h-3zm-464 1h2v1h-2zm64 0h2v1h-2zm369 0h2v1h-2zm29 0h2v1h-2zm4 0h1v1h-1zm-464 1h3v1h-3zm64 0h2v1h-2zm365 0h2v1h-2zm29 0h2v1h-2zm-455 1h2v1h-2zm63 0h2v1h-2zm361 0h2v1h-2zm29 0h2v1h-2zm-451 1h3v1h-3zm63 0h2v1h-2zm357 0h2v1h-2zm29 0h2v1h-2zm-446 1h2v1h-2zm62 0h2v1h-2zm353 0h2v1h-2zm27 0h1v1h-1zm2 0h2v1h-2zm-442 1h3v1h-3zm62 0h2v1h-2zm349 0h2v1h-2zm29 0h2v1h-2zm-437 1h2v1h-2zm406 0h2v1h-2zm-404 1h3v1h-3zm3 1h2v1h-2zm4 0h1v1h-1zm-2 1h5v1h-5zm5 1h2v1h-2zm2 1h2v1h-2zm2 1h3v1h-3zm3 1h2v1h-2zm4 0h1v1h-1zm-2 1h3v1h-3zm436 5h2v1h-2zm-3 1h3v1h-3zm-4 1h4v1h-4zm-3 1h3v1h-3zm-3 1h3v1h-3zm0 1h1v1h-1zm-442 4h1v1h-1zm0 1h3v1h-3zm3 1h3v1h-3zm3 1h4v1h-4zm4 1h3v1h-3zm5 0h1v1h-1zm-2 1h3v1h-3zm447 6h3v1h-3zm-5 1h5v1h-5zm-4 1h4v1h-4zm-4 1h4v1h-4zm-451 7h3v1h-3zm3 1h4v1h-4zm4 1h5v1h-5zm7 0h1v1h-1zm501 0h1v1h-1zm-503 1h3v1h-3zm499 0h5v1h-5zm-6 1h6v1h-6zm-6 1h6v1h-6zm-6 1h6v1h-6zm-6 1h6v1h-6zm-6 1h6v1h-6zm-6 1h6v1h-6zm-8 1h8v1h-8zm-7 1h7v1h-7zm-4 1h4v1h-4zm-460 9h8v1h-8zm8 1h8v1h-8zm615 2h4v1h-4zm0 3h4v1h-4zm2 1h1v1h-1zm1 1h1v1h-1zm1 1h1v1h-1zm-158 1h8v1h-8zm-8 1h8v1h-8zm-462 9h8v1h-8zm8 1h8v1h-8zm7 4h31v1h-31zm56 0h13v1h-13zm362 0h31v1h-31zm-38 4h6v1h-6zm68 0h8v1h-8zm-62 1h7v1h-7zm70 0h8v1h-8zm153 3h4v1h-4zm0 3h4v1h-4zm2 1h1v1h-1zm1 1h1v1h-1zm-619 1h9v1h-9zm620 0h1v1h-1zm-627 1h7v1h-7zm461 9h7v1h-7zm7 1h9v1h-9zm-455 9h4v1h-4zm-11 1h1v1h-1zm4 0h7v1h-7zm-8 1h8v1h-8zm-6 1h6v1h-6zm-6 1h6v1h-6zm637 0h4v1h-4zm-643 1h6v1h-6zm-6 1h6v1h-6zm-6 1h6v1h-6zm655 0h4v1h-4zm-661 1h6v1h-6zm663 0h1v1h-1zm-668 1h5v1h-5zm501 0h3v1h-3zm168 0h1v1h-1zm-538 1h2v1h-2zm373 0h4v1h-4zm166 0h1v1h-1zm-542 1h3v1h-3zm380 0h5v1h-5zm7 0h1v1h-1zm-390 1h3v1h-3zm388 0h3v1h-3zm-391 1h3v1h-3zm-2 1h2v1h-2zm-56 4h1v1h-1zm-3 1h4v1h-4zm-5 1h5v1h-5zm-7 1h1v1h-1zm3 0h4v1h-4zm-3 1h3v1h-3zm447 6h3v1h-3zm3 1h3v1h-3zm3 1h4v1h-4zm4 1h3v1h-3zm3 1h3v1h-3zm2 1h1v1h-1zm-442 4h1v1h-1zm-2 1h3v1h-3zm-3 1h3v1h-3zm-4 1h4v1h-4zm-3 1h3v1h-3zm-2 1h2v1h-2zm435 5h3v1h-3zm3 1h2v1h-2zm2 1h2v1h-2zm2 1h3v1h-3zm3 1h2v1h-2zm4 0h1v1h-1zm-2 1h5v1h-5zm2 1h1v1h-1zm3 0h2v1h-2zm-400 1h2v1h-2zm346 0h1v1h-1zm56 0h3v1h-3zm-404 1h2v1h-2zm4 0h1v1h-1zm403 0h2v1h-2zm-438 1h3v1h-3zm29 0h2v1h-2zm351 0h1v1h-1zm60 0h3v1h-3zm-442 1h2v1h-2zm4 0h1v1h-1zm25 0h2v1h-2zm354 0h2v1h-2zm62 0h2v1h-2zm-447 1h2v1h-2zm29 0h2v1h-2zm358 0h2v1h-2zm62 0h3v1h-3zm-451 1h2v1h-2zm29 0h2v1h-2zm362 0h2v1h-2zm63 0h2v1h-2zm-456 1h2v1h-2zm29 0h2v1h-2zm366 0h2v1h-2zm63 0h3v1h-3zm-460 1h2v1h-2zm29 0h2v1h-2zm370 0h2v1h-2zm64 0h2v1h-2zm-436 1h2v1h-2zm374 0h2v1h-2zm64 0h3v1h-3zm-440 1h2v1h-2zm378 0h2v1h-2zm65 0h2v1h-2zm-445 1h2v1h-2zm382 0h2v1h-2zm13 0h1v1h-1zm52 0h3v1h-3zm-449 1h2v1h-2zm386 0h2v1h-2zm11 0h2v1h-2zm55 0h2v1h-2zm-456 1h1v1h-1zm2 0h2v1h-2zm32 0h1v1h-1zm332 0h1v1h-1zm26 0h2v1h-2zm11 0h2v1h-2zm55 0h3v1h-3zm-458 1h2v1h-2zm394 0h2v1h-2zm11 0h2v1h-2zm56 0h2v1h-2zm4 0h1v1h-1zm-69 1h2v1h-2zm3 0h1v1h-1zm8 0h2v1h-2zm56 0h3v1h-3zm-427 1h1v1h-1zm328 0h1v1h-1zm34 0h2v1h-2zm11 0h2v1h-2zm2 1h2v1h-2zm2 1h2v1h-2zm1 1h1v1h-1zm-411 2h2v1h-2zm36 0h1v1h-1zm322 0h1v1h-1zm-360 1h2v1h-2zm3 0h1v1h-1zm-5 1h2v1h-2zm-2 1h2v1h-2zm44 0h1v1h-1zm318 0h1v1h-1zm-363 1h1v1h-1zm10 0h1v1h-1zm388 0h1v1h-1zm-400 1h2v1h-2zm-2 1h2v1h-2zm51 0h1v1h-1zm314 0h1v1h-1zm-349 1h1v1h-1zm36 0h1v1h-1zm312 0h1v1h-1zm36 0h1v1h-1zm-1 1h2v1h-2zm0 1h1v1h-1zm2 0h2v1h-2zm-383 1h1v1h-1zm36 0h1v1h-1zm308 0h1v1h-1zm36 0h1v1h-1zm5 0h2v1h-2zm-402 1h1v1h-1zm54 0h1v1h-1zm306 0h1v1h-1zm44 0h1v1h-1zm10 0h1v1h-1zm-359 1h1v1h-1zm304 0h1v1h-1zm46 0h2v1h-2zm-349 1h1v1h-1zm302 0h1v1h-1zm49 0h2v1h-2zm2 1h2v1h-2zm3 0h1v1h-1zm-1 1h2v1h-2zm-353 1h1v1h-1zm298 0h1v1h-1zm-336 1h2v1h-2zm39 0h1v1h-1zm240 0h1v1h-1zm56 0h1v1h-1zm38 0h1v1h-1zm-389 1h1v1h-1zm14 0h2v1h-2zm4 0h1v1h-1zm38 0h1v1h-1zm240 0h1v1h-1zm54 0h1v1h-1zm38 0h1v1h-1zm18 0h1v1h-1zm-393 1h1v1h-1zm6 0h1v1h-1zm278 0h2v1h-2zm90 0h1v1h-1zm-376 1h2v1h-2zm103 0h1v1h-1zm185 0h1v1h-1zm-297 1h1v1h-1zm7 0h2v1h-2zm49 0h1v1h-1zm55 0h1v1h-1zm187 0h1v1h-1zm48 0h1v1h-1zm56 0h1v1h-1zm-401 1h1v1h-1zm5 0h1v1h-1zm13 0h1v1h-1zm38 0h1v1h-1zm242 0h1v1h-1zm46 0h1v1h-1zm38 0h1v1h-1zm18 0h1v1h-1zm-399 1h1v1h-1zm2 0h2v1h-2zm16 0h1v1h-1zm38 0h1v1h-1zm242 0h2v1h-2zm44 0h1v1h-1zm38 0h1v1h-1zm-380 1h2v1h-2zm57 0h1v1h-1zm50 0h1v1h-1zm193 0h1v1h-1zm41 0h1v1h-1zm38 0h1v1h-1zm-378 1h1v1h-1zm57 0h1v1h-1zm48 0h1v1h-1zm195 0h1v1h-1zm39 0h1v1h-1zm39 0h2v1h-2zm18 0h1v1h-1zm-377 1h1v1h-1zm39 0h1v1h-1zm280 0h1v1h-1zm39 0h1v1h-1zm3 0h2v1h-2zm-360 1h1v1h-1zm39 0h1v1h-1zm278 0h1v1h-1zm39 0h1v1h-1zm6 0h1v1h-1zm-380 1h1v1h-1zm58 0h1v1h-1zm43 0h1v1h-1zm233 0h1v1h-1zm47 0h1v1h-1zm11 0h1v1h-1zm-391 1h1v1h-1zm58 0h1v1h-1zm41 0h1v1h-1zm233 0h1v1h-1zm49 0h2v1h-2zm9 0h1v1h-1zm-371 1h1v1h-1zm40 0h1v1h-1zm272 0h1v1h-1zm40 0h1v1h-1zm12 0h1v1h-1zm-363 1h1v1h-1zm40 0h1v1h-1zm270 0h1v1h-1zm40 0h1v1h-1zm14 0h1v1h-1zm-382 1h1v1h-1zm19 0h1v1h-1zm40 0h1v1h-1zm268 0h1v1h-1zm40 0h1v1h-1zm16 0h2v1h-2zm3 0h1v1h-1zm-368 1h1v1h-1zm42 0h1v1h-1zm266 0h1v1h-1zm-379 1h1v1h-1zm69 0h2v1h-2zm45 0h1v1h-1zm264 0h1v1h-1zm114 0h1v1h-1zm-437 1h1v1h-1zm13 0h1v1h-1zm6 0h1v1h-1zm41 0h1v1h-1zm262 0h1v1h-1zm41 0h1v1h-1zm19 0h1v1h-1zm-381 1h1v1h-1zm11 0h1v1h-1zm8 0h1v1h-1zm41 0h1v1h-1zm260 0h1v1h-1zm41 0h1v1h-1zm19 0h1v1h-1zm-434 1h1v1h-1zm63 0h2v1h-2zm11 0h1v1h-1zm41 0h1v1h-1zm258 0h1v1h-1zm41 0h1v1h-1zm74 0h1v1h-1zm-426 1h1v1h-1zm13 0h1v1h-1zm41 0h2v1h-2zm255 0h2v1h-2zm42 0h1v1h-1zm-357 1h1v1h-1zm5 0h1v1h-1zm57 0h1v1h-1zm252 0h1v1h-1zm42 0h1v1h-1zm20 0h1v1h-1zm-375 1h1v1h-1zm2 0h2v1h-2zm60 0h1v1h-1zm250 0h1v1h-1zm43 0h2v1h-2zm19 0h1v1h-1zm-373 1h1v1h-1zm19 0h1v1h-1zm43 0h1v1h-1zm248 0h1v1h-1zm43 0h1v1h-1zm3 0h1v1h-1zm16 0h1v1h-1zm-427 1h1v1h-1zm54 0h1v1h-1zm21 0h1v1h-1zm43 0h1v1h-1zm245 0h2v1h-2zm44 0h1v1h-1zm5 0h1v1h-1zm70 0h1v1h-1zm-429 1h1v1h-1zm23 0h1v1h-1zm43 0h2v1h-2zm243 0h1v1h-1zm44 0h1v1h-1zm7 0h1v1h-1zm-362 1h2v1h-2zm6 0h1v1h-1zm20 0h1v1h-1zm44 0h1v1h-1zm240 0h1v1h-1zm44 0h1v1h-1zm9 0h1v1h-1zm11 0h1v1h-1zm-423 1h1v1h-1zm48 0h1v1h-1zm8 0h1v1h-1zm20 0h1v1h-1zm44 0h1v1h-1zm238 0h1v1h-1zm44 0h1v1h-1zm11 0h2v1h-2zm9 0h1v1h-1zm56 0h1v1h-1zm-431 1h1v1h-1zm10 0h1v1h-1zm20 0h1v1h-1zm44 0h1v1h-1zm236 0h1v1h-1zm44 0h1v1h-1zm14 0h1v1h-1zm6 0h1v1h-1zm-375 1h1v1h-1zm12 0h1v1h-1zm19 0h2v1h-2zm45 0h2v1h-2zm233 0h2v1h-2zm45 0h1v1h-1zm16 0h1v1h-1zm4 0h1v1h-1zm-418 1h1v1h-1zm42 0h2v1h-2zm32 0h1v1h-1zm3 0h1v1h-1zm45 0h1v1h-1zm230 0h1v1h-1zm45 0h1v1h-1zm18 0h1v1h-1zm2 0h1v1h-1zm57 0h1v1h-1zm-433 1h1v1h-1zm32 0h1v1h-1zm5 0h1v1h-1zm45 0h1v1h-1zm228 0h1v1h-1zm45 0h1v1h-1zm20 0h2v1h-2zm-376 1h1v1h-1zm18 0h1v1h-1zm14 0h1v1h-1zm7 0h1v1h-1zm45 0h2v1h-2zm225 0h2v1h-2zm46 0h1v1h-1zm21 0h1v1h-1zm-414 1h1v1h-1zm37 0h1v1h-1zm20 0h1v1h-1zm12 0h1v1h-1zm9 0h1v1h-1zm46 0h1v1h-1zm222 0h1v1h-1zm46 0h1v1h-1zm21 0h1v1h-1zm57 0h1v1h-1zm-435 1h2v1h-2zm23 0h1v1h-1zm10 0h1v1h-1zm11 0h1v1h-1zm46 0h2v1h-2zm219 0h2v1h-2zm47 0h1v1h-1zm21 0h1v1h-1zm-378 1h1v1h-1zm25 0h1v1h-1zm8 0h1v1h-1zm13 0h1v1h-1zm47 0h1v1h-1zm216 0h1v1h-1zm47 0h1v1h-1zm21 0h1v1h-1zm-409 1h1v1h-1zm31 0h1v1h-1zm27 0h1v1h-1zm6 0h1v1h-1zm15 0h1v1h-1zm46 0h3v1h-3zm214 0h2v1h-2zm48 0h2v1h-2zm21 0h1v1h-1zm58 0h1v1h-1zm-437 1h2v1h-2zm34 0h1v1h-1zm17 0h1v1h-1zm48 0h2v1h-2zm209 0h2v1h-2zm49 0h1v1h-1zm3 0h1v1h-1zm-361 1h1v1h-1zm34 0h1v1h-1zm19 0h1v1h-1zm49 0h1v1h-1zm206 0h1v1h-1zm49 0h1v1h-1zm5 0h1v1h-1zm-363 1h1v1h-1zm33 0h2v1h-2zm22 0h1v1h-1zm41 0h1v1h-1zm8 0h2v1h-2zm203 0h3v1h-3zm50 0h1v1h-1zm7 0h1v1h-1zm15 0h1v1h-1zm-380 1h1v1h-1zm35 0h1v1h-1zm22 0h1v1h-1zm50 0h1v1h-1zm200 0h1v1h-1zm50 0h1v1h-1zm9 0h1v1h-1zm13 0h1v1h-1zm-402 1h1v1h-1zm21 0h2v1h-2zm38 0h1v1h-1zm22 0h1v1h-1zm50 0h2v1h-2zm197 0h2v1h-2zm51 0h1v1h-1zm11 0h1v1h-1zm11 0h1v1h-1zm59 0h1v1h-1zm-459 1h1v1h-1zm19 0h1v1h-1zm40 0h1v1h-1zm22 0h1v1h-1zm36 0h1v1h-1zm15 0h1v1h-1zm193 0h2v1h-2zm9 0h1v1h-1zm42 0h2v1h-2zm14 0h1v1h-1zm9 0h1v1h-1zm59 0h1v1h-1zm-440 1h1v1h-1zm42 0h1v1h-1zm21 0h3v1h-3zm52 0h2v1h-2zm190 0h2v1h-2zm52 0h1v1h-1zm16 0h1v1h-1zm7 0h1v1h-1zm-381 1h1v1h-1zm44 0h1v1h-1zm19 0h1v1h-1zm4 0h1v1h-1zm51 0h2v1h-2zm186 0h2v1h-2zm53 0h1v1h-1zm18 0h1v1h-1zm5 0h1v1h-1zm-395 1h1v1h-1zm13 0h2v1h-2zm47 0h1v1h-1zm17 0h1v1h-1zm6 0h1v1h-1zm30 0h1v1h-1zm22 0h2v1h-2zm182 0h2v1h-2zm54 0h1v1h-1zm20 0h1v1h-1zm3 0h1v1h-1zm60 0h1v1h-1zm-453 1h1v1h-1zm11 0h1v1h-1zm49 0h1v1h-1zm15 0h1v1h-1zm8 0h1v1h-1zm53 0h2v1h-2zm178 0h2v1h-2zm55 0h1v1h-1zm22 0h2v1h-2zm61 0h1v1h-1zm-442 1h1v1h-1zm51 0h1v1h-1zm13 0h1v1h-1zm10 0h1v1h-1zm54 0h2v1h-2zm174 0h2v1h-2zm22 0h1v1h-1zm33 0h2v1h-2zm24 0h1v1h-1zm-382 1h1v1h-1zm53 0h1v1h-1zm23 0h2v1h-2zm25 0h1v1h-1zm30 0h2v1h-2zm170 0h2v1h-2zm56 0h1v1h-1zm23 0h2v1h-2zm-387 1h1v1h-1zm5 0h2v1h-2zm56 0h2v1h-2zm24 0h1v1h-1zm55 0h2v1h-2zm166 0h2v1h-2zm57 0h1v1h-1zm2 0h1v1h-1zm21 0h1v1h-1zm62 0h1v1h-1zm-447 1h1v1h-1zm3 0h1v1h-1zm59 0h1v1h-1zm7 0h1v1h-1zm16 0h1v1h-1zm56 0h2v1h-2zm162 0h2v1h-2zm30 0h1v1h-1zm28 0h1v1h-1zm23 0h1v1h-1zm62 0h1v1h-1zm-445 1h2v1h-2zm62 0h1v1h-1zm5 0h1v1h-1zm18 0h2v1h-2zm19 0h1v1h-1zm38 0h3v1h-3zm158 0h2v1h-2zm58 0h2v1h-2zm24 0h1v1h-1zm62 0h1v1h-1zm-443 1h1v1h-1zm62 0h1v1h-1zm3 0h1v1h-1zm21 0h1v1h-1zm58 0h2v1h-2zm153 0h2v1h-2zm59 0h1v1h-1zm8 0h1v1h-1zm16 0h1v1h-1zm62 0h1v1h-1zm-441 1h1v1h-1zm62 0h2v1h-2zm24 0h1v1h-1zm59 0h2v1h-2zm149 0h2v1h-2zm60 0h1v1h-1zm10 0h1v1h-1zm14 0h1v1h-1zm62 0h1v1h-1zm-439 1h1v1h-1zm62 0h2v1h-2zm24 0h2v1h-2zm13 0h1v1h-1zm47 0h3v1h-3zm144 0h3v1h-3zm61 0h2v1h-2zm24 0h2v1h-2zm63 0h1v1h-1zm-437 1h1v1h-1zm63 0h1v1h-1zm22 0h1v1h-1zm2 0h1v1h-1zm61 0h3v1h-3zm138 0h3v1h-3zm45 0h1v1h-1zm18 0h1v1h-1zm24 0h1v1h-1zm63 0h1v1h-1zm-435 1h1v1h-1zm63 0h1v1h-1zm24 0h1v1h-1zm63 0h3v1h-3zm132 0h3v1h-3zm65 0h1v1h-1zm16 0h1v1h-1zm8 0h1v1h-1zm63 0h1v1h-1zm-433 1h1v1h-1zm63 0h1v1h-1zm24 0h1v1h-1zm7 0h1v1h-1zm58 0h3v1h-3zm126 0h3v1h-3zm66 0h2v1h-2zm19 0h1v1h-1zm6 0h1v1h-1zm63 0h1v1h-1zm-368 1h1v1h-1zm17 0h1v1h-1zm7 0h2v1h-2zm67 0h3v1h-3zm120 0h3v1h-3zm56 0h1v1h-1zm12 0h1v1h-1zm25 0h1v1h-1zm-303 1h1v1h-1zm15 0h1v1h-1zm10 0h1v1h-1zm68 0h4v1h-4zm113 0h4v1h-4zm71 0h1v1h-1zm24 0h2v1h-2zm-364 1h1v1h-1zm64 0h2v1h-2zm25 0h2v1h-2zm71 0h3v1h-3zm106 0h3v1h-3zm73 0h1v1h-1zm24 0h1v1h-1zm65 0h1v1h-1zm-427 1h1v1h-1zm65 0h1v1h-1zm24 0h2v1h-2zm73 0h3v1h-3zm100 0h3v1h-3zm74 0h3v1h-3zm25 0h1v1h-1zm2 0h1v1h-1zm63 0h1v1h-1zm-360 1h1v1h-1zm9 0h1v1h-1zm16 0h2v1h-2zm74 0h3v1h-3zm94 0h3v1h-3zm75 0h2v1h-2zm26 0h1v1h-1zm4 0h1v1h-1zm-297 1h2v1h-2zm7 0h1v1h-1zm19 0h2v1h-2zm75 0h4v1h-4zm87 0h4v1h-4zm76 0h3v1h-3zm27 0h2v1h-2zm-356 1h1v1h-1zm67 0h1v1h-1zm26 0h1v1h-1zm77 0h5v1h-5zm78 0h5v1h-5zm81 0h1v1h-1zm9 0h1v1h-1zm17 0h1v1h-1zm67 0h1v1h-1zm-421 1h1v1h-1zm67 0h1v1h-1zm26 0h2v1h-2zm81 0h6v1h-6zm66 0h7v1h-7zm86 0h2v1h-2zm27 0h1v1h-1zm10 0h1v1h-1zm57 0h1v1h-1zm-419 1h1v1h-1zm67 0h2v1h-2zm26 0h2v1h-2zm86 0h7v1h-7zm54 0h6v1h-6zm91 0h1v1h-1zm26 0h2v1h-2zm13 0h1v1h-1zm55 0h1v1h-1zm-417 1h1v1h-1zm68 0h1v1h-1zm26 0h2v1h-2zm91 0h7v1h-7zm40 0h7v1h-7zm96 0h2v1h-2zm27 0h1v1h-1zm15 0h1v1h-1zm53 0h1v1h-1zm-415 1h1v1h-1zm68 0h2v1h-2zm27 0h1v1h-1zm96 0h33v1h-33zm128 0h1v1h-1zm26 0h2v1h-2zm69 0h1v1h-1zm-413 1h1v1h-1zm69 0h1v1h-1zm26 0h2v1h-2zm221 0h2v1h-2zm20 0h1v1h-1zm7 0h1v1h-1zm69 0h1v1h-1zm-411 1h1v1h-1zm69 0h1v1h-1zm27 0h2v1h-2zm217 0h2v1h-2zm28 0h1v1h-1zm21 0h1v1h-1zm48 0h1v1h-1zm-409 1h1v1h-1zm69 0h2v1h-2zm16 0h1v1h-1zm12 0h2v1h-2zm213 0h3v1h-3zm28 0h2v1h-2zm24 0h1v1h-1zm46 0h1v1h-1zm-407 1h1v1h-1zm70 0h1v1h-1zm28 0h2v1h-2zm209 0h2v1h-2zm28 0h2v1h-2zm27 0h1v1h-1zm44 0h1v1h-1zm-405 1h1v1h-1zm70 0h2v1h-2zm29 0h2v1h-2zm205 0h2v1h-2zm29 0h2v1h-2zm71 0h1v1h-1zm-403 1h1v1h-1zm71 0h1v1h-1zm29 0h2v1h-2zm201 0h2v1h-2zm30 0h1v1h-1zm71 0h1v1h-1zm-401 1h1v1h-1zm71 0h1v1h-1zm30 0h2v1h-2zm197 0h2v1h-2zm31 0h1v1h-1zm32 0h1v1h-1zm39 0h1v1h-1zm-399 1h1v1h-1zm71 0h2v1h-2zm29 0h1v1h-1zm2 0h2v1h-2zm193 0h2v1h-2zm15 0h1v1h-1zm16 0h2v1h-2zm35 0h1v1h-1zm37 0h1v1h-1zm-397 1h1v1h-1zm72 0h1v1h-1zm31 0h2v1h-2zm189 0h2v1h-2zm32 0h1v1h-1zm37 0h1v1h-1zm35 0h1v1h-1zm-395 1h1v1h-1zm72 0h3v1h-3zm32 0h2v1h-2zm185 0h2v1h-2zm32 0h2v1h-2zm73 0h1v1h-1zm-393 1h1v1h-1zm73 0h2v1h-2zm32 0h2v1h-2zm181 0h2v1h-2zm32 0h2v1h-2zm74 0h1v1h-1zm-391 1h1v1h-1zm74 0h2v1h-2zm32 0h2v1h-2zm177 0h3v1h-3zm32 0h2v1h-2zm45 0h1v1h-1zm30 0h1v1h-1zm-389 1h1v1h-1zm75 0h1v1h-1zm32 0h2v1h-2zm173 0h2v1h-2zm33 0h1v1h-1zm47 0h1v1h-1zm28 0h1v1h-1zm-387 1h1v1h-1zm75 0h2v1h-2zm33 0h3v1h-3zm167 0h4v1h-4zm35 0h2v1h-2zm76 0h1v1h-1zm-385 1h1v1h-1zm76 0h2v1h-2zm34 0h4v1h-4zm160 0h4v1h-4zm37 0h2v1h-2zm77 0h1v1h-1zm-383 1h1v1h-1zm77 0h2v1h-2zm36 0h4v1h-4zm153 0h3v1h-3zm38 0h2v1h-2zm55 0h1v1h-1zm23 0h1v1h-1zm-381 1h1v1h-1zm78 0h1v1h-1zm38 0h2v1h-2zm147 0h2v1h-2zm38 0h2v1h-2zm58 0h1v1h-1zm21 0h1v1h-1zm-379 1h1v1h-1zm78 0h2v1h-2zm39 0h2v1h-2zm143 0h2v1h-2zm38 0h2v1h-2zm61 0h1v1h-1zm18 0h2v1h-2zm-376 1h2v1h-2zm79 0h2v1h-2zm4 0h1v1h-1zm35 0h3v1h-3zm137 0h4v1h-4zm40 0h2v1h-2zm80 0h1v1h-1zm-373 1h1v1h-1zm79 0h3v1h-3zm40 0h4v1h-4zm130 0h4v1h-4zm42 0h2v1h-2zm81 0h1v1h-1zm-371 1h1v1h-1zm80 0h3v1h-3zm42 0h4v1h-4zm123 0h3v1h-3zm43 0h2v1h-2zm69 0h1v1h-1zm12 0h2v1h-2zm-368 1h2v1h-2zm82 0h2v1h-2zm43 0h4v1h-4zm115 0h4v1h-4zm45 0h2v1h-2zm72 0h1v1h-1zm10 0h1v1h-1zm-365 1h1v1h-1zm82 0h2v1h-2zm45 0h3v1h-3zm107 0h4v1h-4zm44 0h1v1h-1zm3 0h2v1h-2zm75 0h1v1h-1zm8 0h1v1h-1zm-363 1h1v1h-1zm83 0h2v1h-2zm46 0h4v1h-4zm100 0h4v1h-4zm48 0h3v1h-3zm85 0h1v1h-1zm-361 1h1v1h-1zm84 0h2v1h-2zm48 0h4v1h-4zm92 0h4v1h-4zm50 0h2v1h-2zm86 0h1v1h-1zm-359 1h1v1h-1zm85 0h2v1h-2zm50 0h4v1h-4zm84 0h4v1h-4zm52 0h2v1h-2zm84 0h1v1h-1zm3 0h1v1h-1zm-357 1h1v1h-1zm86 0h2v1h-2zm52 0h6v1h-6zm75 0h5v1h-5zm55 0h2v1h-2zm87 0h2v1h-2zm-354 1h1v1h-1zm87 0h3v1h-3zm56 0h7v1h-7zm61 0h8v1h-8zm61 0h2v1h-2zm89 0h1v1h-1zm-353 1h1v1h-1zm89 0h2v1h-2zm60 0h16v1h-16zm38 0h16v1h-16zm74 0h3v1h-3zm91 0h1v1h-1zm-351 1h1v1h-1zm89 0h4v1h-4zm75 0h22v1h-22zm94 0h2v1h-2zm92 0h1v1h-1zm-349 1h1v1h-1zm88 0h1v1h-1zm4 0h3v1h-3zm158 0h1v1h-1zm4 0h3v1h-3zm93 0h2v1h-2zm-346 1h2v1h-2zm94 0h4v1h-4zm155 0h4v1h-4zm96 0h1v1h-1zm-343 1h1v1h-1zm96 0h3v1h-3zm148 0h3v1h-3zm98 0h1v1h-1zm-341 1h1v1h-1zm98 0h2v1h-2zm142 0h3v1h-3zm99 0h2v1h-2zm-338 1h2v1h-2zm99 0h3v1h-3zm138 0h2v1h-2zm100 0h1v1h-1zm-335 1h1v1h-1zm100 0h4v1h-4zm131 0h4v1h-4zm103 0h1v1h-1zm-333 1h2v1h-2zm103 0h4v1h-4zm123 0h4v1h-4zm105 0h2v1h-2zm-329 1h1v1h-1zm105 0h4v1h-4zm114 0h5v1h-5zm108 0h2v1h-2zm-326 1h2v1h-2zm108 0h4v1h-4zm106 0h4v1h-4zm111 0h1v1h-1zm-323 1h2v1h-2zm110 0h6v1h-6zm96 0h6v1h-6zm115 0h2v1h-2zm-319 1h1v1h-1zm114 0h6v1h-6zm84 0h6v1h-6zm120 0h1v1h-1zm-317 1h2v1h-2zm119 0h4v1h-4zm74 0h4v1h-4zm122 0h2v1h-2zm-313 1h1v1h-1zm121 0h6v1h-6zm64 0h6v1h-6zm127 0h1v1h-1zm-311 1h2v1h-2zm126 0h17v1h-17zm41 0h17v1h-17zm142 0h2v1h-2zm-307 1h1v1h-1zm141 0h24v1h-24zm165 0h1v1h-1zm-305 1h2v1h-2zm303 0h2v1h-2zm-301 1h1v1h-1zm300 0h1v1h-1zm-299 1h2v1h-2zm297 0h2v1h-2zm-295 1h1v1h-1zm293 0h2v1h-2zm-292 1h2v1h-2zm291 0h1v1h-1zm-289 1h2v1h-2zm287 0h2v1h-2zm-285 1h1v1h-1zm284 0h1v1h-1zm-283 1h2v1h-2zm281 0h2v1h-2zm-279 1h2v1h-2zm277 0h2v1h-2zm-275 1h2v1h-2zm273 0h2v1h-2zm-271 1h2v1h-2zm269 0h2v1h-2zm-267 1h2v1h-2zm265 0h2v1h-2zm-263 1h2v1h-2zm261 0h2v1h-2zm-259 1h2v1h-2zm257 0h2v1h-2zm-255 1h2v1h-2zm253 0h2v1h-2zm-251 1h3v1h-3zm248 0h3v1h-3zm-245 1h2v1h-2zm243 0h2v1h-2zm-241 1h2v1h-2zm239 0h2v1h-2zm-237 1h2v1h-2zm235 0h2v1h-2zm-233 1h3v1h-3zm230 0h3v1h-3zm-227 1h2v1h-2zm225 0h2v1h-2zm-223 1h2v1h-2zm221 0h2v1h-2zm-219 1h2v1h-2zm217 0h2v1h-2zm-215 1h3v1h-3zm5 0h1v1h-1zm207 0h3v1h-3zm-209 1h3v1h-3zm207 0h2v1h-2zm-205 1h2v1h-2zm203 0h2v1h-2zm-201 1h2v1h-2zm199 0h2v1h-2zm-197 1h3v1h-3zm194 0h3v1h-3zm-191 1h3v1h-3zm187 0h4v1h-4zm-184 1h4v1h-4zm181 0h3v1h-3zm-177 1h3v1h-3zm174 0h3v1h-3zm-171 1h3v1h-3zm168 0h3v1h-3zm-165 1h3v1h-3zm162 0h3v1h-3zm-159 1h3v1h-3zm156 0h3v1h-3zm-153 1h3v1h-3zm149 0h4v1h-4zm-146 1h4v1h-4zm143 0h3v1h-3zm-139 1h4v1h-4zm135 0h4v1h-4zm-131 1h4v1h-4zm127 0h4v1h-4zm-123 1h5v1h-5zm118 0h5v1h-5zm-113 1h5v1h-5zm108 0h5v1h-5zm-103 1h7v1h-7zm94 0h9v1h-9zm-87 1h10v1h-10zm78 0h10v1h-10zm-68 1h10v1h-10zm58 0h10v1h-10zm-48 1h10v1h-10zm38 0h10v1h-10zm-28 1h28v1h-28z"/>
</svg>
</body></html>
